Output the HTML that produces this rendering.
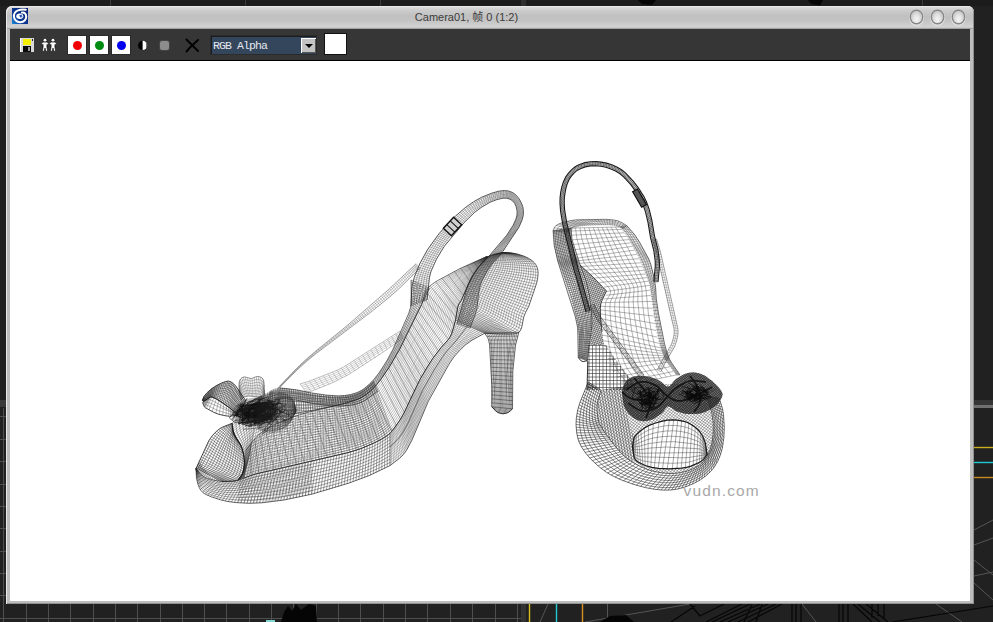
<!DOCTYPE html>
<html><head><meta charset="utf-8"><title>Camera01</title>
<style>
html,body{margin:0;padding:0;background:#212121;}
body{width:993px;height:622px;overflow:hidden;position:relative;font-family:"Liberation Sans","Noto Sans CJK SC",sans-serif;}
#desk{position:absolute;left:0;top:0;width:993px;height:622px;}
#win{position:absolute;left:6px;top:6px;width:968px;height:598px;background:#bdbdbd;border-radius:6px 6px 0 0;overflow:hidden;}
#win:before{content:"";position:absolute;left:0;top:0;right:0;bottom:0;border-radius:6px 6px 0 0;box-shadow:inset 1px 1px 0 #e8e8e8, inset -1px -1px 0 #8f8f8f;z-index:5;pointer-events:none;}
#tbar{position:absolute;left:0;top:0;width:968px;height:23px;background:linear-gradient(to bottom,#f2f2f2 0,#dcdcdc 1px,#cdcdcd 4px,#c0c0c0 10px,#c2c2c2 14px,#cecece 19px,#d4d4d4 21px,#bcbcbc 22px,#8e8e8e 23px);}
#title{position:absolute;left:0;top:0;width:921px;text-align:center;font-size:11px;line-height:23px;color:#3c3c3c;white-space:nowrap;letter-spacing:0px;}
.wb{position:absolute;top:5px;width:11px;height:12px;border-radius:50%;background:radial-gradient(ellipse at 50% 70%,#f4f4f4 0,#e2e2e2 40%,#c4c4c4 75%,#a4a4a4 100%);box-shadow:0 0 0 1.400px #868686, 0 1px 0 2px #dedede;}
#tool{position:absolute;left:4px;top:23px;width:960px;height:31px;background:#363636;border-bottom:1px solid #000;}
#view{position:absolute;left:4px;top:55px;width:960px;height:540px;background:#fff;overflow:hidden;}
.cb{position:absolute;top:7px;width:18px;height:18px;background:#fff;box-shadow:0 0 0 1px #2a2a2a;}
.cb i{position:absolute;left:5px;top:5px;width:9px;height:9px;border-radius:50%;}
#dd{position:absolute;left:201px;top:7px;width:105px;height:18px;background:#34465b;box-shadow:inset 1px 1px 0 #1c1c1c, 0 0 0 1px #2b2b2b;}
#dd span{position:absolute;left:2px;top:0;font-family:"Liberation Mono",monospace;font-size:11.5px;line-height:19px;color:#e4e8ee;letter-spacing:-0.9px;white-space:pre;}
#ddb{position:absolute;left:90px;top:2px;width:15px;height:15px;background:#c3c3c3;box-shadow:inset 1px 1px 0 #fff, inset -1px -1px 0 #555;}
#ddb:after{content:"";position:absolute;left:4px;top:6px;border:4px solid transparent;border-top:4px solid #000;border-bottom:0;}
#sw{position:absolute;left:315px;top:5px;width:21px;height:20px;background:#fff;box-shadow:0 0 0 1px #111;}
</style></head><body>
<svg id="desk" width="993" height="622" viewBox="0 0 993 622">
<rect width="993" height="622" fill="#212121"/>
<rect x="0" y="0" width="993" height="6" fill="#1c1c1c"/><rect x="521" y="0" width="5" height="6" fill="#2e2e2e"/>
<g stroke="#3a3a3a" stroke-width="1">
<path d="M110.500 0V6M245.500 0V6M380.500 0V6M922.500 0V6"/>
</g>
<!-- left viewport grid -->
<g stroke="#4e4e4e" stroke-width="1" shape-rendering="crispEdges">
<path d="M3.5 408V622M26.500 604V622M48.500 604V622M70.500 604V622M93.500 604V622M115.500 604V622M137.500 604V622M160.500 604V622M182.500 604V622M204.500 604V622M226.500 604V622M249.500 604V622M271.500 604V622M293.500 604V622M316.500 604V622M338.500 604V622M360.500 604V622M383.500 604V622M405.500 604V622M427.500 604V622M450.500 604V622M472.500 604V622M495.500 604V622M517.500 604V622"/>
<path d="M0 618.500H521M0 595.500H6M0 573.500H6M0 551.500H6M0 528.500H6M0 506.500H6M0 484.500H6M0 461.500H6M0 439.500H6M0 416.500H6"/>
</g>
<rect x="0" y="400" width="6" height="7" fill="#3a3a3a"/>
<rect x="521" y="604" width="5" height="18" fill="#333"/>
<rect x="974" y="400" width="19" height="5" fill="#353535"/><rect x="974" y="405" width="19" height="3" fill="#707070"/>
<path d="M529.500 604V622" stroke="#d8c020" stroke-width="1.400"/>
<path d="M556.500 604V622" stroke="#20c8d0" stroke-width="1.400"/>
<path d="M582.500 604V622" stroke="#d89020" stroke-width="1.400"/>
<path d="M974 447.500H993" stroke="#c8b020" stroke-width="1.400"/>
<path d="M974 462.500H993" stroke="#20c8d0" stroke-width="1.400"/>
<path d="M974 477.500H993" stroke="#c88a20" stroke-width="1.400"/>
<g stroke="#555" stroke-width="1" fill="none">
<path d="M607.500 604V622M540 622L548 604M585 622L690 604M802 604L816 622M936 604L962 622M974 530L993 520M974 545L993 538M974 560L993 575M974 583L993 600M974 576L993 572"/>
</g>
<g fill="#050505">
<path d="M281 622L284 612L288 606L292 611L296 604L301 610L309 604L316 606L317 622Z"/>
<path d="M638 0L656 0L652 5L642 4Z"/>
<path d="M808 0L823 0L820 5.500L811 4Z"/>
<path d="M600 622L610 616L626 615L634 622Z"/>
</g>
<g stroke="#060606" stroke-width="1.200" fill="none">
<path d="M695 606L671 622M690 604L700 616M700 616L724 604M706 622L742 604M712 622L750 604M720 622L760 604M728 622L768 604M738 622L776 604M748 622L782 604M752 604L744 622M762 604L756 622"/>
<path d="M792 604V622M796 604V622M801 604V622M839 604V622M843 604V622M848 604V622M853 604L872 622M858 604L880 622M866 604L888 622M872 604V618M878 604V616M884 604V620M892 622L993 606"/>
</g>
<rect x="266" y="620" width="9" height="2" fill="#7fd6d0"/>
</svg>
<div id="win">
 <div id="tbar"></div>
 <div id="title">Camera01, 帧 0 (1:2)</div>
 <svg style="position:absolute;left:6px;top:2px" width="16" height="16" viewBox="0 0 16 16">
  <defs><linearGradient id="lg" x1="0" y1="1" x2="1" y2="0"><stop offset="0" stop-color="#1f8fe0"/><stop offset="0.350" stop-color="#0c3a96"/><stop offset="1" stop-color="#0a2070"/></linearGradient></defs>
  <rect width="16" height="16" fill="url(#lg)"/>
  <path d="M13.800 1.700C9 0.900 2.200 2.200 1.900 7.600C1.700 12 5 14.300 8.300 14.200C12 14.100 14.400 11.600 14.200 8.400C14 5.800 12 4.500 10 4.600" fill="none" stroke="#fff" stroke-width="2" stroke-linecap="round"/>
  <ellipse cx="7.800" cy="8.300" rx="3.500" ry="2.700" fill="#fff"/><path d="M7.200 7.200L10.600 6.600L9.400 8.200L11.400 9L8.200 9.600Z" fill="#1a4fb0"/>
 </svg>
 <div class="wb" style="left:905px"></div><div class="wb" style="left:926px"></div><div class="wb" style="left:947px"></div>
 <div id="tool">
  <svg style="position:absolute;left:10px;top:9px" width="14" height="14" viewBox="0 0 14 14" shape-rendering="crispEdges">
   <rect x="0" y="0" width="14" height="14" fill="#d8d8d8"/><rect x="0" y="0" width="1" height="14" fill="#fff"/>
   <rect x="3" y="1" width="8" height="6" fill="#f4f000"/><rect x="3" y="8" width="8" height="6" fill="#0a0a0a"/><rect x="8" y="9" width="2" height="4" fill="#9a9a9a"/>
   <rect x="12" y="1" width="1" height="2" fill="#222"/>
  </svg>
  <svg style="position:absolute;left:31px;top:9px" width="16" height="14" viewBox="0 0 16 14">
   <g fill="#fff" stroke="#000" stroke-width="0.600">
    <circle cx="4" cy="2.200" r="1.900"/><path d="M0.300 5.600L2.300 4.100H5.700L7.700 5.600L6.900 7L5.900 6.400V9L6.700 13.200H4.700L4 10L3.300 13.200H1.300L2.100 9V6.400L1.100 7Z"/>
    <circle cx="12" cy="2.200" r="1.900"/><path d="M8.300 5.600L10.300 4.100H13.700L15.700 5.600L14.900 7L13.900 6.400V9L14.700 13.200H12.700L12 10L11.300 13.200H9.300L10.100 9V6.400L9.100 7Z"/>
   </g>
  </svg>
  <div class="cb" style="left:58px"><i style="background:#f00000"></i></div>
  <div class="cb" style="left:80px"><i style="background:#008a10"></i></div>
  <div class="cb" style="left:102px"><i style="background:#0000f0"></i></div>
  <svg style="position:absolute;left:127px;top:11px" width="12" height="11" viewBox="0 0 12 11">
   <circle cx="5.600" cy="5.400" r="4.600" fill="#000"/><path d="M5.600 0.800A4.600 4.600 0 0 1 5.600 10Z" fill="#fff"/><path d="M9 2.200A4.600 4.600 0 0 1 9 8.600Z" fill="#000" opacity="0.550"/>
  </svg>
  <rect/>
  <div style="position:absolute;left:150px;top:12px;width:9px;height:9px;background:#8c8c8c;border-radius:2px;box-shadow:0 0 0 1px #444"></div>
  <svg style="position:absolute;left:175px;top:9px" width="15" height="15" viewBox="0 0 15 15"><path d="M1.500 1.500L13 13M13 2L5 9.500L1.500 13.500" stroke="#000" stroke-width="1.900" fill="none" stroke-linecap="round"/></svg>
  <div id="dd"><span>RGB Alpha</span><div id="ddb"></div></div>
  <div id="sw"></div>
 </div>
 <div id="view"></div>
</div>
<svg id="shoes" style="position:absolute;left:0;top:0" width="993" height="622" viewBox="0 0 993 622">
<defs><clipPath id="vc"><rect x="10" y="61" width="960" height="540"/></clipPath></defs>
<g clip-path="url(#vc)">
<path d="M279.4 386.9 296.4 369.3 305.9 360.3 316.6 351.3 353.4 322.1 385.8 294.8 417.4 265.2M279.6 387.1 296.7 369.6 306.3 360.8 317.1 351.9 365.7 314.1 387.1 296.4 401.1 283.8 418.6 266.8M279.2 386.6 279.8 387.4M280 385.8 280.6 386.6M280.8 385 281.4 385.8M281.6 384.2 282.2 385M282.6 383.1 283.2 383.9M283.6 382 284.3 382.9M284.6 380.9 285.3 381.8M285.8 379.6 286.5 380.5M287 378.3 287.8 379.3M288.3 377 289 378M289.6 375.6 290.4 376.6M291 374.2 291.8 375.2M292.4 372.7 293.2 373.7M293.9 371.2 294.8 372.2M295.4 369.6 296.3 370.7M297 368.1 297.9 369.2M298.5 366.5 299.5 367.7M300.1 365 301.1 366.2M301.8 363.4 302.8 364.7M303.4 361.9 304.5 363.2M305.1 360.3 306.1 361.7M306.8 358.8 307.9 360.2M308.5 357.2 309.7 358.7M310.3 355.7 311.5 357.2M312.2 354.1 313.4 355.7M314.1 352.5 315.4 354.1M316 350.9 317.4 352.6M318.1 349.2 319.5 351M320.1 347.5 321.7 349.4M322.2 345.8 323.8 347.8M324.4 344.1 326 346.1M326.5 342.3 328.2 344.5M328.7 340.6 330.4 342.8M330.8 338.9 332.7 341.2M333 337.1 334.9 339.5M335.2 335.4 337.2 337.9M337.3 333.6 339.4 336.2M339.5 331.9 341.6 334.6M341.6 330.2 343.8 332.9M343.7 328.5 346 331.3M345.8 326.8 348.1 329.7M347.8 325.1 350.2 328.1M349.7 323.4 352.2 326.6M351.7 321.8 354.2 325M353.6 320.1 356.3 323.5M355.6 318.5 358.3 321.9M357.5 316.8 360.3 320.3M359.4 315.2 362.3 318.8M361.3 313.5 364.3 317.3M363.2 311.9 366.3 315.7M365.1 310.2 368.2 314.2M367 308.6 370.2 312.6M368.9 307 372.2 311.1M370.7 305.4 374.1 309.6M372.6 303.7 376 308.1M374.4 302.1 377.9 306.6M376.2 300.6 379.8 305.1M377.9 299 381.6 303.6M379.7 297.4 383.4 302.1M381.4 295.9 385.2 300.7M383.1 294.4 386.9 299.2M384.8 292.9 388.7 297.8M386.4 291.5 390.3 296.4M388 290 392 295M389.6 288.6 393.6 293.6M391.2 287.1 395.2 292.1M392.8 285.6 396.8 290.7M394.4 284.2 398.4 289.2M396 282.7 400 287.7M397.6 281.2 401.6 286.2M399.2 279.7 403.2 284.8M400.7 278.3 404.7 283.3M402.2 276.8 406.2 281.8M403.7 275.5 407.7 280.4M405.1 274.1 409.1 279M406.6 272.8 410.5 277.7M407.9 271.5 411.8 276.4M409.2 270.3 413 275.1M410.4 269.1 414.3 273.9M411.5 268 415.3 272.8M412.6 267 416.4 271.8M413.7 266 417.4 270.7M414.5 265.2 418.3 269.9M415.3 264.4 419.1 269.1M416.1 263.7 419.9 268.3" fill="none" stroke="#3a3a3a" stroke-width="0.27"/>
<path d="M279.2 386.6 296.1 368.9 305.5 359.9 316.2 350.7 346.9 325.8 389.2 289 416.1 263.7M279.8 387.4 297 370 306.6 361.3 317.5 352.5 372.4 310.9 388.4 298 397.8 289.8 419.9 268.3" fill="none" stroke="#444" stroke-width="0.48"/>
<path d="M301.2 385.6 306.8 384.1 333.9 373.7 344.4 368.6 400.6 332.4M302.4 387.2 308 385.9 335 375.3 345.4 370.2 401.2 333.8M303.6 388.8 309.2 387.6 336 376.9 346.3 371.7 401.8 335.2M304.8 390.4 310.4 389.4 334.4 379.7 347.3 373.2 402.4 336.6M300 384 306 392M304.8 382.7 310.8 391.3M309.4 381.1 315.5 389.9M314.1 379.3 320 388.1M318.7 377.6 324.5 386.2M323.4 375.9 328.9 384.3M328 374.1 333.3 382.3M332.6 372.2 337.7 380.2M337.1 370.3 342.1 378M341.5 368.1 346.4 375.8M345.9 365.8 350.6 373.4M350.1 363.2 354.8 370.9M354.3 360.6 358.9 368.3M358.5 357.9 363 365.7M362.6 355.2 367.1 363M366.8 352.5 371.2 360.4M371 349.9 375.2 357.7M375.2 347.2 379.2 354.9M379.3 344.6 383.2 352.1M383.5 341.9 387.1 349.2M387.7 339.3 391.1 346.4M391.8 336.6 395.1 343.6M395.9 333.8 399 340.8M400 331 403 338" fill="none" stroke="#444" stroke-width="0.25"/>
<path d="M300 384 308.4 381.5 335.6 370.9 343.5 367.1 400 331M306 392 311.7 391.1 332.9 382.5 348.3 374.7 382 352.9 403 338" fill="none" stroke="#555" stroke-width="0.40"/>
<path d="M486.8 256.5 463.6 267.5 441.4 280.2 435.3 284.2 432.4 286.4 429.8 289 427.7 292 426.2 295.3 423.2 306 398.1 355.3 388.7 371.2 382.5 380.3 378 386.2 373 391.6 370.3 394.1 367.4 396.4 364.4 398.4 361.1 400.2 357.7 401.7 347.2 405.1 307.8 414.7 293.7 419 276.6 426 270 429.3 263.6 433 260.7 435.1 257.9 437.5 252.9 442.8 245.9 451.3M486.9 256.5 470.4 264.6 454.6 273.6 439.2 283.4 433.6 287.9 431.1 290.5 429 293.5 427.6 296.9 424.5 307.6 397.2 360.2 387.6 376 381.3 385.2 376.5 390.9 371.3 396.1 368.4 398.4 365.3 400.4 362 402.2 355.2 405 344.5 408.2 304.9 417.9 294.3 421.2 277.1 428.1 267.2 433 264 434.9 261 436.9 258.2 439.3 253 444.4 245.8 452.7M487 256.5 473.8 263.1 458.2 272.4 440.2 284.7 434.8 289.3 432.4 292 430.4 295.1 429 298.5 427 305.7 425.8 309.2 396.2 365.1 386.5 381 379.9 390 375 395.5 372.3 398.1 369.4 400.4 366.2 402.4 363 404.2 356.1 407 345.4 410.3 305.6 420.1 295 423.4 277.6 430.1 267.6 434.9 261.3 438.8 258.4 441 253.1 445.9 245.7 454M487.1 256.5 474 263.4 458.7 273.2 441.2 285.9 436 290.8 433.7 293.6 431.7 296.7 430.3 300.1 428.3 307.3 427.1 310.9 393.4 373.3 385.4 385.9 380.9 391.9 375.9 397.5 373.2 400.1 370.3 402.4 367.2 404.4 363.9 406.2 357 409.1 346.3 412.4 306.3 422.3 292.1 426.8 274.7 433.7 268 436.9 261.6 440.6 255.9 445 245.6 455.3M487.2 256.5 474.3 263.7 459.2 273.9 447.9 282.8 444.9 284.9 442.1 287.2 437.2 292.2 435 295.1 433.1 298.3 431.7 301.7 429.7 309 428.4 312.5 392.4 378.3 386.3 387.7 381.8 393.8 376.9 399.4 374.2 402 371.3 404.4 368.1 406.4 364.8 408.2 357.9 411.1 347.2 414.5 303.4 425.5 285.7 431.5 271.8 437.2 265.1 440.5 262 442.4 256.1 446.7 245.5 456.7M487.3 256.5 474.5 264 459.7 274.6 448.7 283.9 445.8 286.1 443.1 288.5 438.4 293.7 436.3 296.6 434.4 299.8 433.1 303.3 431 310.6 429.7 314.1 414.7 340.1 393.3 380 387.3 389.6 382.8 395.7 377.9 401.4 375.2 404 372.2 406.4 369.1 408.4 362.3 411.8 351.6 415.6 304.1 427.7 282.7 435 268.9 440.7 262.3 444.2 256.3 448.3 250.8 453 245.4 458M487.4 256.5 474.7 264.3 463.1 273.1 449.6 285 446.6 287.3 444.1 289.7 439.6 295.2 437.6 298.1 435.8 301.4 434.5 304.9 432.3 312.2 431 315.7 415.7 341.7 394.2 381.8 388.2 391.5 383.8 397.6 378.8 403.3 376.1 406 373.2 408.4 370 410.4 363.2 413.8 352.5 417.7 301.2 431 279.7 438.4 269.3 442.7 262.6 446 256.5 450 250.8 454.5 245.3 459.3M487.5 256.5 474.9 264.6 463.5 273.7 450.4 286.1 447.5 288.4 445 291 440.8 296.6 438.9 299.7 437.1 303 435.8 306.5 433.7 313.8 432.3 317.3 418.5 340 395.1 383.6 389.2 393.3 384.7 399.5 379.8 405.3 377.1 408 374.1 410.4 370.9 412.4 364.1 415.8 353.4 419.8 301.8 433.2 280.2 440.4 266.3 446.1 259.8 449.6 253.8 453.7 245.2 460.7M487.6 256.5 475.1 264.8 466.6 271.9 458.7 279.4 451.2 287.2 448.4 289.6 446 292.3 442 298.1 440.1 301.2 438.5 304.5 435 315.5 433.6 319 419.5 341.5 394.2 388.7 390.1 395.2 385.7 401.4 380.8 407.3 378.1 410 375.1 412.4 371.9 414.4 365 417.8 354.3 421.9 298.8 436.5 277.2 443.8 266.7 448 260 451.4 253.9 455.3 245.1 462M487.7 256.5 475.3 265.1 467 272.4 459.3 280.2 452.1 288.3 449.3 290.8 447 293.6 443.2 299.5 441.4 302.7 439.8 306.1 436.3 317.1 434.9 320.6 420.5 343.1 395.1 390.5 391.1 397 386.6 403.3 381.7 409.2 379 411.9 376.1 414.4 372.8 416.4 365.9 419.9 355.2 424 299.5 438.6 274.1 447.1 263.6 451.4 257.1 454.9 251 458.9 245 463.3M487.7 256.5 475.5 265.4 467.4 273 459.9 281 452.9 289.4 450.2 292 447.9 294.8 442.7 304.2 441.2 307.7 437.7 318.7 436.2 322.2 423.5 341.4 394.1 395.6 389.9 402.1 385.2 408.2 382.7 411.2 380 413.9 377 416.4 373.8 418.4 366.9 421.9 356.1 426.1 300.1 440.8 274.5 449.1 263.9 453.2 257.3 456.6 251 460.4 245 464.7M487.8 256.5 478.7 263.3 473 268.2 462.9 279 453.7 290.5 451 293.2 448.9 296.1 444 305.8 442.5 309.3 439 320.3 437.4 323.8 435.4 327.1 424.5 343 395 397.5 390.8 404 386.2 410.2 383.7 413.1 381 415.9 378 418.3 374.7 420.4 367.8 423.9 357 428.2 345.8 431.5 300.8 443 271.4 452.4 264.3 455.1 257.5 458.2 251.1 461.9 244.9 466M487.9 256.5 478.9 263.5 473.2 268.6 463.4 279.8 454.6 291.6 451.9 294.3 449.9 297.4 445.3 307.3 443.9 310.8 440.4 321.9 438.7 325.5 436.6 328.7 427.6 341.3 419.5 354.5 396 399.3 391.8 405.8 387.1 412.1 384.7 415.1 381.9 417.9 378.9 420.3 375.6 422.4 368.7 425.9 357.9 430.3 346.7 433.7 297.7 446.2 268.2 455.5 261.1 458.3 254.4 461.5 244.8 467.3M488 256.5 479 263.7 473.5 268.9 463.9 280.5 455.4 292.7 452.8 295.5 450.8 298.7 445.2 312.4 441.7 323.6 440 327.1 437.9 330.3 433.1 336.4 424.4 349.4 405.8 383.8 398.8 397.7 394.9 404.5 388.1 414 385.6 417 382.9 419.9 379.9 422.3 376.6 424.4 369.6 427.9 358.7 432.4 347.6 435.9 290.8 450.6 268.5 457.4 257.9 461.5 251.2 464.8 244.7 468.7M488.1 256.5 479.2 263.9 476.4 266.5 471.3 272.2 464.4 281.2 456.3 293.8 453.7 296.7 451.8 299.9 446.6 314 443 325.2 441.3 328.7 439.1 331.9 434.3 338 425.4 351 412 374.9 399.7 399.5 395.9 406.3 389.1 416 386.6 419 383.9 421.8 380.8 424.3 377.5 426.4 370.5 430 359.6 434.5 348.4 438 280.1 455.9 265.2 460.5 258.1 463.1 251.2 466.3 244.6 470M488.2 256.5 479.4 264.1 476.6 266.8 471.6 272.7 464.9 282 457.1 295 454.6 297.9 452.8 301.2 447.9 315.5 445.7 323.1 444.4 326.8 442.6 330.3 440.3 333.5 435.4 339.6 426.4 352.5 414.7 373.1 398.8 404.8 394.6 411.5 390 417.9 387.6 421 384.8 423.8 381.8 426.3 378.4 428.4 371.4 432 360.5 436.6 349.3 440.2 269.3 461.2 258.3 464.8 251.3 467.8 244.5 471.3M488.3 256.5 479.6 264.3 476.8 267.1 471.9 273.1 465.5 282.7 457.9 296.1 455.4 299.1 453.7 302.5 447.1 324.7 445.7 328.4 443.9 331.9 441.6 335.1 436.5 341.2 427.4 354.1 415.6 374.7 399.8 406.6 395.6 413.4 391 419.8 388.5 422.9 385.8 425.8 382.8 428.3 379.4 430.4 368.7 435.6 357.7 440 265.9 464.1 254.9 467.8 244.4 472.7M488.4 256.5 479.7 264.5 477 267.4 474.5 270.4 470.1 276.8 464.1 286.8 458.8 297.2 456.3 300.2 454.7 303.7 448.4 326.3 447.1 330.1 445.2 333.6 442.8 336.7 437.7 342.7 428.4 355.7 418.3 372.8 407.6 394.1 402.5 404.9 398.7 411.9 392 421.8 389.5 424.9 386.8 427.8 383.7 430.3 380.3 432.4 369.6 437.7 358.6 442.1 331.7 449.6 262.5 467 255 469.3 244.3 474M488.5 256.5 479.9 264.8 477.2 267.7 474.8 270.8 470.4 277.4 464.7 287.6 459.6 298.3 457.2 301.4 455.7 305 453 316.4 449.8 327.9 448.4 331.7 446.5 335.2 444.1 338.3 438.8 344.3 429.4 357.2 419.2 374.4 410.2 392.2 403.5 406.7 399.7 413.8 392.9 423.7 390.5 426.8 387.7 429.8 384.7 432.3 381.3 434.4 370.5 439.7 359.4 444.3 336.4 450.8 258.9 469.7 251.4 472.2 244.2 475.3M488.6 256.5 480.1 265 477.4 268 475 271.1 470.8 277.9 465.3 288.5 460.4 299.4 458.1 302.6 456.6 306.3 454.3 318 451.2 329.6 449.7 333.3 447.8 336.8 445.3 340 439.9 345.9 432.7 355.5 426.1 365.6 418.2 379.5 409.4 397.6 404.4 408.6 400.6 415.6 393.9 425.6 391.4 428.8 388.7 431.7 385.6 434.3 382.2 436.4 371.4 441.8 360.3 446.4 348.8 450 259.1 471.4 251.5 473.7 244.1 476.7M486.7 256.5 488.7 256.5M480.2 259.3 483.2 262M473.6 262.1 478 267.8M467.2 265.1 473.6 274.3M460.8 268.2 469.8 281.1M454.4 271.4 466.4 288.1M448.2 274.8 463.4 295.3M442 278.2 460 302.3M435.8 281.8 457.3 309.5M430.1 286 456.1 317.2M425.8 291.6 454.3 324.8M423.6 298.3 452.1 332.2M421.6 305.1 448.5 339.1M418.7 311.6 443.4 344.9M415.4 317.9 438.4 350.9M412.2 324.2 433.7 357.1M409 330.6 429.3 363.6M405.9 337 425.2 370.2M402.7 343.3 421.3 377M399.5 349.6 417.6 383.9M396 355.9 414.2 390.9M392.4 362 410.9 397.9M388.7 368 407.8 405.1M384.7 373.9 404.4 412.2M380.6 379.7 400.6 419M376.1 385.3 396.3 425.5M371.2 390.4 391.6 431.6M365.8 394.9 385.8 436.8M359.6 398.4 378.9 440.6M353 401 371.9 444M346.2 403 364.8 447.1M339.3 404.7 357.5 449.8M332.3 406.2 350 452.1M325.4 407.7 342.5 454.1M318.5 409.4 334.9 456M311.6 411.2 327.3 457.8M304.7 413.1 319.7 459.5M297.9 415.2 312.1 461.3M291.2 417.5 304.5 463.1M284.6 420.2 296.9 464.9M278.1 423 289.3 466.6M271.7 426.1 281.7 468.3M265.6 429.6 274.1 470M259.8 433.8 266.4 471.5M254.8 438.8 258.8 473.1M250.3 444.4 251.3 475.3M246 450 244 478" fill="none" stroke="#2b2b2b" stroke-width="0.32"/>
<path d="M486.7 256.5 459.9 268.6 437.3 280.8 434.2 282.8 431.2 285 428.5 287.5 426.4 290.4 424.8 293.7 421.9 304.4 399 350.4 389.8 366.3 381.6 378.5 377 384.3 372.1 389.6 369.4 392.1 366.5 394.4 363.4 396.4 360.2 398.2 356.8 399.7 346.3 403 307 412.5 293 416.9 279.4 422.4 269.5 427.3 263.3 431.1 260.3 433.3 257.6 435.8 252.7 441.3 246 450M488.7 256.5 480.3 265.2 477.6 268.2 475.3 271.5 471.2 278.4 465.9 289.3 461.3 300.5 459 303.8 457.6 307.6 455.6 319.5 453.7 327.3 452.5 331.2 451.1 334.9 449.1 338.4 446.5 341.6 441.1 347.5 433.7 357.1 427 367.2 419 381.2 410.3 399.3 405.3 410.4 401.6 417.5 394.9 427.5 392.4 430.7 389.7 433.7 386.6 436.3 383.1 438.4 372.3 443.8 361.2 448.5 349.7 452.2 271.2 470.6 255.4 474 247.8 476.5 244 478" fill="none" stroke="#1a1a1a" stroke-width="0.64"/>
<path d="M414.1 281.3 412.9 299.4 412.2 305.4 411.7 308.4 408.7 317 393.5 350.4 386.1 363.7 379.4 373.9 373.7 381.1 369.5 385.5 364.8 389.5 362.3 391.1 359.6 392.6 356.8 393.8 351 395.6 345 396.7 338.9 397.3 317.7 396.4 293.7 393.3 278.5 392.5M417.2 282.7 413.6 306.4 412.9 309.4 396.9 345.8 388.2 362 379.8 374.8 374.1 382.1 369.9 386.5 365.2 390.4 362.7 392.1 357.2 394.8 351.4 396.7 345.4 397.9 336.3 398.9 315.1 398.9 294 397.3 278.8 397.2M420.2 284 415 307.5 413 313.2 396.2 349.5 388.7 362.9 380.3 375.7 374.6 383 370.3 387.4 365.6 391.4 363 393.1 357.6 395.8 351.7 397.8 342.8 399.7 318.5 401.5 291.3 401.3 279.1 401.9M423.2 285.3 416.3 308.5 398.2 347.6 389.2 363.8 380.7 376.6 375 383.9 370.7 388.3 366 392.3 360.7 395.5 355.1 398 346.2 400.4 331.1 402.8 309.8 404.6 279.4 406.6M426.3 286.7 417.7 309.6 397.4 351.3 388.1 367.3 379.3 380 375.4 384.8 371.1 389.3 366.4 393.3 361.1 396.5 355.5 399 343.6 402.3 316.3 406.9 279.7 411.3M411.1 280 429.3 288M411.1 282.2 428.4 290M411.2 284.4 427.5 292.1M411.2 286.6 426.6 294.1M411.2 288.8 425.7 296.2M411.2 290.9 424.8 298.2M411.2 293.1 423.9 300.3M411.2 295.3 423 302.3M411.2 297.5 422.1 304.3M411.1 299.7 421.1 306.3M411 301.9 420.2 308.3M410.9 304.1 419.2 310.4M410.6 306.2 418.2 312.3M410.2 308.4 417.2 314.3M409.6 310.5 416.2 316.3M409 312.6 415.2 318.3M408.2 314.6 414.1 320.3M407.5 316.7 413.1 322.3M406.7 318.7 412.1 324.3M405.8 320.8 411.1 326.3M405 322.8 410.1 328.3M404.1 324.8 409.1 330.3M403.3 326.8 408.2 332.3M402.4 328.8 407.2 334.3M401.5 330.8 406.2 336.3M400.6 332.8 405.2 338.3M399.7 334.8 404.2 340.3M398.8 336.8 403.2 342.3M397.9 338.8 402.2 344.3M397 340.8 401.2 346.3M396.1 342.8 400.2 348.2M395.2 344.7 399.1 350.2M394.2 346.7 398.1 352.2M393.3 348.7 397 354.1M392.3 350.7 395.9 356.1M391.3 352.6 394.8 358M390.3 354.6 393.7 359.9M389.3 356.5 392.5 361.8M388.2 358.4 391.4 363.7M387.2 360.3 390.2 365.6M386 362.2 389 367.5M384.9 364.1 387.8 369.4M383.7 365.9 386.6 371.3M382.6 367.8 385.3 373.1M381.4 369.6 384 375M380.1 371.4 382.8 376.8M378.9 373.2 381.5 378.6M377.6 375 380.1 380.4M376.2 376.7 378.8 382.1M374.9 378.4 377.4 383.9M373.4 380.1 375.9 385.6M372 381.7 374.4 387.2M370.5 383.3 372.9 388.8M368.9 384.8 371.3 390.4M367.3 386.3 369.6 391.9M365.6 387.6 367.9 393.3M363.8 388.9 366.1 394.7M362 390.1 364.3 395.9M360 391.2 362.4 397M358.1 392.1 360.4 398.1M356 392.9 358.4 399M354 393.6 356.3 399.9M351.9 394.2 354.2 400.6M349.7 394.7 352.1 401.3M347.6 395.1 349.9 402M345.4 395.4 347.8 402.6M343.2 395.6 345.7 403.2M341.1 395.8 343.5 403.8M338.9 395.8 341.3 404.3M336.7 395.8 339.2 404.8M334.5 395.7 337 405.4M332.3 395.6 334.8 405.9M330.1 395.4 332.7 406.3M327.9 395.2 330.5 406.8M325.8 395 328.3 407.3M323.6 394.7 326.1 407.8M321.4 394.5 323.9 408.2M319.3 394.2 321.7 408.6M317.1 393.9 319.6 409.1M314.9 393.6 317.4 409.5M312.8 393.2 315.2 409.9M310.6 392.8 313 410.3M308.5 392.3 310.8 410.6M306.3 391.9 308.6 411M304.2 391.4 306.4 411.3M302.1 390.9 304.2 411.7M299.9 390.5 301.9 412M297.8 390.1 299.7 412.4M295.6 389.7 297.5 412.7M293.4 389.4 295.3 413.1M291.3 389.1 293.2 413.5M289.1 388.9 291 413.9M286.9 388.6 288.8 414.3M284.7 388.4 286.6 414.7M282.6 388.2 284.4 415.2M280.4 388 282.2 415.6M278.2 387.8 280 416" fill="none" stroke="#2b2b2b" stroke-width="0.37"/>
<path d="M411.1 280 411.2 298.3 410.9 304.4 410.5 307.4 408.8 313.2 392.9 349.5 387.2 360.2 379 373 373.3 380.2 369.1 384.6 364.4 388.5 361.9 390.2 359.2 391.6 356.4 392.8 350.6 394.6 344.6 395.5 338.5 395.9 326.3 395.1 311.3 392.9 296.4 389.8 278.2 387.8M429.3 288 399.6 349.4 388.6 368.2 379.7 380.9 375.8 385.7 371.5 390.2 366.8 394.2 361.5 397.5 355.8 400 341 404.4 313.6 410.2 280 416" fill="none" stroke="#1a1a1a" stroke-width="0.64"/>
<path d="M196 468.6 199.5 473.3 201.5 475.5 203.7 477.4 206.2 478.9 211.7 481 217.4 482.5 223.4 483.2 229.4 483.4 232.3 483.2 238.2 482.1 252.4 477.5 343.4 457 357.8 452.7 371.8 447.1 379.9 443.1 390 436.6M196 468.6 199.2 473.5 200.9 475.8 203 477.8 205.3 479.5 207.8 480.9 210.4 482.1 213.2 483 219.1 484.3 225 485 231 485.1 236.9 484.2 254.2 479.7 337.1 461.8 357.5 455.9 371.6 450.3 379.7 446.3 390 439.8M196 468.6 198.8 473.7 200.4 476.1 202.3 478.3 204.4 480.1 206.7 481.7 209.2 483.1 211.9 484.2 214.8 485.1 220.7 486.2 226.7 486.8 229.7 486.9 235.6 486.4 256.1 482.1 324.8 468.1 354.3 460 368.5 454.6 379.6 449.4 390 443.1M196 468.6 198.4 473.9 199.8 476.4 201.5 478.7 203.5 480.7 205.7 482.5 208 484.1 210.6 485.4 213.5 486.4 219.4 487.7 225.4 488.6 231.4 488.7 237.3 488.2 291.4 479.1 342.2 466.7 359.7 461.1 373.9 455.2 382.1 451.1 390 446.3M196 468.6 198.1 474.1 199.3 476.7 200.8 479.1 202.6 481.3 204.6 483.3 206.8 485.1 209.3 486.6 212.1 487.7 218.1 489.2 224.1 490.3 230.1 490.7 236.1 490.4 278.5 484.8 329.8 473.3 356.5 465.3 370.9 459.7 382 454.2 390 449.5M196 468.6 197.7 474.2 198.7 477 200.1 479.6 201.7 481.9 203.5 484.1 205.6 486.1 208 487.8 210.8 489 216.7 490.7 222.7 492 228.8 492.7 234.9 492.7 268.5 489.5 305.2 482.6 347.3 471.4 364.9 465.2 379.2 458.8 390 452.7M196 468.6 197.3 474.4 198.2 477.3 199.4 480 200.8 482.5 202.4 484.9 204.4 487.1 206.8 489 209.5 490.3 215.4 492.3 221.4 493.7 227.5 494.7 233.6 495 258.3 493.8 283.1 490.4 322.9 481.5 352.9 472.6 370.5 465.9 381.8 460.5 390 455.9M196 468.6 197.6 477.6 198.6 480.4 199.9 483.2 201.3 485.7 203.2 488.1 205.5 490.1 208.2 491.7 214.1 493.8 223.1 496.1 229.3 497 241.6 497.4 260.5 496.6 282.3 493.8 316.3 486.5 349.6 476.7 370.3 469 390 459.2M196 468.6 197.1 477.9 197.9 480.9 199 483.8 200.3 486.6 201.9 489.1 204.2 491.3 206.9 493 212.7 495.3 221.8 498 228 499.1 237.4 500 253.2 500.2 275.3 498.1 303.4 492.9 340.2 482.9 367.1 473.4 381.6 466.8 390 462.4M196 468.6 196 468.6M197.9 470.8 196.1 471.7M199.8 473 196.2 474.8M201.9 475.1 196.5 477.9M204.2 476.8 197.1 481M206.8 478.1 197.9 483.9M209.5 479.1 199 486.9M212.3 479.9 200.4 489.6M215.1 480.5 202.4 492M218 481 204.9 493.8M220.9 481.4 207.6 495.3M223.8 481.6 210.5 496.4M226.7 481.7 213.4 497.5M229.6 481.7 216.3 498.5M232.5 481.5 219.3 499.4M235.4 481 222.3 500.3M238.2 480.3 225.3 501M241 479.5 228.4 501.6M243.7 478.5 231.4 502.1M246.4 477.4 234.5 502.4M249.1 476.3 237.6 502.7M251.8 475.3 240.7 503M254.5 474.3 243.8 503.1M257.3 473.5 246.9 503.2M260.1 472.8 250 503.3M263 472.2 253.1 503.3M265.8 471.6 256.2 503.1M268.7 471 259.3 503M271.5 470.5 262.4 502.7M274.4 469.9 265.5 502.4M277.2 469.3 268.6 502.1M280.1 468.7 271.7 501.8M282.9 468.1 274.8 501.4M285.7 467.4 277.9 501M288.6 466.8 280.9 500.5M291.4 466.1 284 500M294.2 465.5 287.1 499.5M297.1 464.8 290.1 498.9M299.9 464.2 293.2 498.3M302.7 463.5 296.2 497.7M305.6 462.8 299.3 497.1M308.4 462.2 302.3 496.4M311.2 461.5 305.3 495.7M314.1 460.8 308.3 495M316.9 460.2 311.4 494.3M319.7 459.5 314.4 493.5M322.6 458.9 317.4 492.7M325.4 458.2 320.4 491.9M328.2 457.6 323.4 491M331.1 456.9 326.4 490.2M333.9 456.3 329.3 489.3M336.7 455.6 332.3 488.4M339.5 454.9 335.3 487.5M342.3 454.1 338.2 486.6M345.2 453.4 341.2 485.6M348 452.7 344.2 484.7M350.8 451.9 347.1 483.7M353.6 451.1 350 482.7M356.3 450.2 353 481.6M359.1 449.3 355.9 480.6M361.8 448.3 358.8 479.6M364.5 447.2 361.8 478.5M367.2 446.1 364.7 477.4M369.9 444.9 367.6 476.2M372.5 443.7 370.4 475.1M375.1 442.5 373.3 473.8M377.8 441.2 376.1 472.5M380.3 439.8 378.9 471.2M382.8 438.4 381.7 469.8M385.3 436.8 384.5 468.4M387.6 435.1 387.2 467M390 433.4 390 465.6" fill="none" stroke="#2b2b2b" stroke-width="0.43"/>
<path d="M196 468.6 199.9 473.1 202 475.2 204.5 477 207.2 478.3 212.9 480 218.7 481.1 224.7 481.7 230.7 481.7 233.7 481.4 239.5 480 253.4 474.6 262.1 472.3 346.7 453 360.9 448.6 374.7 442.7 380 440 390 433.4M196 468.6 196.5 478.2 197.2 481.3 198 484.4 199.2 487.4 200.7 490.2 202.9 492.5 205.5 494.3 211.4 496.8 220.5 499.8 226.7 501.3 236.2 502.6 249 503.3 261.8 502.8 284 500 312.1 494.1 348.9 483.1 369.8 475.3 390 465.6" fill="none" stroke="#1a1a1a" stroke-width="0.68"/>
<path d="M390 435.9 399.8 423.3 404.5 415.5 419.9 382.4 432.7 360.8 442.3 348 449.9 339.5 452.3 335.6 457.7 321M390 438.4 398.9 427.7 402.7 421.8 421.7 381.9 433.6 361.9 443.2 348.7 451 340.1 453.6 336.3 460 322M390 440.8 399.3 430.1 403.2 424.2 422.4 383.4 435.8 361 444.2 349.5 452.1 340.7 454.9 336.9 462.2 323M390 443.3 399.7 432.6 403.7 426.6 422 387.1 436.7 362.1 445.1 350.3 454.7 339.4 464.5 324.1M390 445.8 398.5 437 401.5 433.1 406.5 424.6 422.7 388.7 439 361.1 446.1 351 455.9 340 466.7 325.1M390 448.3 398.8 439.5 401.9 435.5 408.1 424.6 423.4 390.3 441.2 360 447 351.8 469 326.1M390 450.7 399.1 441.9 402.4 438 408.7 426.9 424.1 391.8 442.1 360.9 448 352.6 471.2 327.1M390 453.2 399.5 444.4 402.8 440.4 406.8 433.8 424.8 393.4 444.4 359.7 449 353.4 473.5 328.1M390 455.7 399.8 446.9 403.2 442.9 407.3 436.1 425.5 395 445.3 360.6 449.9 354.1 462.5 340.7 475.7 329.1M390 458.2 400.1 449.4 403.6 445.3 407.8 438.4 426.2 396.6 446.3 361.5 450.9 354.9 459.9 345 467.7 337.9 478 330.2M390 460.6 398.5 453.8 402.3 449.9 405.6 445.5 410.8 435.9 426.9 398.1 447.2 362.4 451.8 355.7 459.1 347.5 465.1 341.9 480.2 331.2M390 463.1 398.7 456.2 402.7 452.4 406 447.9 411.3 438.1 427.6 399.7 448.1 363.3 452.8 356.4 458.2 350.1 464.2 344.3 470.8 339.3 482.5 332.2M390 433.4 390 465.6M391.1 432 391.8 464.3M392.1 430.6 393.6 462.9M393.2 429.2 395.3 461.6M394.3 427.8 397.1 460.2M395.4 426.4 398.8 458.9M396.4 425 400.5 457.4M397.5 423.6 402.1 455.9M398.5 422.2 403.6 454.2M399.5 420.7 405 452.5M400.5 419.3 406.2 450.6M401.4 417.8 407.4 448.7M402.3 416.2 408.5 446.8M403.1 414.7 409.5 444.8M404 413.1 410.6 442.8M404.7 411.6 411.6 440.9M405.5 410 412.5 438.9M406.3 408.4 413.5 436.8M407 406.8 414.3 434.8M407.7 405.2 415.2 432.7M408.4 403.6 416.1 430.7M409.1 402 416.9 428.6M409.8 400.3 417.8 426.6M410.5 398.7 418.7 424.6M411.2 397.1 419.6 422.5M412 395.5 420.5 420.5M412.7 393.9 421.3 418.4M413.5 392.3 422.2 416.4M414.2 390.7 423 414.3M415 389.2 423.8 412.2M415.8 387.6 424.6 410.1M416.6 386 425.4 408.1M417.3 384.4 426.2 406M418.1 382.9 427.1 404M419 381.3 428 401.9M419.8 379.7 429 399.9M420.6 378.2 430.1 398M421.5 376.7 431.1 396M422.4 375.1 432.2 394.1M423.2 373.6 433.3 392.2M424.1 372.1 434.4 390.2M425 370.6 435.5 388.3M425.9 369 436.6 386.3M426.8 367.5 437.6 384.4M427.7 366 438.7 382.4M428.7 364.5 439.8 380.5M429.6 363.1 440.8 378.5M430.6 361.6 441.9 376.6M431.6 360.1 443 374.6M432.6 358.7 444.1 372.7M433.6 357.2 445.2 370.8M434.6 355.8 446.3 368.8M435.7 354.4 447.4 366.9M436.7 353 448.5 365M437.8 351.6 449.7 363.1M438.9 350.2 450.9 361.2M440 348.8 452.1 359.4M441.1 347.5 453.5 357.6M442.2 346.1 454.8 355.8M443.4 344.8 456.3 354.1M444.7 343.6 457.7 352.4M445.9 342.3 459.2 350.8M447 341 460.8 349.2M448.2 339.6 462.4 347.7M449.2 338.2 464 346.1M450.1 336.7 465.7 344.7M450.9 335.2 467.4 343.3M451.6 333.5 469.3 342M452.2 331.9 471.1 340.8M452.8 330.2 473 339.6M453.3 328.5 474.9 338.5M453.7 326.8 476.8 337.4M454.2 325.1 478.8 336.3M454.6 323.4 480.8 335.3M455 321.7 482.7 334.2M455.5 320 484.7 333.2" fill="none" stroke="#2b2b2b" stroke-width="0.27"/>
<path d="M390 433.4 399.4 420.9 403.9 413.2 420.3 378.8 431.9 359.7 441.3 347.2 447.4 340.6 450 337 451.9 332.9 455.5 320M390 465.6 399 458.7 403.1 454.9 406.5 450.3 411.8 440.4 428.3 401.3 449 364.2 453.7 357.2 459.3 350.8 465.4 344.9 472.3 340 484.7 333.2" fill="none" stroke="#1a1a1a" stroke-width="0.68"/>
<path d="M390 446.9 397.1 439.8 400.4 436 403.3 431.9 408.1 423 422.4 390.6 434.9 368.6 443.2 355.9 446.2 351.9 456.3 340.6 467.8 325.5" fill="none" stroke="#333" stroke-width="0.60"/>
<path d="M456.7 320.5 459.7 307.9 460.9 305.2 462.8 302.9 475.7 275.3 486.1 260.5 489 257.5 491.2 255.9 495 254.3 502.8 252.5M457.8 321.1 461.7 309 463 306.4 465 304.2 466.6 301.5 477.4 277.3 488.9 259.5 491.6 256.6 494.8 254.7 502.8 252.5M459 321.6 463.6 310.1 465.1 307.6 467.3 305.4 468.9 302.8 474.2 289.4 490.8 259.6 493.1 256.7 495.8 254.7 502.8 252.5M460.2 322.1 465.6 311.2 467.2 308.8 469.5 306.7 471.3 304.1 475.9 291.9 493.9 257.6 495.3 255.9 498.6 253.8 502.8 252.5M461.3 322.6 468.3 311.1 471.7 308 472.7 306.8 474.3 303.9 478.3 292.9 496.1 256.7 498 254.7 502.8 252.5M462.5 323.2 470.4 312.3 473.9 309.3 475 308.1 476.6 305.1 479.9 295.4 495.2 263.6 497.6 256.7 499.6 254.2 502.8 252.5M463.7 323.7 472.4 313.4 476.1 310.5 477.3 309.4 478.2 307.9 482.3 296.4 496.3 266.7 499.4 255.9 501.3 253.5 502.8 252.5M464.8 324.2 474.4 314.6 478.3 311.8 479.6 310.7 480.6 309.2 484.6 297.5 498.1 268.6 499.9 262.5 501.2 254.7 502.8 252.5M466 324.8 476.4 315.7 480.6 313.1 481.8 311.9 482.9 310.5 484.3 307.1 486.3 300.2 500.4 268.9 501.8 264.1 502.8 252.5M467.2 325.3 479.8 316.1 482.8 314.4 484.1 313.2 485.2 311.8 486.6 308.4 488.6 301.2 502.2 270.8 503.7 265.9 504.1 261.3 502.8 252.5M468.3 325.8 481.9 317.3 485 315.6 486.4 314.5 487.5 313.1 489 309.6 491 302.3 504.6 271.2 505.9 266.1 506.2 262.8 504 253.7 502.8 252.5M469.5 326.3 484 318.5 487.2 316.9 488.7 315.8 489.8 314.3 491.3 310.8 493.3 303.3 506.3 273.3 507.9 268 508.3 264.6 508.1 261.5 505.9 255.3 504.4 253.4 502.8 252.5M470.7 326.9 489.4 318.2 490.9 317.1 492.2 315.6 493 313.9 495.6 304.4 508.7 273.7 510.2 268.3 510.5 264.7 510.1 261.6 508.2 256.9 505.5 253.7 502.8 252.5M471.9 327.4 491.7 319.5 493.2 318.4 494.5 316.9 495.4 315.1 498 305.5 510.5 276 512.2 270.4 512.7 266.7 512.5 263.2 511.6 260.3 509.7 256.9 507 254.1 502.8 252.5M473 327.9 493.9 320.7 495.5 319.7 496.8 318.2 497.7 316.4 500.3 306.5 512.9 276.4 514.5 270.7 515 266.9 514.6 263.3 513.5 260.3 511.2 256.9 507.9 254.1 502.8 252.5M474.2 328.4 494.2 322.7 496.1 322 497.8 321 499.1 319.5 500.1 317.6 502.6 307.6 508.6 294.3 516 274.9 516.9 271 517.2 267.1 517.1 265.2 516.7 263.4 515.4 260.4 512.7 257 509.8 254.7 506.9 253.3 502.8 252.5M475.4 329 496.4 324 498.3 323.3 500.1 322.3 501.5 320.8 502.4 318.9 505 308.6 510.3 297.1 517.8 277.3 519.3 271.3 519.5 267.3 519.3 265.4 518.9 263.6 518.2 261.9 516.4 259.2 513.1 256.1 509.8 254.1 506.3 253 502.8 252.5M476.5 329.5 498.6 325.2 500.5 324.6 502.3 323.6 503.8 322 504.8 320.1 507.3 309.7 509 305.7 511.9 299.9 520.2 277.8 521.6 271.6 521.7 267.5 521.5 265.5 521 263.7 520.2 262 518.1 259.2 515.7 257 512 254.7 508.1 253.2 502.8 252.5M477.7 330 500.7 326.5 502.7 325.8 504.6 324.9 506.1 323.3 507.1 321.4 509.6 310.7 511.3 306.7 514.3 300.8 522.6 278.2 523.6 274 524.1 269.8 523.7 265.7 523.1 263.8 522.2 262.1 519.9 259.3 517.3 257 513.1 254.7 510.2 253.6 502.8 252.5M478.9 330.6 500.8 328.1 505 327.1 506.9 326.2 508.4 324.6 509.5 322.6 512 311.8 513.7 307.7 516.8 301.7 524.4 280.8 526 274.4 526.4 270.1 526.3 267.9 525.9 265.9 525.2 263.9 524.2 262.2 521.7 259.3 518.8 257.1 514.1 254.7 511 253.6 502.8 252.5M480 331.1 502.9 329.3 507.2 328.4 509.2 327.4 510.8 325.9 511.8 323.9 513 319.5 514.3 312.8 516.1 308.7 519.2 302.6 526.8 281.3 528.4 274.8 528.7 270.3 528.5 268.1 528.1 266 527.3 264 526.2 262.3 524.9 260.7 521.9 258.1 518.6 256.2 513.5 254.1 510 253.2 502.8 252.5M481.2 331.6 494.1 331.3 505 330.5 509.4 329.7 511.4 328.7 513.1 327.2 514.2 325.1 515.3 320.7 516.7 313.9 518.4 309.6 521.6 303.5 529.3 281.8 530.8 275.1 531 270.6 530.8 268.3 530.2 266.2 529.4 264.2 528.2 262.4 526.8 260.8 523.5 258.2 520 256.2 514.4 254.1 510.6 253.2 502.8 252.5M482.4 332.1 495.8 332.2 507.1 331.7 511.6 330.9 513.7 330 515.4 328.4 516.5 326.4 517.7 321.9 519 315 520.8 310.6 524 304.4 531.7 282.3 533.2 275.5 533.4 273.1 533.3 270.8 533 268.6 532.4 266.3 531.5 264.3 530.2 262.4 528.7 260.8 525.2 258.2 521.4 256.2 515.3 254 511.2 253.2 502.8 252.5M483.5 332.7 497.5 333.1 509.2 332.9 511.5 332.7 513.8 332.2 516 331.3 517.7 329.7 518.9 327.6 520 323 521.3 316 523.1 311.6 526.4 305.3 534.2 282.8 535.6 275.8 535.7 273.5 535.7 271.1 535.3 268.8 534.6 266.5 533.6 264.4 532.2 262.5 530.6 260.9 526.8 258.2 522.7 256.2 516.3 254 511.8 253.1 502.8 252.5M455.5 320 484.7 333.2M455.8 318.2 487.7 333.4M456.1 316.4 490.6 333.7M456.3 314.6 493.6 333.9M456.6 312.8 496.6 334M456.9 311 499.5 334M457.3 309.2 502.5 334M457.7 307.4 505.5 334.1M458.1 305.6 508.4 334.2M458.9 303.9 511.4 334.1M460 302.5 514.4 333.8M461 300.9 517.2 333M461.8 299.3 519.6 331.4M462.5 297.6 521.2 328.9M463.2 295.9 522 326.1M463.9 294.2 522.6 323.2M464.5 292.5 523 320.2M465.2 290.8 523.6 317.3M465.9 289.1 524.6 314.5M466.7 287.4 525.9 311.9M467.5 285.8 527.3 309.2M468.3 284.2 528.7 306.6M469.1 282.5 529.8 303.8M469.9 280.9 530.7 301M470.8 279.3 531.6 298.2M471.6 277.6 532.5 295.3M472.5 276 533.4 292.5M473.4 274.5 534.4 289.7M474.4 272.9 535.4 286.9M475.4 271.4 536.3 284.1M476.4 269.8 537.1 281.2M477.5 268.4 537.7 278.3M478.6 266.9 538 275.4M479.7 265.4 538 272.4M480.9 264 537.6 269.5M482.1 262.6 536.8 266.6M483.3 261.3 535.3 264M484.6 259.9 533.4 261.8M485.9 258.7 531.1 259.9M487.3 257.5 528.6 258.3M488.8 256.5 525.9 257M490.4 255.6 523.2 255.9M492.1 254.9 520.4 254.9M493.8 254.3 517.5 254.1M495.6 253.9 514.6 253.5M497.4 253.5 511.7 253M499.2 253.2 508.7 252.8M501 252.9 505.8 252.6M502.8 252.5 502.8 252.5" fill="none" stroke="#2b2b2b" stroke-width="0.35"/>
<path d="M455.5 320 457.8 306.8 458.8 304 460.6 301.6 472.6 276 481.1 263.8 486.2 258.4 488.6 256.6 491.2 255.2 502.8 252.5M484.7 333.2 499.2 334 511.3 334.1 513.7 333.9 516 333.5 518.3 332.6 520.1 331 521.2 328.9 521.9 326.6 523.7 317.1 525.5 312.6 528.8 306.2 536.6 283.3 537.6 278.6 538.1 273.8 538 271.3 537.6 269 536.8 266.7 535.7 264.5 534.2 262.6 532.5 261 528.5 258.3 524.1 256.2 517.2 254 512.4 253.1 502.8 252.5" fill="none" stroke="#1a1a1a" stroke-width="0.68"/>
<path d="M490.3 256.1 479.4 267.5 473.9 275.7 469.4 284.5 458.4 324.4M491.8 255.6 482.1 265.7 476.3 273.8 471.6 282.6 468.9 290.1 459.9 324.9M493.4 255.2 483.6 265.4 477.8 273.6 473 282.5 470.9 288.2 461.3 325.3M495 254.7 485.1 265.1 479.2 273.4 474.4 282.5 472.3 288.2 467 312.1 462.8 325.8M496.5 254.3 486.5 264.7 481.7 271.5 476.7 280.5 474.3 286.3 469.3 310.5 464.2 326.2M498.1 253.8 488 264.4 483.1 271.2 478.1 280.4 475.8 286.2 473.5 296.4 472 306.7 465.7 326.7M499.7 253.4 489.4 264.1 484.6 271 479.5 280.3 477.2 286.2 475.1 296.6 473.7 307 467.1 327.1M501.2 252.9 490.9 263.8 486 270.8 480.9 280.2 479.3 284.2 476.9 294.6 475.4 307.3 468.6 327.6M488.7 256.5 502.8 252.5M487.5 257.7 501.5 253.8M486.3 258.9 500.2 255.2M485.1 260.1 498.8 256.5M483.9 261.3 497.5 257.8M482.8 262.5 496.2 259.2M481.6 263.7 494.9 260.6M480.4 265 493.7 261.9M479.3 266.2 492.5 263.4M478.2 267.5 491.3 264.8M477.2 268.9 490.2 266.3M476.2 270.2 489.1 267.9M475.2 271.6 488.1 269.5M474.2 273 487.1 271.1M473.3 274.4 486.2 272.7M472.5 275.9 485.2 274.3M471.6 277.3 484.4 276M470.8 278.8 483.5 277.6M470 280.3 482.7 279.3M469.2 281.8 481.9 281M468.5 283.4 481.2 282.8M467.8 284.9 480.5 284.5M467.2 286.5 480 286.3M466.6 288.1 479.6 288.1M466 289.6 479.2 290M465.5 291.3 478.9 291.8M465 292.9 478.6 293.7M464.5 294.5 478.4 295.5M464.1 296.1 478.2 297.4M463.6 297.8 478 299.3M463.2 299.4 477.9 301.1M462.8 301 477.7 303M462.3 302.7 477.5 304.9M461.9 304.3 477.2 306.7M461.5 305.9 476.9 308.6M461 307.6 476.5 310.4M460.6 309.2 476 312.2M460.2 310.8 475.4 314M459.8 312.5 474.8 315.8M459.4 314.1 474.1 317.5M459 315.8 473.5 319.3M458.6 317.4 472.8 321M458.2 319.1 472.1 322.8M457.8 320.7 471.4 324.5M457.4 322.4 470.7 326.3M457 324 470 328" fill="none" stroke="#2b2b2b" stroke-width="0.35"/>
<path d="M488.7 256.5 478 267.8 472.5 275.9 468 284.6 457 324M502.8 252.5 492.4 263.5 487.4 270.6 482.3 280.1 480.7 284.1 479.5 288.3 478.2 296.8 477.1 307.6 475.4 313.9 470 328" fill="none" stroke="#1a1a1a" stroke-width="0.64"/>
<path d="M486.5 333.1 489.2 337.4 490.1 339.8 491.2 347.5 492.8 406.8M488.3 333.1 490.7 337.4 491.5 339.8 493.9 386.2 493.9 406.9M490.1 333 492.3 337.4 493 339.8 495 407M491.9 333 493.9 337.4 494.5 339.8 496.1 407.1M493.7 332.9 495.5 337.4 496 339.9 497.2 407.3M495.5 332.9 497 337.4 497.5 339.9 498.3 407.4M497.3 332.8 498.6 337.4 499.1 342.4 499.4 407.5M499.1 332.8 500.2 337.4 500.5 407.6M500.9 332.7 501.7 337.4 501.6 407.7M502.7 332.7 503.3 337.4 502.6 407.8M504.5 332.6 504.9 337.4 503.7 407.9M506.3 332.6 506.4 339.9 504.8 408M508.1 332.5 507.8 339.9 505.9 408.1M509.9 332.5 507.1 373.9 507 408.2M511.7 332.4 509.1 355.5 508.1 408.4M513.5 332.4 510.7 350.3 509.2 408.5M515.3 332.3 512.4 347.7 510.4 376.7 510.3 408.6M517.1 332.3 514.1 345.1 511.7 371.5 511.4 408.7M484.7 333.2 518.9 332.2M487 336.4 517.8 336.1M488.6 340 516.7 340M489.4 343.8 515.7 344M489.9 347.7 515 348M490.3 351.6 514.4 352M490.6 355.6 514 356M490.9 359.5 513.6 360.1M491.1 363.4 513.3 364.1M491.3 367.3 513 368.2M491.4 371.3 512.8 372.2M491.6 375.2 512.7 376.3M491.7 379.1 512.6 380.4M491.7 383.1 512.5 384.4M491.8 387 512.5 388.5M491.8 391 512.5 392.5M491.8 394.9 512.5 396.6M491.7 398.8 512.5 400.7M491.7 402.8 512.5 404.7M491.7 406.7 512.5 408.8" fill="none" stroke="#2b2b2b" stroke-width="0.49"/>
<path d="M484.7 333.2 487.6 337.5 488.6 339.8 489.6 344.9 491.8 386.1 491.7 406.7M518.9 332.2 515.5 345.1 512.8 371.5 512.5 408.8" fill="none" stroke="#1a1a1a" stroke-width="0.68"/>
<clipPath id="c1"><path d="M491.7 406.7 495.5 410.8 497.7 412.4 500.3 413.4 503 413.8 505.7 413.4 508.3 412.4 510.5 410.7 512.5 408.8Z" clip-rule="evenodd"/></clipPath><path clip-path="url(#c1)" d="M513.9 396.2 516.2 422.1M512.7 396.3 515 422.2M511.5 396.4 513.8 422.3M510.3 396.5 512.6 422.4M509.1 396.6 511.4 422.5M507.9 396.7 510.2 422.6M506.7 396.8 509 422.7M505.5 396.9 507.8 422.8M504.3 397 506.6 422.9M503.1 397.1 505.4 423M502 397.2 504.2 423.1M500.8 397.3 503 423.2M499.6 397.4 501.8 423.3M498.4 397.5 500.6 423.4M497.2 397.6 499.4 423.5M496 397.7 498.2 423.6M494.8 397.9 497 423.7M493.6 398 495.9 423.8M492.4 398.1 494.7 423.9M491.2 398.2 493.5 424M490 398.3 492.3 424.2M488.8 398.4 491.1 424.3" fill="none" stroke="#2b2b2b" stroke-width="0.60"/>
<path d="M491.7 406.7 495.5 410.8 497.7 412.4 500.3 413.4 503 413.8 505.7 413.4 508.3 412.4 510.5 410.7 512.5 408.8" fill="none" stroke="#1a1a1a" stroke-width="0.90"/>
<path d="M261.3 399.2 271.9 393.1 275.6 391.6 277.6 391.1 281.6 390.7 327.5 397.5 339.6 398 347.7 397.3 353.6 396 359.3 393.8 362.8 391.8 373.6 382.6M260.6 402.3 271.3 396.3 275.1 394.8 279.2 394 283.2 394 327.7 399.9 339.9 400.2 348.1 399.4 354.1 398 359.8 395.8 363.4 393.8 374.4 384.6M259.9 405.5 270.8 399.5 274.7 398 278.8 397.2 282.9 397.1 327.8 402.3 340.2 402.4 348.4 401.5 354.5 400 360.3 397.8 363.9 395.8 375.1 386.5M259.2 408.6 270.3 402.7 274.2 401.2 278.4 400.4 284.6 400.4 328 404.6 340.5 404.6 348.8 403.6 354.9 402.1 360.8 399.8 364.5 397.8 375.8 388.4M258.5 411.8 269.8 405.9 273.8 404.4 278 403.6 284.3 403.5 330.3 407.1 340.8 406.8 349.2 405.7 355.4 404.1 361.3 401.9 365 399.8 376.6 390.4M257.8 414.9 267.3 410 273.3 407.7 277.6 406.8 284 406.7 330.5 409.4 341.1 409 349.6 407.8 355.8 406.2 361.9 403.9 367.4 400.6 377.3 392.3M257.2 418.1 266.8 413.2 272.9 410.9 277.2 410 285.8 409.9 330.6 411.7 343.6 411 352.1 409.4 358.3 407.5 362.4 405.9 368 402.6 378 394.2M256.5 421.2 266.3 416.3 272.4 414.1 276.7 413.2 333 414 343.9 413.1 352.5 411.5 358.8 409.6 364.8 406.9 370.4 403.3 378.8 396.2M255.8 424.4 265.7 419.5 272 417.3 276.3 416.4 333.2 416.3 346.4 415 355.1 413 361.4 410.8 365.4 408.9 371 405.2 379.5 398.1M255.1 427.5 265.2 422.7 271.5 420.5 275.9 419.6 335.7 418.5 348.9 416.7 357.6 414.4 363.9 411.9 369.8 408.5 380.2 400M254.4 430.7 264.6 425.9 271.1 423.7 275.5 422.8 335.9 420.7 349.3 418.8 358.1 416.4 364.4 413.9 370.3 410.5 381 402M253.7 433.8 264.1 429.1 270.6 426.9 275.1 426 336.1 423 349.7 420.9 358.5 418.5 364.9 415.9 370.9 412.5 381.7 403.9M253 437 263.6 432.3 270.2 430.2 277 429 336.4 425.3 350 423.1 359 420.5 365.4 417.9 371.5 414.5 382.4 405.9M252.3 440.2 263 435.5 269.7 433.4 276.7 432.1 336.6 427.6 350.4 425.2 359.4 422.6 366 419.9 372.1 416.5 383.2 407.8M251.6 443.3 262.5 438.6 269.3 436.6 276.3 435.3 336.8 429.9 350.8 427.3 359.9 424.6 366.5 421.9 372.7 418.5 383.9 409.7M250.9 446.5 261.9 441.8 271.2 439.3 339.4 431.8 353.4 428.8 362.6 425.8 369.1 422.9 375.3 419.2 384.7 411.7M250.2 449.6 259.1 445.8 268.4 443 342 433.6 353.8 430.9 363 427.9 369.7 424.9 375.9 421.2 385.4 413.6M249.5 452.8 258.6 449 267.9 446.2 342.3 435.8 354.2 433 363.5 429.9 370.2 426.9 376.5 423.2 386.1 415.5M248.8 455.9 258 452.2 267.5 449.4 342.6 438 354.6 435.1 366.2 431 372.9 427.7 377.1 425.1 386.9 417.5M248.2 459.1 257.4 455.3 267 452.7 342.9 440.3 355 437.2 366.7 433 373.5 429.7 377.8 427.1 387.6 419.4M247.5 462.2 256.8 458.5 269 455.4 343.1 442.5 357.8 438.6 369.5 434 376.2 430.5 382.4 426.1 388.3 421.3M246.8 465.4 256.3 461.7 268.6 458.6 345.9 444.1 358.2 440.7 370 436 376.8 432.5 383.1 428.1 389.1 423.3M246.1 468.5 255.7 464.9 348.7 445.7 361 441.9 372.9 436.9 379.6 433.1 389.8 425.2M245.4 471.7 255.1 468 349 447.8 361.4 444 373.4 438.9 380.2 435.1 390.5 427.1M244.7 474.8 254.6 471.2 349.3 450 361.9 446 374 440.9 380.8 437.1 391.3 429.1M262 396 244 478M263.9 394.9 246.8 476.9M265.8 393.7 249.5 475.9M267.7 392.5 252.3 474.9M269.6 391.4 255.1 474.1M271.6 390.3 258 473.3M273.6 389.4 260.9 472.7M275.7 388.5 263.8 472.1M277.8 387.9 266.7 471.5M280 387.6 269.6 470.9M282.2 387.5 272.5 470.3M284.4 387.7 275.4 469.7M286.7 388 278.3 469.1M288.9 388.4 281.1 468.5M291 388.8 284 467.8M293.2 389.2 286.9 467.2M295.4 389.6 289.8 466.5M297.6 390 292.7 465.8M299.8 390.4 295.5 465.2M302 390.9 298.4 464.5M304.2 391.4 301.3 463.8M306.3 391.9 304.2 463.2M308.5 392.3 307.1 462.5M310.7 392.8 309.9 461.8M312.9 393.2 312.8 461.1M315.1 393.6 315.7 460.5M317.3 393.9 318.6 459.8M319.5 394.2 321.5 459.2M321.7 394.5 324.3 458.5M323.9 394.8 327.2 457.8M326.1 395 330.1 457.2M328.3 395.3 333 456.5M330.6 395.5 335.8 455.8M332.8 395.6 338.7 455.1M335 395.8 341.6 454.3M337.2 395.8 344.4 453.6M339.5 395.8 347.3 452.8M341.7 395.7 350.1 452.1M343.9 395.6 353 451.2M346.1 395.3 355.8 450.4M348.3 395 358.6 449.4M350.5 394.6 361.4 448.4M352.7 394 364.2 447.4M354.8 393.4 366.9 446.3M356.9 392.6 369.6 445.1M359 391.7 372.3 443.9M360.9 390.6 375 442.7M362.7 389.4 377.6 441.3M364.5 388 380.2 439.9M366.2 386.6 382.7 438.2M367.9 385.2 385.1 436.5M369.6 383.7 387.4 434.7M371.2 382.2 389.7 432.8M372.9 380.7 392 431" fill="none" stroke="#2b2b2b" stroke-width="0.31"/>
<path d="M197.6 469.4 211.9 440.7 216.7 434.2 221.3 429.6 225.6 427 232.1 424M199.2 470.2 210.7 449.5 214.8 440.8 219.5 434.2 222.6 430.8 226.5 427.9 232.2 424.7M200.9 471 205.7 465.1 218.5 439.5 223 433 226.1 429.9 232.4 425.4M202.5 471.8 207.2 467.4 209.7 464 222.1 438.2 225.3 433.1 232.5 426.1M204.1 472.6 209.5 468.5 211.3 466.4 217.7 454.1 225.3 436.7 229.1 430.8 232.6 426.8M205.8 473.4 211.8 469.6 213.8 467.7 216.8 462.7 228.6 434.2 232.7 427.5M207.4 474.2 214.1 470.7 216.2 468.9 218.6 465.4 232.9 428.2M209 475.1 216.4 471.8 218.7 470.1 221.1 466.8 225.7 455.7 233 428.9M210.6 475.9 217.2 473.6 220 472.2 222 470.4 224.2 466.9 228 457.2 232.5 436.1 233.1 429.5M212.2 476.7 219.4 474.7 222.4 473.4 224.5 471.6 226.7 468.3 230.3 458.7 233 444.5 233.2 430.2M213.9 477.5 221.5 475.7 224.8 474.5 227 472.9 228.5 470.9 232.1 461.8 234.3 450.8 234.7 439.6 233.4 430.9M215.5 478.3 223.7 476.8 227.2 475.7 228.5 475 230.3 473.2 232.1 469.9 234.8 461.8 236.3 452.2 236.1 442.2 233.5 431.6M217.1 479.1 225.9 477.9 229.6 476.9 230.9 476.2 232.8 474.6 234.5 471.4 237.1 463.3 238.2 455.3 237.9 446.7 237.1 441.8 233.6 432.3M218.8 479.9 228.1 478.9 232 478.1 233.4 477.4 235.3 475.9 236.5 473.9 239.1 466.3 240.1 460 240.1 453.2 239.2 446.2 237.7 441.3 233.8 433M220.4 480.7 230.2 480 234.4 479.2 235.8 478.7 237.8 477.2 239 475.3 241.4 467.9 242.3 461.5 242 454.6 240.7 447.4 239.6 444 233.9 433.7M196 468.6 222 481.5M196.4 467.6 224.3 481.4M196.8 466.3 227.5 481.3M197.4 464.7 231.2 481.1M198 462.9 234.7 480.8M198.8 461 237.5 480.1M199.8 459 239.4 479.2M200.9 456.7 240.6 478.1M202.1 454.3 241.4 476.7M203.3 451.8 242 475.2M204.5 449.4 242.6 473.4M205.7 447.2 243.2 471.5M206.7 444.9 243.7 469.4M207.8 442.8 244.1 467.1M208.9 440.6 244.4 464.6M210.2 438.6 244.4 462.1M211.6 436.6 244.3 459.6M213.2 434.7 244 456.9M214.9 432.8 243.6 454.1M216.7 431.1 242.9 451.3M218.6 429.5 242.1 448.6M220.6 428 241.2 446M223 426.8 239.8 443.3M225.6 425.6 238.2 440.6M228.2 424.7 236.5 438.1M230.4 423.9 235.1 436M232 423.3 234 434.4" fill="none" stroke="#2b2b2b" stroke-width="0.45"/>
<path d="M196 468.6 208.9 440.6 212.6 435.3 217.3 430.5 221.4 427.6 232 423.3M222 481.5 232.4 481 236.7 480.4 238.3 479.9 240.3 478.5 241.4 476.7 243.7 469.4 244.4 463 243.9 456 242.1 448.6 240.8 445.1 234 434.4" fill="none" stroke="#1a1a1a" stroke-width="0.80"/>
<clipPath id="c2"><path d="M196 468.6 204 476.7 216 480.7 230 481.7 238 480 222 481.5 210 476 199 462Z" clip-rule="evenodd"/></clipPath><path clip-path="url(#c2)" d="M207.8 437.4 251.4 462.6M206.8 439.2 250.4 464.4M205.8 440.9 249.4 466.1M204.8 442.6 248.4 467.8M203.8 444.4 247.4 469.6M202.8 446.1 246.4 471.3M201.8 447.8 245.4 473M200.8 449.6 244.4 474.8M199.8 451.3 243.4 476.5M198.8 453 242.4 478.2M197.8 454.8 241.4 479.9M196.8 456.5 240.4 481.7M195.8 458.2 239.4 483.4M194.8 459.9 238.4 485.1M193.8 461.7 237.4 486.9M192.8 463.4 236.4 488.6M191.8 465.1 235.4 490.3M190.8 466.9 234.4 492.1M189.8 468.6 233.4 493.8M188.8 470.3 232.4 495.5M187.8 472.1 231.4 497.3M186.8 473.8 230.4 499M185.8 475.5 229.4 500.7M184.8 477.3 228.4 502.5M183.8 479 227.4 504.2M182.8 480.7 226.4 505.9M181.5 475 213.9 436.4M183 476.2 215.4 437.6M184.6 477.5 217 438.9M186.1 478.8 218.5 440.2M187.6 480.1 220 441.5M189.2 481.4 221.6 442.8M190.7 482.7 223.1 444.1M192.2 484 224.6 445.4M193.8 485.2 226.2 446.6M195.3 486.5 227.7 447.9M196.8 487.8 229.2 449.2M198.4 489.1 230.7 450.5M199.9 490.4 232.3 451.8M201.4 491.7 233.8 453.1M203 493 235.3 454.4M204.5 494.2 236.9 455.6M206 495.5 238.4 456.9M207.5 496.8 239.9 458.2M209.1 498.1 241.5 459.5M210.6 499.4 243 460.8M212.1 500.7 244.5 462.1M213.7 502 246.1 463.4M215.2 503.2 247.6 464.6M216.7 504.5 249.1 465.9M218.3 505.8 250.7 467.2M219.8 507.1 252.2 468.5" fill="none" stroke="#2b2b2b" stroke-width="0.38"/>
<path d="M269.6 393.2 274.1 391 277.6 390 282 390 299.2 392.4 314.7 395.6 329.6 397.4 337.2 397.9 343.9 397.6 349.9 396.9 355.3 395.5 360.5 393.3 363.2 391.6 373.9 382.8M269.2 395.4 274.2 393.1 277.9 392.2 282.3 392.1 299.1 394.4 314.6 397.6 329.6 399.5 337.3 399.9 344 399.7 350.1 398.9 355.7 397.6 358.4 396.6 361 395.4 363.8 393.8 374.9 384.8M268.8 397.6 274.3 395.3 278.2 394.3 282.7 394.2 299 396.4 314.5 399.7 329.6 401.5 337.3 401.9 344.1 401.7 350.3 401 356 399.7 358.8 398.8 361.5 397.6 364.3 395.9 376 386.9M268.4 399.8 274.4 397.5 278.6 396.5 283 396.3 296.1 398 314.4 401.7 329.5 403.5 337.3 404 344.3 403.8 350.5 403.1 356.4 401.8 359.2 400.9 362 399.7 364.9 398 377 388.9M270 391 268 402M270.5 390.7 268.9 401.7M271.2 390.3 270 401.3M271.9 389.9 271.2 400.8M272.7 389.4 272.6 400.3M273.7 388.9 274.2 399.8M274.8 388.5 275.8 399.3M276.1 388.1 277.5 398.9M277.5 387.9 279.2 398.6M279 387.8 280.8 398.5M280.8 387.8 282.5 398.5M282.8 388 284.3 398.5M284.9 388.2 286.1 398.6M287.1 388.4 288 398.8M289.4 388.7 289.9 399.1M291.7 389.1 291.9 399.4M294 389.4 293.9 399.7M296.3 389.8 296 400M298.6 390.2 298.1 400.4M300.8 390.7 300.3 400.8M303.1 391.1 302.6 401.3M305.4 391.7 304.9 401.8M307.8 392.2 307.2 402.4M310.2 392.7 309.6 402.9M312.7 393.2 312.1 403.4M315.2 393.6 314.7 403.8M317.8 394 317.4 404.2M320.6 394.3 320.2 404.5M323.5 394.7 323.2 404.9M326.4 395.1 326.2 405.2M329.4 395.4 329.3 405.5M332.4 395.6 332.3 405.8M335.2 395.8 335.3 405.9M338 395.8 338.2 406M340.6 395.8 341 406M343 395.6 343.6 405.9M345.4 395.4 346.1 405.7M347.6 395.1 348.5 405.5M349.8 394.7 350.9 405.2M351.9 394.2 353.2 404.8M353.9 393.7 355.5 404.3M355.9 393 357.7 403.6M357.8 392.2 359.9 402.9M359.8 391.3 362.1 402M361.7 390.1 364.4 400.8M363.7 388.7 366.7 399.3M365.6 387.2 369 397.8M367.4 385.6 371.3 396.1M369.1 384.1 373.3 394.6M370.6 382.7 375.2 393.1M371.9 381.6 376.7 391.9M372.9 380.7 378 391" fill="none" stroke="#2b2b2b" stroke-width="0.33"/>
<path d="M268 402 274.5 399.6 278.9 398.6 283.3 398.5 296 400 314.3 403.8 329.5 405.6 337.4 406 347.6 405.6 353.8 404.7 359.6 403 362.5 401.8 365.5 400.2 378 391" fill="none" stroke="#1a1a1a" stroke-width="0.64"/>
<path d="M235.8 419.6 236.2 427.7 237.1 432.4 239.1 436.8 241.5 441.3 242.5 443.6 243.8 448.6 245 456.4 245.1 461.3 244.7 465.9 243.3 472 241.9 475.3 238.8 479.7M239.5 416.2 239.5 424.9 240.1 430 244.2 442.1 245.2 447.3 245.8 455.6 245.7 460.7 244.7 467.7 243.1 473.4 239.5 479.5M243.2 412.9 242.9 425 243.5 430.2 245.9 440.6 246.6 449 246.6 457.5 245.6 464.9 244.1 471.3 242.8 474.7 240.3 479.2M247 409.5 246 422.4 246.2 427.9 247.6 439 247.7 450.9 247 459.4 244.5 471 241 479M250.8 406.1 249.2 419.9 249 428.6 249.3 437.5 248.4 453.1 247.2 461.4 244.4 472.5 241.8 478.8M254.5 402.8 251.9 420.5 250.1 445.7 248.3 458.1 244.2 473.8 242.5 478.5M258.2 399.4 249.5 454.5 243.2 478.2M232 423 262 396M232.1 424.1 261.6 397.9M232.3 425.6 261.1 400.4M232.5 427.4 260.4 403.3M232.7 429.3 259.8 406.6M233.1 431.3 259.1 409.9M233.6 433.3 258.4 413.1M234.3 435.1 257.8 416.2M235.3 436.9 257.2 419.2M236.5 438.7 256.5 422.2M237.8 440.5 255.9 425.2M239 442.3 255.3 428.3M240.2 444.2 254.7 431.3M241.2 446.1 254.1 434.4M242 448.1 253.5 437.5M242.7 450.3 252.9 440.6M243.2 452.4 252.3 443.7M243.7 454.7 251.7 446.9M244 456.8 251.1 449.9M244.3 459 250.5 452.8M244.4 461 249.9 455.5M244.4 463 249.2 458.1M244.3 465 248.6 460.6M244.1 466.9 247.9 463M243.8 468.7 247.3 465.3M243.4 470.5 246.7 467.4M243 472.1 246.2 469.3M242.4 473.6 245.7 471M241.7 475 245.3 472.6M240.9 476.2 245 474M240 477.4 244.7 475.3M239.2 478.5 244.4 476.4M238.5 479.3 244.2 477.3M238 480 244 478" fill="none" stroke="#2b2b2b" stroke-width="0.36"/>
<path d="M232 423 232.9 430.4 233.4 432.7 234.2 434.8 236.6 438.8 239.5 443 240.8 445.2 242.5 449.8 243.7 454.8 244.3 459.7 244.4 464.2 243.8 468.6 242.9 472.4 242.3 474 238 480" fill="none" stroke="#1a1a1a" stroke-width="1.12"/>
<path d="M240.1 482.2 254.4 477.5 310.9 465.2M239.9 484.8 256.7 480.2 311.1 468.8M239.6 487.3 311.2 472.4M239.3 489.8 311.3 476M239.1 492.4 286.6 485 311.5 479.6M238.8 494.9 276.5 490.4 311.6 483.2M238.5 497.4 256.2 496.6 311.7 486.8M238.3 500 253.6 500.1 284.1 496.1 311.9 490.4M240.4 479.7 238 502.5M243.3 478.5 241.2 502.7M246.3 477.3 244.5 503M249.2 476.1 247.7 503.2M252.2 475.1 251 503.3M255.2 474.1 254.2 503.3M258.2 473.2 257.5 503.1M261.3 472.5 260.7 502.8M264.4 471.9 264 502.5M267.5 471.2 267.2 502.1M270.6 470.6 270.4 501.7M273.7 470 273.7 501.3M276.9 469.4 276.9 500.8M279.9 468.7 280.1 500.3M283 468.1 283.3 499.8M286.1 467.3 286.5 499.2M289.2 466.6 289.7 498.6M292.3 465.9 292.9 498M295.4 465.2 296.1 497.3M298.5 464.5 299.3 496.7M301.6 463.8 302.4 496M304.6 463 305.6 495.3M307.7 462.3 308.8 494.7M310.8 461.6 312 494" fill="none" stroke="#2b2b2b" stroke-width="0.23"/>
<path d="M413.8 304.8 414.6 288.2 416.2 279.7 420.3 268 427.4 253.8 438.7 237.1 455.4 218.5 466.2 209 474.2 203.1 482.2 198.5 492 194.4 499.3 192.4 504.2 191.8 508.4 192.3 512.1 193.6 515.2 195.9 518.1 199.3 520.4 203.3 521.8 207.2 522.4 211.3 522.1 215.6 520.9 220.1 517.3 227.9 500.5 252.3M416.4 303.9 417.3 288.4 419.2 278.4 422.5 268.7 429.5 254.4 440.6 238 456.9 219.6 469.2 208.7 476.8 203.2 486.7 198 495.9 194.5 501.1 193.4 505.7 193.1 509.5 193.8 512.9 195.4 514.9 197 517.5 200.3 519.6 204.2 520.8 208 521.3 212 520.9 216.2 519.5 220.8 514.7 230.3 498.1 253.2M419.1 302.9 420.3 286.6 422.6 275.2 425.4 267.3 431.5 255.1 442.4 238.8 460 219.1 471.9 208.5 479.4 203.4 489 198.4 496.2 195.8 501.2 194.6 505.6 194.4 509.4 195.1 512.6 196.6 514.5 198.2 517 201.3 518.9 205.1 519.9 208.8 520.2 212.7 519.7 216.9 518.1 221.5 513 231.2 495.8 254M421.7 301.9 423.8 281.4 425.4 273.9 429.4 263.8 435.7 252 445.5 238.1 461.4 220.2 472.8 209.9 479.9 204.8 489.4 199.7 496.4 197 501.3 195.9 505.6 195.6 509.3 196.3 512.4 197.8 515 200.2 517.1 203.5 518.5 207.2 519.1 210.9 519 214.8 518 219.1 514.2 227.1 507.8 236.9 493.4 254.8M424.4 301 426.8 278.3 428.2 272.7 432.4 262.4 438.8 250.8 448.6 237.4 464.3 219.9 475.3 209.8 482.4 205 491.6 200.2 498.3 197.8 502.9 196.9 506.8 197 510.2 198 513 199.7 515.2 202.3 516.9 205.7 518.1 210.4 518.1 214.1 517.2 218.2 514.5 224.5 508.4 234.5 491.1 255.7M411.1 305.8 427 300M411.2 304.2 427.1 299M411.2 302 427.2 297.8M411.3 299.4 427.4 296.3M411.3 296.6 427.5 294.6M411.5 293.6 427.7 292.8M411.6 290.6 427.9 291M411.9 287.9 428.1 289.2M412.3 285.4 428.3 287.5M412.7 283.2 428.5 285.8M413.2 281 428.7 284.1M413.8 279 428.8 282.3M414.4 277 429 280.5M415.1 275 429.2 278.7M415.8 273.1 429.5 276.9M416.6 271.1 429.9 275M417.4 269.1 430.5 273.1M418.3 267 431.1 271.1M419.2 264.9 431.9 269M420.2 262.9 432.8 267M421.2 260.8 433.7 264.8M422.3 258.7 434.7 262.7M423.4 256.7 435.7 260.7M424.5 254.7 436.7 258.7M425.7 252.7 437.7 256.7M426.9 250.7 438.8 254.8M428.1 248.7 439.9 253M429.4 246.7 441 251.2M430.7 244.8 442.2 249.4M432.1 242.9 443.4 247.6M433.4 241 444.6 245.9M434.7 239.2 445.8 244.2M436 237.5 447.1 242.5M437.2 235.9 448.3 240.9M438.4 234.3 449.6 239.3M439.7 232.8 450.9 237.8M440.9 231.3 452.2 236.3M442.2 229.9 453.5 234.8M443.5 228.4 454.8 233.3M444.9 226.8 456.1 231.8M446.4 225.2 457.3 230.3M447.9 223.6 458.6 228.9M449.5 221.9 459.8 227.5M451.1 220.2 461 226.1M452.8 218.5 462.3 224.7M454.5 216.8 463.6 223.3M456.3 215.2 464.9 221.9M458.1 213.5 466.2 220.5M460 211.9 467.6 219.1M462 210.3 469.1 217.6M464 208.6 470.6 216.2M466.1 207 472.1 214.7M468.2 205.5 473.6 213.3M470.3 203.9 475.2 211.9M472.4 202.5 476.8 210.6M474.5 201.2 478.5 209.3M476.5 200 480.2 208.1M478.6 198.8 482 206.9M480.7 197.7 483.8 205.8M482.8 196.7 485.7 204.7M484.8 195.8 487.5 203.6M486.9 194.9 489.3 202.7M488.9 194.2 491.1 201.8M490.8 193.5 492.8 201.1M492.7 192.8 494.5 200.4M494.6 192.2 496.1 199.8M496.5 191.7 497.7 199.3M498.4 191.3 499.3 198.9M500.2 191 500.9 198.5M501.9 190.7 502.3 198.3M503.5 190.6 503.7 198.1M505.1 190.6 505 198.1M506.6 190.7 506.3 198.2M508 190.9 507.5 198.4M509.3 191.3 508.6 198.7M510.6 191.7 509.6 199M511.9 192.2 510.6 199.5M513 192.8 511.5 200M514.2 193.6 512.4 200.7M515.3 194.4 513.1 201.4M516.3 195.4 513.9 202.2M517.4 196.6 514.5 203.1M518.4 197.8 515.1 204.1M519.3 199.2 515.7 205.2M520.2 200.6 516.1 206.3M520.9 202 516.5 207.4M521.6 203.4 516.8 208.6M522.1 204.7 517 209.7M522.6 206.1 517.1 210.9M522.9 207.5 517.2 212.1M523.2 208.9 517.1 213.3M523.4 210.3 517 214.6M523.5 211.7 516.8 215.9M523.5 213.2 516.5 217.2M523.4 214.6 516.1 218.6M523.2 216.1 515.6 220.1M522.8 217.6 514.9 221.7M522.4 219.1 514.1 223.3M521.9 220.7 513.2 225M521.3 222.2 512.3 226.7M520.6 223.8 511.2 228.4M519.9 225.3 510.2 230.2M519.1 226.9 509.1 231.9M518.3 228.4 508 233.5M517.4 230 506.8 235.2M516.4 231.5 505.5 236.9M515.3 233 504.2 238.6M514.2 234.6 502.9 240.3M513.1 236.1 501.6 242M512 237.7 500.3 243.6M510.9 239.2 499 245.2M509.9 240.8 497.6 246.8M508.7 242.5 496.2 248.4M507.5 244.3 494.7 250.1M506.4 246.1 493.2 251.7M505.3 247.8 491.8 253.2M504.3 249.3 490.6 254.5M503.4 250.5 489.5 255.6M502.8 251.5 488.7 256.5" fill="none" stroke="#2b2b2b" stroke-width="0.32"/>
<path d="M411.1 305.8 411.6 290.8 412.2 285.5 414.3 277.2 420 263.2 427.8 249.2 439.3 233.3 453.9 217.5 465.2 207.7 473.5 201.8 481.7 197.2 491.7 193.2 499.1 191.1 504.2 190.6 508.5 191 512.3 192.4 515.6 194.7 518.7 198.2 521.1 202.4 522.7 206.4 523.4 210.6 523.3 214.9 522.3 219.4 519 227.1 502.8 251.5M427 300 429.5 277.1 431 271.4 436.5 259.1 444.3 246.3 464.3 222.4 474.5 212.5 481.1 207.5 490.2 202.2 496.9 199.6 502.9 198.2 506.8 198.2 510 199.2 512.6 200.9 514.7 203.4 516.2 206.6 517.1 211.2 517 214.9 516 218.9 513.1 225.3 506.6 235.4 488.7 256.5" fill="none" stroke="#1a1a1a" stroke-width="0.72"/>
<g transform="translate(452.5,226.500) rotate(-47)"><rect x="-7.500" y="-5.500" width="15" height="11" fill="#d0d0d0" stroke="#111" stroke-width="1.400"/><path d="M-2.500 -5.500V5.500M2.500 -5.500V5.500" stroke="#111" stroke-width="1"/></g>
<path d="M202.4 400.5 204.2 396.6 208.1 392.3 212.3 388.8 217.5 385.9 223.4 383.6 226.6 383 229 383.3 230.9 384.2 233.9 386.6 245.3 402.3M202.5 400.6 204.5 396.9 209.5 391.7 212.2 389.6 217.2 387.1 222.9 385.2 226 384.9 228.4 385.3 231.5 387 233.5 388.7 244.5 403.5M202.6 400.7 204.8 397.1 209.5 392.4 212.1 390.4 216.8 388.3 222.3 386.9 225.4 386.7 227.9 387.3 232.1 390 243.8 404.8M202.7 400.8 205.8 396.5 210.7 392.1 213.3 390.6 218.2 389 221.8 388.5 224.8 388.5 227.3 389.3 231.7 392.1 243.1 406.1M202.8 400.9 206 396.9 210.7 392.8 213.1 391.5 217.8 390.4 221.2 390.1 224.2 390.4 226.8 391.3 231.3 394.3 242.4 407.4M203 401 209.6 394.2 211.7 392.9 214.3 392.1 219.1 391.7 222.2 391.9 225 392.7 229.8 395.6 232.8 398.3 241.6 408.6M203.1 401.1 209.7 394.8 211.6 393.7 214 393.1 218.6 393.1 221.7 393.6 224.4 394.6 230.4 398.6 240.9 409.9M203.2 401.2 209.7 395.4 211.5 394.5 213.7 394.2 218.1 394.6 222.4 395.9 227.7 399 232 402.5 240.2 411.2M203.3 401.3 209.8 396 211.3 395.3 213.4 395.2 217.6 396.1 221.9 397.7 229.6 402.9 239.5 412.5M203.4 401.4 210.5 396.3 212.1 396.1 215.7 397 221.3 399.6 230.2 405.9 238.7 413.7M202.3 400.4 203.5 401.5M202.5 399.8 204 401.1M202.8 398.9 204.8 400.6M203.2 397.9 205.7 400M203.8 396.8 206.6 399.4M204.5 395.6 207.5 398.8M205.5 394.4 208.2 398.4M206.7 393 208.9 397.9M208.2 391.6 209.4 397.5M209.9 390.1 210 397.2M211.6 388.7 210.7 397M213.5 387.3 211.6 397M215.5 386.1 212.7 397.2M217.7 384.8 214 397.7M220 383.7 215.4 398.4M222.4 382.6 216.9 399.2M224.6 381.8 218.5 400.1M226.5 381.3 220 401M228 381.2 221.6 402M229.3 381.3 223.2 403.1M230.4 381.6 224.9 404.2M231.5 382.2 226.4 405.4M232.5 382.9 227.9 406.5M233.7 383.9 229.2 407.5M234.9 385.1 230.3 408.5M236.1 386.5 231.2 409.4M237.3 388.2 232.1 410.2M238.5 389.8 232.9 411M239.6 391.5 233.7 411.8M240.8 393.1 234.6 412.5M242 394.9 235.4 413.1M243.2 396.7 236.2 413.7M244.3 398.4 236.9 414.2M245.3 399.9 237.5 414.7M246 401 238 415" fill="none" stroke="#2b2b2b" stroke-width="0.50"/>
<path d="M202.3 400.4 204 396.4 206.7 393.1 210.9 389.2 215.9 385.8 222 382.8 225.7 381.5 228.5 381.1 230.5 381.6 233.3 383.5 235.4 385.6 246 401M203.5 401.5 210.4 397 211.9 397 216.6 399.1 229.8 408 238 415" fill="none" stroke="#1a1a1a" stroke-width="0.80"/>
<path d="M203.2 401.8 208.9 399.6 209.7 399.6 212.5 400.7 238 415M203 402 207.5 402.2 209.6 402.9 238 415M202.8 402.2 206.2 404.7 217 410.2 229.8 414.2 238 415M203.5 401.5 202.5 402.5M204.5 400.8 202.8 403.3M205.9 399.8 203.2 404.4M207.3 398.9 203.7 405.5M208.5 398.2 204.2 406.3M209.5 397.5 204.5 406.9M210.5 397 205 407.5M211.9 397 206.4 408.3M213.9 397.7 208.9 409.8M216.3 398.9 212.2 411.5M218.8 400.3 215.8 413.2M221.3 401.8 219.2 414.4M223.9 403.6 222.6 415.3M226.5 405.5 226 415.9M228.8 407.2 228.7 416.2M230.6 408.7 230.7 416.2M232 410.1 232.2 415.9M233.4 411.4 233.4 415.6M234.7 412.5 234.7 415.4M236 413.6 236 415.2M237.2 414.4 237.2 415.1M238 415 238 415" fill="none" stroke="#2b2b2b" stroke-width="0.34"/>
<path d="M203.5 401.5 210.3 397.1 211.2 396.9 212.3 397.1 215.5 398.4 222.8 402.8 229.7 407.9 238 415M202.5 402.5 204.5 406.9 205.5 407.8 213.7 412.3 218.7 414.3 226.1 415.9 229.8 416.3 238 415" fill="none" stroke="#1a1a1a" stroke-width="0.80"/>
<path d="M239.3 393.1 239.7 385.2 240.3 383 241.2 381.6 242.3 380.6 243.6 380 245.1 379.7 246.7 379.9 250.3 380.9 252 380.9 255.5 379.7 257.2 379.3 260.3 379.9 261.7 380.7 262.8 382.1 263.6 384.7 264.4 394.6M239.6 394.3 240.3 387.3 240.9 385.3 241.8 384.1 243 383.2 244.2 382.7 245.6 382.4 250.5 383.4 252.1 383.4 255.4 382.5 256.9 382.2 259.9 382.7 261.2 383.4 262.3 384.6 263.2 386.8 264.4 395.1M239.9 395.4 240.9 389.3 241.6 387.6 242.5 386.6 243.6 385.8 246.2 385.1 250.7 385.9 252.2 385.9 256.7 385 259.5 385.5 260.7 386.1 261.8 387.1 262.7 388.9 264.3 395.7M240.1 396.6 241.5 391.4 242.2 390 243.2 389 244.3 388.4 246.7 387.8 250.9 388.5 256.4 387.9 259 388.3 260.2 388.7 261.3 389.5 262.3 390.9 264.2 396.3M240.4 397.7 242.1 393.4 242.9 392.3 243.8 391.5 246.1 390.7 248.5 390.6 252.4 391 256.2 390.7 258.6 391.1 259.8 391.4 260.8 392 261.8 393 264.1 396.9M240.7 398.9 242.6 395.5 243.5 394.6 245.6 393.6 247.8 393.2 258.2 393.9 260.3 394.5 264.1 397.4M239 392 241 400M239 389 241.7 399.2M239 385.1 242.7 398.1M239.4 381.6 243.8 397.2M240.4 379.3 245 396.6M241.7 377.9 246.3 396.2M243.4 377.2 247.6 396.1M245.3 377.1 248.8 395.9M247.5 377.7 250.1 395.9M249.9 378.4 251.4 396M252.1 378.3 252.6 396.1M254.4 377.5 253.9 396.2M256.6 376.7 255.2 396.4M258.7 376.6 256.4 396.5M260.6 377.1 257.7 396.7M262.4 378.2 258.9 396.8M263.6 380.7 260.2 397.1M264.2 385.1 261.6 397.4M264.4 390.2 263 397.7M264.5 394 264 398" fill="none" stroke="#2b2b2b" stroke-width="0.30"/>
<path d="M239 392 239.1 383.1 239.6 380.7 240.5 379.1 241.7 378 243 377.3 244.5 376.9 246.2 377.3 250.1 378.4 251.9 378.4 255.7 376.9 257.4 376.5 259.1 376.7 260.7 377.1 262.2 378 263.4 379.6 264 382.6 264.5 394M241 400 243.2 397.6 244.2 396.9 248.3 396 259.8 397 264 398" fill="none" stroke="#1a1a1a" stroke-width="0.48"/>
<path d="M258 398.6 267.4 394.7 270.7 393.9 277.6 393.6 282.7 394.1 285.9 395 288.9 396.5 291.5 398.5 293.5 401 295 405.5 296 410.1M258 400.3 267.4 396.7 272.4 395.8 279.3 395.6 284.3 396.3 287.4 397.3 290.1 398.9 292.4 400.9 293.4 402.1 294.9 406.1 296 410.2M258 401.9 267.4 398.7 274.2 397.7 280.9 397.7 284.2 398.1 287.3 399 290 400.3 292.3 402.1 293.2 403.1 294.9 406.7 296 410.3M258 403.6 267.4 400.7 275.9 399.7 282.6 399.7 287.2 400.7 290 401.8 292.2 403.3 293.8 405.2 296 410.4M258 405.2 269.1 402.4 280.9 401.6 285.7 402 289.9 403.2 292.1 404.5 293.7 406 296 410.5M258 406.9 269.1 404.4 280.9 403.5 287.1 404 291 405.1 292.9 406.2 296 410.6M258 408.6 277.5 405.6 285.6 405.5 289.7 406.1 292.8 407.3 296 410.7M258 410.2 282.4 407.3 289.6 407.5 292.7 408.3 296 410.8M258 411.9 286.9 409 292.6 409.4 296 410.9M258 413.5 292.5 410.4 296 411M258 415.1 296 411.1M258 416.8 272.5 416.4 296 411.2M258 418.4 269.1 418.7 282.3 416.8 292.9 413.2 296 411.3M258 420.1 269.2 420.7 279.1 419.4 286.6 417.3 292.1 414.6 296 411.4M258 421.8 269.2 422.8 277.4 421.7 283.7 420 290 417 296 411.5M258 423.4 267.5 424.7 272.5 424.6 280.6 422.9 285.1 421.2 289.9 418.3 296 411.6M258 425.1 267.5 426.8 272.5 426.7 279 425.3 283.6 423.7 287.6 421.4 290.9 418.7 296 411.7M258 426.7 267.5 428.8 270.9 428.9 277.4 427.8 282.1 426.2 286.3 423.9 290.8 419.9 296 411.8M258 428.4 267.6 430.8 270.9 430.9 275.8 430.2 280.5 428.7 283.5 427.4 286.2 425.5 289.6 422.3 296 411.9M258 397 258 430M259.6 396.3 259.6 430.5M261.1 395.5 261.2 431M262.6 394.7 262.7 431.5M264.2 394 264.3 432M265.8 393.3 265.9 432.4M267.4 392.7 267.6 432.8M269 392.2 269.2 433M270.7 391.9 270.9 433M272.4 391.7 272.5 432.8M274.2 391.6 274.2 432.6M275.9 391.5 275.8 432.2M277.6 391.5 277.4 431.8M279.3 391.7 279 431.3M281 391.9 280.5 430.7M282.7 392.2 282 430M284.4 392.6 283.5 429.2M286 393.2 284.8 428.3M287.5 394 286.1 427.2M289 394.9 287.3 426.1M290.3 396 288.5 424.9M291.6 397.2 289.5 423.6M292.7 398.5 290.5 422.3M293.6 400 291.4 420.9M294.2 401.6 292.3 419.4M294.7 403.2 293 417.9M295.1 404.9 293.8 416.5M295.4 406.6 294.5 415M295.7 408.3 295.3 413.5M296 410 296 412" fill="none" stroke="#2b2b2b" stroke-width="0.40"/>
<ellipse cx="253" cy="411" rx="21" ry="13" fill="#2a2a2a" opacity="0.330" transform="rotate(-12 253 411)"/>
<path d="M256.8 413.4 252 412.8M250.8 411.9 247 413.3 246.7 413.3 248.1 412.3M254 414.7 255.7 415.9 256.7 416 257.3 415.1 258.9 407.8M263.7 417.5 261.6 416.1 259.2 415.3 256.7 415.3 244.6 418.8 242.2 419.7 242.7 420.3 245.3 420.2M239.5 410.3 236.8 414.7 236.1 417.2 239.8 413.5 243.2 409.6 240.5 409.9 239.5 407.9 242.2 403.5 232.7 419.4M262.3 408.6 263.2 406.6 262.4 407.4 257.8 414.7 256.5 416.5 254.6 417.1 253.6 415.7 257.9 416.2M251.8 405.1 250.2 408.2 249.6 408.9 248.8 409.1 245.4 406.4M273.5 413.1 273.1 404.3 272.6 401.4 270.2 401.9 265.9 405.9 264 408.1 264.8 406.4 268.1 401.5M256.1 420.3 241.9 422.2 234.7 422.4 229.4 418 232.2 414.3 239.1 416.4 245.8 419 247.7 423.7 242.1 424.5 242.4 417.3 243.1 410.1M262.2 408.8 258.2 411.1 259.4 410.8 259.9 410.9 254.8 414.1M271.9 416 251.9 422.5 250.3 422.4 262.8 416.2M254.5 414.2 253.2 414.9 251.8 415.1 250.9 414.4 255.3 414.3 255.2 415.2 254.6 416.4 258.1 419M253.7 407 251.6 409.4 250.2 410.3 248.7 410.2 245.7 409 247.3 409.2 248.8 409.7 248.4 411 246 413M252 406.7 257.2 407.1 258.9 407 260.1 406.1 259.5 404.5 257.5 401.7 256.7 402.5 256.5 405.9M248.2 408.4 249.9 410.5 249.8 409.2 250.1 408.6 252.4 407.2M252.5 414.1 254.5 414.3 255.9 413.2 256.2 411.2 257.4 411.1 256.9 412.9 254.1 415.9 253.1 417.6 255 417.1 258.8 415.6M256.5 404.8 260.8 406 265.2 406.8 269.6 406.5 278.1 404 266.7 407.8 262.6 409.4 260.4 412.6 263.2 416.1M256.8 398.1 232.6 413.5M247.2 423 253.9 419.2 257.1 417 257.3 414.2 253.7 412.8 249.9 412 246 411.8 244.5 414.8 244.8 418.7 241.8 420.2 244.4 419.5M252.3 406.3 256.4 410.7 256.6 410.7 256.1 412.1M253.5 409.2 254.5 409.5 254.1 409.5 256.4 410.7M237.5 408.9 246.1 412.8 250.2 415.1 247.2 416.8 242.5 417.1 237.8 416.8 237.9 412.9 241.3 409.8 245.8 410.6 247.6 414.9 248.7 419.5M253.7 412.5 255 412.3 258.6 410.7 256 413.2 255.2 414.3 257.4 411.9M241.9 413.8 238.9 414.5 236.8 413.4 237.5 410.5 239.9 408.7 242.9 407.9 245.9 407.4 248.1 407.7 236.8 412.5M253.8 408.2 256.3 408.4 251.9 408.5M273.4 405.7 251.1 417.5 251.1 419.3 263.6 418 269.8 417.1 266.8 416.6 254.2 416.6M246.1 415.8 251.9 416.7 251.6 417.2 249.6 417.4 247.7 417.3 246 416.5 244.8 415 243.8 413.4 244.1 413.2 245.5 414.6M255.2 412 254.5 409.5 256.5 411.1 256.5 410.8 254.5 408M262.9 401.9 264.5 402.8 264.8 403.8 259.4 403.4 258.5 404.5 263.1 410 264.1 411.5M256.5 407 256.4 407.4 256.6 409.5 257.3 410.4 259.4 410.7 259.7 410.5 255.5 409.7M251 408.3 246 415.4 245 416 246.2 410.3M263.8 414.4 251 414 251.8 412.6 260.1 410.4 262 410.3 246.1 416.5M250.6 417.7 244.9 418.8 245.2 417.9 256.3 414.3 256.6 413.7 245.4 417.1 248.7 417.2 266 414.4M258.9 398.6 259.7 405.4 260.1 397.6M265.2 403.1 249.1 406.6 251.5 407.3 254.3 406.2 256.4 404.2 258.9 406.4 263.4 411.2M260.3 408.9 268.1 407.2 267.9 408 265.2 409.7 263.7 410.4 262.2 410.6 260.6 410.5M252.2 413.7 254.4 413.8 256.5 413.5 258.5 413 258.3 412.5 251.9 412.5 249.8 412.8 248 413.8 249.7 414.6 251.8 415M255.8 403.2 239.9 410.5 242.9 410.1 254 406.4 259.5 404.3 258.4 401.6 253 403.7 242.9 409.6M239.9 405.9 240.2 404.3 240.6 403.8 242.7 409.8M254.8 413.5 255.7 411.1 255.7 407.6 256.1 408.2 256.5 409 256.4 409.8 256 410.6M261.7 409 264.8 409.9 264.6 409.3 253 403.3M251.5 407.8 250.9 406.6 254.9 406.3 255.4 407.3 253.8 408.5 252 409.3 250.1 409.9 249.2 410 254.7 407.7M247.5 410.7 250.8 412.2 248.6 410.8M242.6 414.2 254.3 414 255.3 414.6 252.7 416M253.3 416.9 255.2 420 256.8 418.2 257.7 408.6 257.2 412.2 258.8 414.2 261.8 412.2 264.7 409.9 259.5 413.4M253.3 416.4 255.8 410.1 257.5 409.5 259.9 412.7 258.5 410.9 260 411 253.7 413.4M261.5 406.1 243.8 408.4 247.6 407.8M246.9 420.2 249.6 416.8 250.9 416.2 252.1 416.9 257.3 423.8M238 416.2 257.1 421.9 257.3 422.8 250.8 421.8 244.3 420.5 245.4 418.5 271.7 415.7M244.9 413.2 237.5 414.8 234.9 414.9 235.3 415.1 250.5 416.3M255.9 408.8 255.7 407.7 255.8 406.9 257.2 408.8 257.7 409.8 254.9 407.7 255.9 409.7 255.9 410.2M240.8 414.3 240.6 409.4 241 408.8 242.1 413.6 242.9 420.2M242.3 414.6 252.3 416.2 250.8 416.1 250.8 415.4 253.4 413.9M244.4 422 238.7 423.3 238 423.8 272.6 417.9 268.8 419.5 257.6 422.7M252.1 415.7 244 412.8 242.7 412.1 242.4 411 246.3 409.1M254.2 418.5 256.9 413 259.9 407.7 265.4 406.8 270.4 410.3 270.1 415.3 265 418.7 259.6 421.7 259.2 422.7 264.8 420.3 270.1 417.3 270.4 411.4M260.1 411.4 270.2 416.8 269.8 416.2 267.9 414.8 267 412.9 268.5 411.2 272.1 408.3M258.4 411.1 256.1 412 259.2 410.5 260.5 410.2 252.7 416.7M256.8 408.4 258.2 406.1 258.9 403.7 256.3 404.2 253.7 405.1 251.3 406.2 251.8 407.7 265.1 410M253.8 413.9 256.4 408.8 258.8 408.8 260.7 410.8 261.9 408.7 260.3 409.5 257 414 262.8 407.7M250.9 418.3 246.1 414.5 244.4 414.4 244.2 416.4 244.2 420.5 242.8 420.7 238.8 416.1M255.2 411.2 252.5 409.2 251.8 408.4 252.7 407.9 256 407.9 253.5 408.4M261.8 404.9 249.3 409.1 259.5 405.2M265.6 419.1 262.3 412.6 260.4 409.5 257.4 407.5 259.6 406.7 266.9 406.8 270.5 407.1 271.4 409.5 269.3 410.3 269.6 406.7M263.9 415.8 255.2 423.8 254.5 423.8 259.1 417.3M253.9 408.1 254.6 408.9 255.7 408.6 256.6 408.1 252.5 409.4 251.7 408.9 252.4 408.5 254.5 409M255.7 411.8 257.6 410.8 258.7 411.3 254.1 407.7M237.3 405.5 246.9 418.9 251.6 424.6 247.6 423.5 243.7 422.2 241.1 420 244.9 418.6 248.9 417.6M258.1 405.7 251.5 405.8 261.1 406.3M248.7 406.6 250 412 249.6 413.8 248.8 413.2 248.6 409.5 248.3 413.1 247.4 411.6 246.7 409.9M259.3 403.6 245.2 406.2 245.2 406.5M250.9 416.6 249.1 413.4 248.2 412.6 247.3 413.3 246.1 415.5 246.5 415.5 249.1 412.8M244.8 406.1 263.5 403.5 266.7 403.2 267.5 404.4 259.2 408.9M250.2 415.5 254.3 412.6 254.2 412.3 252.4 413.2 250.3 415.3M249.9 410.9 250.4 411.2 249.6 411 249.2 410.6 252.2 409.6 250.1 411.8M249.9 411.4 249.8 408.8 249 408 247.7 408 247.7 408.2 251.5 408.7 252 408.4 249.6 407.4M246.6 413.3 254.1 416 253.4 415 246.4 411.3 253.4 414.6 255.7 416.1 244.3 412.3M249.6 414.5 250.7 414.4 246.5 414.7M253.9 407 254.5 408M250.7 413.1 251.2 414.1 247.1 410.4 246.5 409.5 247.5 409.3 250.8 410.1M252.1 404.9 263 407.7 260.4 407.6 255.4 406.1 254.8 407.3 256.6 409.3M253.7 408.3 259.7 409.8 261 409.9 253.2 407.2 253.4 408.4 256.3 411.2M247 407.4 244.2 411.4 242.4 413 241.7 411.1 243.9 412.1 246.3 412.8 248.5 412 250.1 410.2 254.1 404M237.4 409.4 244.2 412.4 247.6 414.1 246.6 416.7 243.7 414.9 241.5 411.8 243 410.2 246.4 411.7 247.8 415.1 248.9 422.5M263 415.9 254.4 422.6 253.8 423.9 263.8 419.6M266.6 399 270.8 401.8 272.7 403.5 273.9 405.6 272.5 407.6 268.1 410.2 258.9 414.5M268.1 401.9 250.3 404.3 246.7 404.2 249.4 402.1 262.3 395.8M250.5 414.3 247.9 413.3 250 413.2 252.7 413.9 251.6 416.4 249.2 417.7 246.8 416.1 242.7 412.2 249.5 416.9M251.4 417.8 263 415 260.6 415 253.6 416.1 260.7 415.9 256.8 416.1M249.3 418.2 250 415.2 250.1 414.4 249.4 413 248.8 412.5 248.1 412.3 246.5 412.4M247.2 398.2 240.9 409.5 242.8 406.2 245.1 403.2 245.6 406.9 244 409.5 240.9 407.2 238.1 404.7M257.3 409.6 257.1 410.6 256.5 411 255.6 410.5 256.1 410 257.6 409.8 254.7 410M242 405.3 268.2 403.8 254.3 404.5 247.3 405.5 240.5 406.9 259.8 403.3M254.6 406.9 253.4 406.9 253.4 406.1 254.4 405.3 255.5 405.3 260.2 412.4M244.5 413.6 244.5 407.8 244.2 405.8 243.6 404.1 242.5 403.9 242.8 413.5" fill="none" stroke="#0c0c0c" stroke-width="0.60"/>
<path d="M260.3 415.3 256.1 416.7 257.2 417.4 260 418 261.5 417.9 261.5 416.5 262.7 415.8 265.6 415.1M267 406.4 262.5 404.6 268 404.1 270.6 404.2 254 405.9 250.1 407.1 272.2 408.9M268.7 413.5 262.1 412.2 262.8 412.9 264 413.5 265.3 413.7 264.4 411.2 264.7 410.1M280.4 403.1 265.4 405.8 260 409.2 266.6 413 273.7 415.6 281.1 417.1 288.7 416.8 287.8 410.8 282.9 405.1 276.9 401.2 275.2 408.5M265.9 412.8 263.7 412.1 268.5 415.4 269.1 415.6M283.1 405.7 280.9 412.1 279.3 415.1 277 417.6 271.6 421.9 268.7 423.7 270.2 420.7 271.5 417.6 272.1 410.8M278.1 422.9 274.3 413.9 273.7 411.6 273.6 409.2 274.4 406.9 275.7 404.8 280.4 399.2M269.3 415.8 263 416.1 259.9 416.5 258 418.5 258.3 421.6 261.1 419.7 263.9 418.3 264.5 418.5 259.3 422.1M278.6 408.9 266.6 417.1M264.2 410.5 265.2 411.7 265.3 412.2 261.8 411.5M255.1 398.5 248.3 406.7 237.7 411.8 245.9 411.6 268.8 406.5 236.3 412.6 243.1 409.4 265.6 402.5M274.5 413.3 274.8 410.8 274.7 409.5 273.7 409.7 268 416.5M263.3 411.2 267.3 414.2 267 414.4 264.9 414M248 415 242.3 420.2 240.2 421.8 240.3 419.9 247.9 406.4M265.2 417.5 271.7 419.9 273.3 418.9 271.1 416.2 271.4 414.3 274.8 415.1 274.2 416.6 260.4 418.7M265.4 417.5 274.5 414.2 276.1 414.2 260.2 417.1 260.7 417.4 264 417.1M263.2 417.7 269.6 414 270.1 412.9 268.2 412.8 266.4 413.2 265 414.3 266.4 415.2 270 416M257.5 410.5 259 407.8 263.5 403.5 262.7 403 254.5 407.3 254.5 408.4 263.6 406.6M258.2 426.1 265 422.5 267 421 264.9 419.9 262.3 419.7 262.6 420.5 272 424.7M269.6 404.9 246.2 414.1 239.9 415.2 246.5 410.1 253.7 405.7 261.4 402.7 269.6 401 271.3 403.3 256.7 411.5M247.5 406.3 247.2 402.5 250.3 400.9 254.1 401.5 283.7 409.6M269.7 420.5 274 421.2 275.7 420.5 275.5 418.4 274.1 416.8 272 416.8 261.7 420M262.3 406.3 257.5 412.2M272.6 416.3 277.2 412.3 280.8 410.8 274 420.9 266.9 430.7 262.4 434.5 264.8 429.1 275.2 414.3M267.1 411.2 265.3 409.1 269.7 413.9M252.9 413.3 255.4 413.4 251.7 414.4 250.4 414.6 250.5 413.6 254.1 410M242.9 423.6 245.6 423.6 247.6 421.8 251.5 414.4 252.5 411.6 248.9 422.1M266.1 418.1 267.5 422 268 419.3 267.9 415.1 267.6 411.1 265.8 413.6 263.5 421.5 264.2 422.6 270.5 412M267.1 414.6 261.1 419.5 261.3 420.1 274.5 412.2 272.5 414.7 266.9 420 263.2 420.8M259.8 423.5 254.8 424.7 253.9 424.4 272.5 416.3M276.7 419.4 267.3 419.6 265.2 418.9 266.9 417.4 277.2 411.5M259.7 409.9 261 409.3 259.3 410.3 259.4 411.5 263.3 412.1 265.3 412 264.4 410.4 263 408.9M268.2 416.8 278.9 413.4 282.2 411.6 279.1 410 271.7 408.6 269.4 409.9 271.7 411.4 273.5 404.1M262.9 422.9 263.2 420.2 263.4 420 263.5 421.3 263.2 422.6 262 423.2 255.3 423M276.5 423.1 277 419.1 276.7 415.1 275.4 411.2 274.6 407.3 278.1 406.8 281.9 408 285.4 409.9 283 412.1 271.3 415.4M255.9 408.9 240 413.8 235.9 414.7 235.9 412.8 252.9 400.8M275.5 416.8 274 418.1 272.1 418 270.3 417.1 270.1 416.6 272 417.1 270.9 417.4 268.9 417.4 267 416.9 266.9 415 268.1 411.3M254.2 399.2 271.6 400.8 275.9 401.5 274.8 403.1 253.3 406.9M251.7 418.2 252.1 415.4 252.1 413.5 250.2 418.9 250.8 418.3 252 415.7 262.9 421M243 411.8 239.6 419.6 238.7 422.3 239.2 424.2 245.9 418.9 248.4 417.6 251.1 417.8 253.7 419M258.2 413.7 259.7 410.8M275 398.9 280 399.7 240.8 411 245.9 409 261.4 403.9 269.3 401.9 274.4 406.6M266.5 399.2 281.3 411.8 280.8 412.1 273.7 407.8M249.3 408.6 258.1 401.4 262.6 398.1 250.5 410.3 252.1 411.6 262.4 406.7 260.4 405 255 403.2M271.5 406.9 259.7 410.5 262.4 410.6 275.4 408.9 271.3 409.2 268.8 406.5 268.1 402.5M275.5 400.9 260 406.5 260.8 404.6 264 402.2 260.4 404 259.3 406.6 263.4 407.2 271.5 407.9M264.2 416 253.7 418.7 254.3 419.1 270.5 417.1M260.5 409.6 265 406.1 267.1 402.5 261.4 403.3 255.8 404.5 254.1 407 259.6 408.6 265.3 409.8 270.9 410.6 271.9 406.5 267.5 404.6 263 408.1M263.8 419.5 254.8 423.2 248.6 426.7 258.2 424.9 267.6 422.7 273.5 421 244.8 425.8 248.6 426 258.2 424.9 260.4 421.2M268.1 416.5 267.1 415.3 265.4 414.2 258.3 417 258.8 417.2 271 413.5M260.1 410 258.2 412.6 259.3 413.3 272.1 411M254.2 410.3 256.5 418.6 255.8 422.3 252 420.3 248.4 417.9 245.3 416.6 250.8 423.2 251.1 426.1 246.9 425.2 242.7 424M256.7 417.5 257.4 418.3 257.8 418.1 259.3 414.2M258.4 411.3 246.6 420.7M256.7 415.9 257.3 414.5 257.3 412.9 256 410 255.6 409.7 258.4 418.9M281.4 421.6 287.9 420.2 291.5 416.9 285.7 413.5 279.7 410.6 273.6 407.9 270.3 408.1 285.7 420.9 282.6 419.9 276.9 416.5M247.2 412.5 246.1 414.5 244.8 414.7M267.3 395.8 273 407.7 273.4 409.1 272.2 409.3M257.4 405.2 259.8 405.9 262.2 406.9 262.5 409.1 259.5 413.2 257 416.1 263.8 408.5M266.1 414.7 269.8 414.2 263.1 416.2 259.4 416.7 263.8 416M251.8 421.6 273 419.1 267 419.9 261.5 421.9 260.8 427.3 254.9 428.4 242.9 429.3M249.1 418.2 239.5 419.9 234.7 420.6 231.8 418.7 235.3 415.4 258.8 397.9M272.5 408.8 276.8 411.8 276.3 410.8 273.8 408.4 272.2 408 270.9 409.2 268.1 413.6M274.2 404.3 270.9 417.9 272.5 416.4 274.4 412.2 277.6 403.4 278.3 401.9 274.4 415.3M264.1 415.7 268.2 411.6 266 414.3 264.8 414.8 265.1 413.7 265.9 415.2 266.1 416.9 265.2 418.4M251.6 409 254.8 412.9 256.5 414.7 256.7 412.6 256.2 410.2 257.1 410.4 251 421.3M254.4 419.2 256.5 420.2 258.7 420.7 258.9 418.6 258 414.1 259.8 415.5 260.3 417.3 251.1 416.5M257 408.5 271.2 404.4 271.7 403.6 238 409.8M268 413.4 268.5 412.7 268.6 412.2 262.3 416.5M285.8 409.6 276.4 417.5 273.9 419.3 274.3 417.3 277.6 412.1 277.2 410.5 271.8 413.4M267.2 417.9 267.1 415.1 266.1 416.6 265.9 419.3 267.4 419.9 271.1 415.8 272.1 413.5 269.5 414.3 261.8 417.5M279.9 402.2 274.5 404.5 269.2 407.2 271.2 411.2 270.5 410 265.7 406.6 263.2 402.6 269.1 402.6 280.8 403.8 286.7 404.6 283.8 406M266.4 415.2 276.9 410.6 274.9 412.2 268.2 416.1 268.7 414.5 271.4 411.8 272.8 409.5 269 409.1 265.2 408.3M257.7 415.3 259.2 412.6 259.9 412.2 259 418.1 260.8 412.9M279 404.3 258.3 409.8 257.6 410.4 260.6 410 260.6 408.6 257.8 407.3M268.3 412.9 260.3 416.7 262.2 417.4 265.1 417.2 265.2 417.4 262.2 417.7 260.2 417.4 268.6 414.7M263 407.8 263 409.2 263.6 409.9 264.7 409.1 264.6 408.2 262 407.7 260.8 408.2 260.4 409.5 259.4 410.4 257.1 411.9M258.5 419.7 257.4 413.3 255.4 411.1 252.7 412.8 250.3 415.1 248.5 417.8 247.1 420.8 257.9 417.3M273 404.8 266.9 404.4 274.5 403.8M247 410 252.6 405 258.6 400.5 267.3 397.3 252.8 401.2 250.8 401.4 245.3 403.1M255.2 409.1 252.1 406 248.3 405.7 245.1 408.6 242.7 412.3 246.1 413.4 271.7 407.4M264.1 408.6 266.4 407.2 262.2 409.1M253.4 422.1 259.3 411.4 259.6 408.8 250.6 417 252 414.4 254.5 411.2 255.3 411.7 253.7 415.4M269.2 412.5 266.9 407.6 265.4 405.4 263 405.7 261.1 407.6 259.4 409.7 258 412 260 411.8 267.1 407.9M278.2 405.8 278.3 410.1 275.6 406.3 274.1 402 276.9 398.4 279.8 401.7 281.6 406 280 409.4 275.4 408.6 261.9 404.7M239.9 414.8 249.5 419.2 251.6 421.3 248.2 421.9 241.2 422.4 255.1 422.9M261.9 411.6 261.6 411.2 264.5 411.2 265.8 410.7 262 408.4 261.3 407.4 265.7 407.1M254.9 411.4 246.5 416.4 247.4 415.1 252.5 411 255.2 409.3 261.1 406.6 267.2 404.4M276 409.5 270.6 408.2 268.7 408 267 408.5 266.7 410.3 269.5 419.3M262.2 408.9 264.1 407.6 264.2 407.9 260.6 411 258.6 412.3 254.1 413.7 253 414.8 259.7 412.4" fill="none" stroke="#1a1a1a" stroke-width="0.50"/>
<path d="M575.5 227.9 577 239.3 583.4 261 584.1 262.6 585.3 264.5 587 266.5 607.4 285.8 609.4 288.4 610.5 290.9 610.4 293.3 609.5 295.6 606.7 300.2 605.7 302.5 605.1 307.1 605.7 320.3 608.7 343.1 610 349.5 613.1 360.1 615.9 367.1 617.6 370.4 619.8 373.8 628.7 385M579.9 227.8 581.9 239 588.8 260.5 589.6 262.2 590.8 264.1 594.5 268.3 611.4 285.3 613.3 287.9 614.4 290.4 614.4 292.8 613.5 295.2 611.1 299.9 610.3 302.4 609.9 307.4 610.7 321.4 614 343.9 617.1 356.6 619.4 363.2 620.8 366.5 622.5 369.6 624.7 373 633.5 384M584.4 227.7 586.9 238.7 594.2 260 596.2 263.7 599.7 268 615.5 284.8 617.3 287.3 618.3 289.8 618.3 292.3 617.6 294.7 615.6 299.7 614.9 302.2 614.6 307.6 615.8 322.5 619.3 344.8 622.3 356.6 624.4 362.8 625.8 365.8 627.4 368.8 632 375.4 638.2 383M588.8 227.6 592.6 240.8 599.6 259.5 601.7 263.4 605 267.7 619.5 284.2 621.2 286.8 622.1 289.3 622.2 291.8 621.7 294.3 620 299.4 619.4 302.1 619.4 307.9 620.8 323.7 624.5 345.7 628.4 359.5 630.7 365.2 632.3 368 636.8 374.4 642.9 382M593.3 227.5 605 258.9 607.2 263 623.6 283.7 625.1 286.2 626 288.7 626.2 291.3 625.8 293.9 624.4 299.2 624 302 624.3 311.3 626.4 328.3 629.8 346.5 633.5 359.3 635.6 364.5 637.1 367.2 641.6 373.5 647.6 381M597.7 227.5 610.4 258.4 612.6 262.6 627.7 283.2 629 285.6 629.9 288.2 630.1 290.8 628.9 298.9 628.6 301.9 629.2 311.8 631.5 329.5 635.1 347.4 638.6 359.1 640.6 363.9 642 366.4 652.4 380M602.2 227.4 616.9 260.1 620.8 266.7 631.7 282.7 633 285.1 633.8 287.7 634.1 290.3 633.3 298.7 633.2 301.8 634.4 316 638 337.8 641 350.4 644.5 361 646.9 365.6 657.1 379M606.6 227.3 623.5 261.9 635.8 282.1 636.9 284.5 637.7 287.1 638 289.8 637.8 301.7 639.8 320.5 643.9 342.2 648.8 358.7 650.5 362.6 653.8 367.6 661.8 378M611.1 227.2 639.8 281.6 640.8 284 641.5 286.6 641.9 289.3 642.3 301.6 644.7 321.4 649.1 343.4 654.5 360.1 656.7 364 666.5 377M615.5 227.1 627.3 246.8 643.9 281.1 645.4 286 646.2 291.7 648.4 313.7 651.1 330.3 655 347.1 659.6 359.7 661.6 363.2 671.3 376M571 228 620 227M571.2 231 621.7 229.4M571.5 235.2 624.1 232.8M572.1 239.8 626.6 236.4M573.1 244.5 628.7 239.6M574.6 249.7 630.6 242.8M576 254.5 632.6 246.3M577.1 258.1 634.6 250.1M577.8 260.8 636.8 254.4M578.9 263.4 638.9 258.7M581.4 266.5 640.8 262.8M585.3 270.2 642.4 266.6M589.8 274.1 643.9 270.3M594.2 278.1 645.4 274M599.3 282.6 646.8 277.6M603.9 287.1 648.1 281.2M606.6 291.4 649.3 285.4M605.8 295.3 650.1 290.2M603.3 299 650.8 295.5M601.1 302.7 651.5 301.4M600.4 306.3 652.5 308.3M600.3 309.9 653.5 316M600.4 313.8 654.7 323.5M600.6 318.5 656 330.5M601.1 323.9 657.4 337.2M601.7 329.5 658.9 343.3M602.4 335 660.2 347.8M603.1 340.6 661.3 351M604.1 346.3 662.3 353.5M605.6 352.2 663.3 355.8M607.5 358.6 664 357.7M609.8 365.1 664.8 359.6M612.6 371 666.4 362.3M616.6 376.9 669.7 366.8M620.9 382.2 673.3 371.5M624 386 676 375" fill="none" stroke="#333" stroke-width="0.36"/>
<path d="M580 265 592.2 276.2 606.5 291M606.5 291 602.3 299.4 600.8 303.9 600.3 308.5 600.6 318 602 332" fill="none" stroke="#222" stroke-width="0.80"/>
<path d="M556.5 230.9 558.2 227.5 559.5 226.2 562.9 224.5 568.3 222.7 579.5 220.9 607.9 220.6 615.4 221.5 619 222.6 625.7 226.2M559.9 231.2 561.6 228.1 562.9 226.9 566 225.3 572.8 223.3 595.7 221.5 611.6 222.1 615.1 222.6 618.5 223.7 624.8 226.9M563.4 231.4 565 228.7 566.3 227.6 570.8 225.6 577.1 224 606.6 223 613.2 223.5 616.4 224.2 623.8 227.6M566.8 231.7 568.5 229.2 569.6 228.3 573.8 226.5 579.7 225.1 608.5 224.3 614.5 224.9 618.8 226.3 622.9 228.3M553.1 230.6 570.2 232M554.3 227.8 571.5 230.3M556.1 225.5 573 229M558.8 224 574.9 228.1M561.6 222.9 576.9 227.3M564.5 222 578.9 226.8M567.4 221.2 580.9 226.3M570.4 220.6 583 226M573.4 220.2 585 225.8M576.4 219.8 587.1 225.7M579.4 219.6 589.2 225.5M582.4 219.4 591.3 225.4M585.5 219.2 593.4 225.4M588.5 219.1 595.5 225.3M591.5 219.1 597.6 225.3M594.6 219 599.6 225.3M597.6 219 601.7 225.3M600.6 219.1 603.8 225.3M603.7 219.2 605.9 225.4M606.7 219.3 608 225.4M609.7 219.5 610.1 225.5M612.7 219.8 612.1 225.7M615.7 220.3 614.2 226M618.6 221.2 616.2 226.6M621.4 222.4 618.2 227.3M624 223.9 620.1 228.1M626.6 225.5 622 229" fill="none" stroke="#2b2b2b" stroke-width="0.35"/>
<path d="M553.1 230.6 554.7 226.9 556.1 225.5 559.7 223.6 565.5 221.7 575.4 219.9 605.7 219.3 613.7 220 617.7 220.8 621.4 222.4 626.6 225.5" fill="none" stroke="#1a1a1a" stroke-width="0.56"/>
<path d="M554.7 230.4 555.8 244.9 559.6 260.9 573.1 302.2 578.4 323.5 579.5 335.3 579.1 357.9M556.4 230.1 557.5 244.6 561.8 261.8 572.8 294.5 579.3 320.9 580.4 329.4 579.9 358.2M558 229.9 559.1 244.2 563.5 261.5 573.2 289.4 580.3 318.1 581.6 327.1 580.8 358.4M559.6 229.7 560.8 243.8 565.7 262.3 574.3 286.8 581.3 315.3 582.7 324.7 581.6 358.7M561.2 229.4 562.2 241.8 567 260.9 575.5 284.3 582.3 312.4 584 324.4 582.4 359M562.9 229.2 563.8 241.4 569.2 261.7 576.7 281.8 583.3 309.4 585.2 321.8 585.4 330.7 583.2 359.3M564.5 228.9 565.4 241.1 571.3 262.3 578.5 281.5 584.4 306.5 586.5 321.5 586.7 330.5 584 359.6M566.1 228.7 567.1 240.7 575.5 268.1 580.3 281.1 585.1 301.1 587.7 318.7 588 328.1 584.8 359.9M567.7 228.5 568.7 240.3 577.2 267.6 582.1 280.7 586.3 298.3 588.9 315.8 589.3 325.5 585.7 360.1M569.4 228.2 570.4 239.9 578.9 267.2 583.9 280.4 587.9 297.8 590.3 315.4 590.6 325.3 586.5 360.4M553.1 230.6 571 228M553.2 231.5 571.1 228.8M553.2 232.6 571.1 229.7M553.3 233.9 571.2 230.9M553.3 235.4 571.3 232.1M553.4 237 571.3 233.5M553.5 238.6 571.5 235M553.6 240.3 571.6 236.5M553.8 242 571.8 238M554 243.6 572 239.5M554.2 245.1 572.3 241M554.4 246.5 572.6 242.5M554.6 248 573 244.1M554.9 249.5 573.4 245.8M555.2 251 573.9 247.5M555.5 252.5 574.4 249.2M555.9 253.9 574.9 250.8M556.2 255.4 575.4 252.4M556.6 256.8 575.9 254M556.9 258.1 576.3 255.3M557.3 259.4 576.7 256.6M557.7 260.6 577.1 257.6M558 261.8 577.4 258.6M558.4 262.9 577.7 259.4M558.8 263.9 578 260.2M559.2 265 578.3 260.9M559.6 266.1 578.7 261.7M560.1 267.2 579 262.6M560.5 268.4 579.4 263.6M561 269.7 579.9 264.7M561.5 271 580.4 266M561.9 272.4 581 267.4M562.4 273.8 581.6 268.9M562.9 275.3 582.2 270.5M563.5 276.8 582.9 272.2M564 278.3 583.6 273.9M564.5 280 584.2 275.6M565.1 281.6 584.9 277.4M565.6 283.3 585.4 279.2M566.2 285.1 586 281M566.8 287 586.5 282.8M567.4 288.9 587 284.7M568 290.9 587.4 286.5M568.6 293 587.9 288.4M569.3 295.2 588.3 290.4M569.9 297.3 588.7 292.3M570.5 299.5 589.1 294.3M571.2 301.6 589.4 296.4M571.8 303.7 589.8 298.4M572.3 305.8 590.1 300.5M572.9 307.9 590.4 302.7M573.5 310 590.7 304.9M574.1 312.2 591 307.2M574.7 314.3 591.2 309.5M575.3 316.4 591.5 311.8M575.8 318.5 591.7 314.1M576.3 320.5 591.8 316.4M576.7 322.5 591.9 318.7M577.1 324.5 592 320.9M577.4 326.3 592 323.1M577.7 328.1 591.9 325.2M577.9 329.8 591.8 327.3M578.1 331.5 591.6 329.4M578.2 333.1 591.4 331.4M578.3 334.7 591.1 333.5M578.3 336.3 590.9 335.5M578.4 337.9 590.6 337.5M578.4 339.5 590.3 339.5M578.5 341.1 590.1 341.5M578.5 342.8 589.8 343.5M578.5 344.6 589.5 345.7M578.5 346.5 589.2 347.9M578.5 348.4 588.9 350.1M578.5 350.3 588.6 352.3M578.4 352.1 588.3 354.4M578.4 353.8 588 356.3M578.4 355.3 587.7 358.1M578.3 356.6 587.5 359.5M578.3 357.6 587.3 360.7" fill="none" stroke="#2b2b2b" stroke-width="0.50"/>
<path d="M553.1 230.6 554.2 245.3 557.8 261.2 575.4 316.9 577.7 327.9 578.3 357.6M571 228 572 239.6 580.7 266.7 585.7 280 589.2 295 591.7 315 591.9 325 587.3 360.7" fill="none" stroke="#1a1a1a" stroke-width="0.64"/>
<path d="M578.3 357.6 581.1 360.9 583.1 361.6 587.3 360.7" fill="none" stroke="#1a1a1a" stroke-width="0.90"/>
<clipPath id="c3"><path d="M580 265 593 277 606.5 291 601 303 600.4 315 602 332 604 345 590 345 592 322 590 300 586 281Z" clip-rule="evenodd"/></clipPath><path clip-path="url(#c3)" d="M619.6 248.4 649.8 331.4M618 249 648.2 332M616.4 249.6 646.6 332.5M614.8 250.2 645 333.1M613.2 250.8 643.4 333.7M611.6 251.3 641.8 334.3M610 251.9 640.2 334.9M608.4 252.5 638.6 335.4M606.8 253.1 637 336M605.3 253.7 635.4 336.6M603.7 254.2 633.8 337.2M602.1 254.8 632.2 337.8M600.5 255.4 630.7 338.4M598.9 256 629.1 338.9M597.3 256.6 627.5 339.5M595.7 257.2 625.9 340.1M594.1 257.7 624.3 340.7M592.5 258.3 622.7 341.3M590.9 258.9 621.1 341.8M589.3 259.5 619.5 342.4M587.7 260.1 617.9 343M586.1 260.6 616.3 343.6M584.5 261.2 614.7 344.2M582.9 261.8 613.1 344.8M581.3 262.4 611.5 345.3M579.7 263 609.9 345.9M578.1 263.5 608.3 346.5M576.5 264.1 606.7 347.1M574.9 264.7 605.1 347.7M573.3 265.3 603.5 348.2M571.7 265.9 601.9 348.8M570.1 266.5 600.3 349.4M568.5 267 598.7 350M566.9 267.6 597.1 350.6M565.3 268.2 595.5 351.1M563.7 268.8 593.9 351.7M562.1 269.4 592.3 352.3M560.5 269.9 590.7 352.9M558.9 270.5 589.1 353.5M557.3 271.1 587.5 354.1M555.7 271.7 585.9 354.6M554.1 272.3 584.3 355.2M552.5 272.8 582.7 355.8M550.9 273.4 581.1 356.4M549.3 274 579.5 357M547.7 274.6 577.9 357.5M546.1 275.2 576.3 358.1M544.5 275.8 574.7 358.7M543 276.3 573.1 359.3M541.4 276.9 571.5 359.9M539.8 277.5 569.9 360.5M538.2 278.1 568.4 361M536.7 278.6 619.6 248.4M537.3 280.4 620.3 250.2M538 282.2 620.9 252M538.6 284 621.6 253.8M539.3 285.8 622.2 255.6M539.9 287.5 622.9 257.4M540.6 289.3 623.5 259.1M541.2 291.1 624.2 260.9M541.9 292.9 624.8 262.7M542.5 294.7 625.5 264.5M543.2 296.5 626.1 266.3M543.8 298.3 626.8 268.1M544.5 300 627.4 269.9M545.1 301.8 628.1 271.6M545.8 303.6 628.7 273.4M546.4 305.4 629.4 275.2M547.1 307.2 630 277M547.7 309 630.7 278.8M548.4 310.8 631.3 280.6M549 312.5 632 282.4M549.7 314.3 632.6 284.1M550.3 316.1 633.3 285.9M551 317.9 633.9 287.7M551.6 319.7 634.6 289.5M552.3 321.5 635.2 291.3M552.9 323.3 635.9 293.1M553.6 325 636.5 294.8M554.2 326.8 637.2 296.6M554.9 328.6 637.8 298.4M555.5 330.4 638.5 300.2M556.2 332.2 639.1 302M556.8 334 639.8 303.8M557.5 335.8 640.4 305.6M558.1 337.5 641.1 307.3M558.8 339.3 641.7 309.1M559.4 341.1 642.4 310.9M560.1 342.9 643 312.7M560.7 344.7 643.7 314.5M561.4 346.5 644.3 316.3M562 348.3 645 318.1M562.7 350 645.6 319.8M563.3 351.8 646.3 321.6M564 353.6 646.9 323.4M564.6 355.4 647.6 325.2M565.3 357.2 648.2 327M565.9 359 648.9 328.8M566.6 360.7 649.5 330.6" fill="none" stroke="#2b2b2b" stroke-width="0.51"/>
<path d="M621.6 226.6 628.5 235.7 637.8 251.7 643.3 263 649.1 279.3 650.6 284.9 655.4 319.2 659.3 339.1 661.2 346.7 665.7 359 668 362.8 677 375M623.3 226.2 630.6 235.6 642.1 255.3 645.7 263.2 651 280 652.3 285.7 654.3 303.2 658.7 329.5 662.5 346.7 667 359 669.2 362.8 678 375M625 225.9 632.8 235.4 636.8 241.5 646 258.4 648.1 263.5 652.9 280.7 654.3 289.5 655 299.1 661.1 334.4 663.8 346.7 668.2 359 670.4 362.8 679 375M620 227 626.6 225.5M620.7 227.9 627.5 226.5M621.4 229 628.5 227.6M622.4 230.4 629.8 229.1M623.5 231.8 631.2 230.7M624.6 233.4 632.7 232.3M625.6 235 634.1 234.1M626.6 236.5 635.5 236M627.6 237.9 636.8 237.8M628.4 239.3 638.1 239.9M629.3 240.6 639.4 242M630.1 242 640.7 244.3M631 243.5 641.9 246.5M631.8 244.9 643.1 248.6M632.7 246.5 644.1 250.6M633.5 248.1 645.1 252.4M634.5 249.8 646 254M635.4 251.6 646.8 255.4M636.3 253.4 647.5 256.6M637.3 255.3 648.2 257.9M638.2 257.2 648.8 259.1M639.1 259 649.4 260.4M639.9 260.8 649.9 261.9M640.7 262.5 650.5 263.5M641.4 264.2 651 265.2M642.1 265.8 651.6 266.9M642.8 267.4 652 268.7M643.5 269.1 652.5 270.5M644.1 270.7 652.9 272.4M644.7 272.3 653.3 274.2M645.3 273.9 653.7 276M646 275.4 654.1 277.7M646.6 277 654.4 279.5M647.2 278.5 654.7 281.3M647.7 280.1 655 283M648.3 281.7 655.3 284.8M648.8 283.5 655.5 286.6M649.3 285.4 655.7 288.4M649.7 287.4 655.9 290.2M650 289.5 655.9 291.9M650.3 291.7 656 293.6M650.6 294 656.1 295.3M650.9 296.4 656.2 297.2M651.2 298.9 656.3 299.2M651.5 301.6 656.6 301.6M651.9 304.4 656.9 304.3M652.3 307.4 657.4 307.2M652.8 310.7 658 310.5M653.2 314 658.6 313.8M653.7 317.3 659.2 317.2M654.2 320.6 659.9 320.5M654.7 323.7 660.5 323.7M655.3 326.8 661.1 326.8M655.8 329.8 661.6 329.8M656.5 332.8 662.2 332.8M657.1 335.7 662.8 335.7M657.7 338.5 663.4 338.5M658.4 341.1 663.9 341.1M659 343.6 664.4 343.6M659.5 345.7 664.9 345.7M660.1 347.5 665.4 347.5M660.6 349.1 665.9 349.1M661.1 350.4 666.3 350.4M661.5 351.6 666.7 351.6M662 352.6 667.1 352.6M662.4 353.7 667.5 353.7M662.9 354.7 667.9 354.7M663.2 355.7 668.2 355.7M663.6 356.6 668.6 356.6M663.8 357.4 668.8 357.4M664.1 358.2 669.1 358.2M664.4 358.9 669.4 358.9M664.9 359.9 669.9 359.9M665.5 360.9 670.5 360.9M666.4 362.3 671.3 362.3M667.6 364 672.4 364M669 366 673.7 366M670.7 368.1 675.2 368.1M672.3 370.2 676.6 370.2M673.8 372.1 678 372.1M675 373.7 679.1 373.7M676 375 680 375" fill="none" stroke="#2b2b2b" stroke-width="0.36"/>
<path d="M626.6 225.5 632.6 232.3 635 235.2 639.3 241.8 648.7 258.9 650.6 263.7 654.2 278.4 655.6 287.3 656.3 299.2 658.5 313.6 664.4 343.3 666.6 351.4 669.4 359 671.6 362.8 680 375" fill="none" stroke="#1a1a1a" stroke-width="0.64"/>
<clipPath id="c4"><path d="M588 345 606 345 616 360 630 378 638 390 587 390 587.5 362Z" clip-rule="evenodd"/></clipPath><path clip-path="url(#c4)" d="M576.5 331.5 648.5 331.5M576.5 335 648.5 335M576.5 338.5 648.5 338.5M576.5 342 648.5 342M576.5 345.5 648.5 345.5M576.5 349 648.5 349M576.5 352.5 648.5 352.5M576.5 356 648.5 356M576.5 359.5 648.5 359.5M576.5 363 648.5 363M576.5 366.5 648.5 366.5M576.5 370 648.5 370M576.5 373.5 648.5 373.5M576.5 377 648.5 377M576.5 380.5 648.5 380.5M576.5 384 648.5 384M576.5 387.5 648.5 387.5M576.5 391 648.5 391M576.5 394.5 648.5 394.5M576.5 398 648.5 398M576.5 401.5 648.5 401.5M648.5 331.5 648.5 403.5M645 331.5 645 403.5M641.5 331.5 641.5 403.5M638 331.5 638 403.5M634.5 331.5 634.5 403.5M631 331.5 631 403.5M627.5 331.5 627.5 403.5M624 331.5 624 403.5M620.5 331.5 620.5 403.5M617 331.5 617 403.5M613.5 331.5 613.5 403.5M610 331.5 610 403.5M606.5 331.5 606.5 403.5M603 331.5 603 403.5M599.5 331.5 599.5 403.5M596 331.5 596 403.5M592.5 331.5 592.5 403.5M589 331.5 589 403.5M585.5 331.5 585.5 403.5M582 331.5 582 403.5M578.5 331.5 578.5 403.5" fill="none" stroke="#2b2b2b" stroke-width="0.58"/>
<path d="M587.8 361 587 390" fill="none" stroke="#1a1a1a" stroke-width="0.90"/>
<path d="M591.2 305.3 598.4 318.7 641.8 376.9M592.5 304.7 599.6 318 642.9 376.1M590 306 593.7 304M591.5 308.9 595.2 306.9M593 311.8 596.6 309.8M594.5 314.7 598.1 312.6M596.1 317.5 599.7 315.4M597.7 320.3 601.4 318.2M599.5 323.1 603.1 320.9M601.4 325.8 605 323.6M603.3 328.4 606.9 326.2M605.3 331 608.8 328.8M607.2 333.6 610.8 331.4M609.2 336.2 612.7 334M611.1 338.8 614.7 336.5M613.1 341.5 616.6 339.2M615 344.1 618.5 341.8M616.9 346.7 620.4 344.4M618.8 349.4 622.3 347M620.8 352 624.2 349.6M622.7 354.6 626.2 352.2M624.7 357.2 628.1 354.8M626.6 359.8 630 357.4M628.6 362.4 632 359.9M630.6 365 634 362.5M632.6 367.6 636 365M634.6 370.1 638 367.6M636.7 372.7 640 370.1M638.7 375.2 642 372.7M640.7 377.8 644 375.2" fill="none" stroke="#2b2b2b" stroke-width="0.30"/>
<path d="M590 306 597.1 319.4 640.7 377.8M593.7 304 600.8 317.3 644 375.2" fill="none" stroke="#1a1a1a" stroke-width="0.56"/>
<path d="M654.7 239.5 658.7 253 675.6 327.1 676 329.8 676.1 332.7 675.8 335.5 674.6 340.9 672.7 346.2 664.2 360.8 659.1 370.8M656.5 239 652.9 240.1M657.3 241.5 653.6 242.5M658.1 244 654.4 245M658.9 246.5 655.2 247.4M659.6 249 655.9 249.9M660.3 251.6 656.6 252.4M661 254.1 657.2 254.9M661.5 256.7 657.8 257.4M662 259.3 658.3 259.9M662.5 261.8 658.8 262.5M663 264.4 659.3 265M663.5 267 659.7 267.5M664 269.6 660.2 270M664.5 272.2 660.7 272.6M665 274.7 661.2 275.1M665.6 277.3 661.8 277.6M666.2 279.9 662.3 280.1M666.8 282.4 662.9 282.6M667.3 285 663.5 285.1M667.9 287.6 664.1 287.6M668.6 290.1 664.7 290.2M669.2 292.7 665.2 292.7M669.8 295.2 665.8 295.2M670.4 297.8 666.4 297.7M671 300.3 667 300.2M671.6 302.9 667.6 302.7M672.2 305.5 668.2 305.2M672.8 308 668.8 307.7M673.5 310.6 669.5 310.2M674.1 313.1 670.1 312.7M674.7 315.7 670.7 315.2M675.3 318.2 671.3 317.7M676 320.8 671.9 320.2M676.6 323.3 672.6 322.7M677.3 325.9 673.2 325.2M677.7 328.4 673.8 327.7M678 331.1 674.1 330.2M677.9 333.7 674.2 332.8M677.6 336.3 673.9 335.3M677.1 338.9 673.5 337.9M676.5 341.4 672.8 340.4M675.6 343.9 672 342.8M674.7 346.4 671 345.2M673.5 348.7 669.9 347.5M672.2 351 668.6 349.7M670.8 353.2 667.2 351.9M669.4 355.5 665.8 354.1M668.1 357.7 664.5 356.3M666.8 360 663.2 358.5M665.5 362.3 662 360.8M664.3 364.6 660.9 363.1M663.1 367 659.7 365.4M662 369.3 658.6 367.7M660.8 371.7 657.4 370" fill="none" stroke="#444" stroke-width="0.29"/>
<path d="M656.5 239 660.6 252.6 677.6 327.4 678 330.3 678 333.1 677.7 335.9 676.4 341.5 674.5 346.8 665.9 361.5 660.8 371.7M652.9 240.1 656.9 253.4 672.2 321.3 673.6 326.7 674.1 329.4 674.2 332.2 674 335 673.5 337.7 671.9 343 670.8 345.6 662.4 360 657.4 370" fill="none" stroke="#333" stroke-width="0.48"/>
<path d="M587.3 311.6 577.3 275.3 575.5 270.3 564 223.3 561.8 210 561.4 201.9 561.6 196.6 562.4 191.2 563.6 186 565.4 180.9 566.5 178.5 569.5 174 573.2 170.1 575.3 168.5 577.5 167 579.9 165.8 585 164.1 590.3 163.1 595.7 163 601 163.5 606.3 164.5 611.4 166.1 616.4 168.3 621 171 625.1 174.5 632.5 182.4 637.3 188.8 643 197.9 645.3 202.8 648 210.4 650.6 220.8 653.2 236.7 656.5 249.8 657.9 260.4 658.1 265.8 656.6 281.9M588.7 311.3 578.8 275.5 577 270.5 565.6 224.3 563.4 211.2 562.8 203.3 562.9 198 563.5 192.7 564.6 187.6 566.2 182.5 568.6 177.8 571.7 173.5 573.6 171.6 575.6 169.9 577.8 168.5 580.1 167.2 585.1 165.5 590.3 164.5 595.6 164.4 600.9 164.9 606.1 165.9 611.1 167.5 616 169.7 620.5 172.4 624.5 175.9 631.7 183.6 636.5 190 642 199 644.3 203.8 646.8 211.3 649.3 221.6 651.9 237.3 655.2 250.1 656.6 260.6 656.7 265.9 655.2 281.8M586 312 590 310.9M585.6 310.4 589.6 309.4M585.1 308.9 589.2 307.9M584.7 307.3 588.8 306.4M584.3 305.7 588.4 304.9M583.8 304.1 588 303.4M583.4 302.6 587.5 301.9M582.9 301 587.1 300.4M582.5 299.4 586.7 298.9M582.1 297.8 586.3 297.4M581.6 296.3 585.9 295.9M581.2 294.7 585.5 294.3M580.8 293.1 585 292.8M580.3 291.5 584.6 291.3M579.9 290 584.2 289.8M579.5 288.4 583.8 288.3M579 286.8 583.4 286.8M578.6 285.2 583 285.3M578.2 283.7 582.6 283.8M577.7 282.1 582.1 282.3M577.3 280.5 581.7 280.8M576.8 278.9 581.3 279.3M576.4 277.4 580.9 277.8M575.9 275.8 580.5 276.3M575.4 274.3 580 274.8M574.8 272.8 579.5 273.3M574.3 271.2 579 271.9M573.9 269.6 578.5 270.4M573.5 268 578.1 268.9M573.1 266.5 577.7 267.4M572.7 264.9 577.3 265.9M572.3 263.3 576.9 264.4M571.9 261.7 576.5 262.9M571.5 260.1 576.1 261.4M571.1 258.5 575.8 259.9M570.7 257 575.4 258.3M570.3 255.4 575 256.8M569.9 253.8 574.6 255.3M569.6 252.2 574.3 253.8M569.2 250.6 573.9 252.3M568.8 249 573.5 250.8M568.4 247.4 573.2 249.3M568 245.9 572.8 247.7M567.6 244.3 572.4 246.2M567.2 242.7 572 244.7M566.8 241.1 571.6 243.2M566.4 239.5 571.3 241.7M565.9 238 570.9 240.2M565.5 236.4 570.5 238.7M565.1 234.8 570.1 237.2M564.7 233.2 569.7 235.7M564.3 231.6 569.3 234.1M564 230 568.9 232.6M563.6 228.4 568.5 231.1M563.3 226.8 568.2 229.6M562.9 225.2 567.8 228.1M562.6 223.6 567.5 226.6M562.3 222 567.2 225M562 220.4 566.9 223.5M561.7 218.8 566.6 222M561.4 217.2 566.3 220.4M561.2 215.6 566 218.9M560.9 214 565.7 217.4M560.7 212.4 565.5 215.8M560.5 210.7 565.2 214.3M560.3 209.1 565 212.8M560.2 207.5 564.8 211.2M560.1 205.9 564.6 209.7M560 204.2 564.5 208.1M560 202.6 564.3 206.6M560 201 564.2 205M560 199.3 564.2 203.4M560.1 197.7 564.2 201.9M560.3 196.1 564.2 200.3M560.4 194.5 564.3 198.8M560.7 192.8 564.4 197.2M560.9 191.2 564.5 195.7M561.2 189.6 564.7 194.1M561.6 188 565 192.6M562 186.5 565.2 191M562.4 184.9 565.6 189.5M563 183.3 565.9 188M563.5 181.8 566.3 186.5M564.1 180.3 566.8 185M564.8 178.8 567.3 183.5M565.5 177.3 567.9 182.1M566.4 176 568.6 180.7M567.3 174.6 569.3 179.3M568.3 173.3 570.1 178M569.3 172 571 176.7M570.4 170.8 571.9 175.4M571.6 169.7 572.9 174.3M572.8 168.6 574 173.1M574.1 167.6 575.2 172.1M575.4 166.7 576.4 171.1M576.8 165.8 577.7 170.2M578.3 165.1 579 169.4M579.7 164.4 580.4 168.7M581.3 163.8 581.8 168.1M582.8 163.2 583.3 167.5M584.4 162.8 584.7 167M586 162.4 586.3 166.7M587.6 162.1 587.8 166.3M589.2 161.9 589.3 166.1M590.8 161.7 590.9 165.9M592.4 161.6 592.4 165.8M594.1 161.6 594 165.8M595.7 161.6 595.5 165.8M597.3 161.7 597.1 165.9M599 161.8 598.6 166M600.6 162 600.2 166.2M602.2 162.2 601.7 166.4M603.8 162.5 603.3 166.7M605.4 162.9 604.8 167M607 163.2 606.3 167.4M608.6 163.7 607.8 167.8M610.1 164.2 609.3 168.3M611.7 164.7 610.7 168.9M613.2 165.3 612.2 169.5M614.7 166 613.6 170.1M616.2 166.7 615 170.8M617.6 167.4 616.4 171.5M619 168.2 617.7 172.3M620.4 169 619 173.1M621.8 169.9 620.3 174M623.1 170.9 621.5 175M624.4 171.9 622.7 176.1M625.6 173 623.8 177.1M626.7 174.2 624.9 178.3M627.9 175.3 626 179.4M629 176.5 627 180.5M630.1 177.7 628.1 181.7M631.3 178.9 629.1 182.8M632.4 180.1 630.2 184M633.4 181.3 631.2 185.2M634.5 182.6 632.1 186.4M635.5 183.9 633.1 187.6M636.5 185.2 634 188.9M637.4 186.5 634.9 190.2M638.4 187.8 635.8 191.5M639.3 189.2 636.6 192.8M640.2 190.6 637.5 194.1M641.1 191.9 638.3 195.4M641.9 193.3 639.1 196.8M642.8 194.7 639.9 198.1M643.6 196.1 640.6 199.5M644.4 197.6 641.3 200.9M645.1 199 642 202.3M645.8 200.5 642.7 203.7M646.5 202 643.3 205.1M647.1 203.5 643.8 206.6M647.7 205 644.3 208.1M648.3 206.5 644.8 209.5M648.8 208.1 645.3 211M649.2 209.7 645.7 212.5M649.7 211.2 646.1 214M650.1 212.8 646.5 215.5M650.5 214.4 646.8 217.1M650.9 216 647.2 218.6M651.3 217.6 647.5 220.1M651.6 219.2 647.9 221.6M652 220.8 648.1 223.2M652.3 222.4 648.4 224.7M652.5 224 648.7 226.2M652.8 225.6 648.9 227.8M653.1 227.2 649.1 229.3M653.3 228.8 649.4 230.9M653.5 230.4 649.6 232.4M653.8 232 649.9 233.9M654.1 233.7 650.1 235.5M654.4 235.3 650.4 237M654.7 236.9 650.8 238.5M655.1 238.4 651.1 240M655.5 240 651.5 241.5M655.9 241.6 652 243M656.3 243.2 652.4 244.6M656.8 244.7 652.8 246.1M657.2 246.3 653.2 247.6M657.6 247.9 653.5 249.1M657.9 249.5 653.8 250.6M658.2 251.1 654.1 252.1M658.4 252.7 654.3 253.7M658.7 254.4 654.6 255.2M658.9 256 654.8 256.8M659.1 257.6 655 258.3M659.2 259.2 655.1 259.9M659.4 260.8 655.2 261.4M659.4 262.5 655.3 263M659.5 264.1 655.3 264.6M659.5 265.7 655.3 266.1M659.4 267.4 655.2 267.7M659.3 269 655.1 269.2M659.2 270.6 655 270.8M659.1 272.3 654.8 272.3M658.9 273.9 654.7 273.9M658.7 275.5 654.5 275.4M658.5 277.1 654.3 277M658.4 278.8 654.2 278.5M658.2 280.4 654 280.1M658 282 653.8 281.6" fill="none" stroke="#2b2b2b" stroke-width="0.51"/>
<path d="M586 312 575.7 275.2 574.7 272.6 562.9 224.9 560.6 211.5 560 203.3 560.1 197.9 560.7 192.4 561.8 187.1 563.4 181.9 565.8 176.9 568.9 172.5 572.8 168.6 574.9 167 577.3 165.5 579.7 164.4 584.9 162.6 590.3 161.7 595.7 161.6 601.2 162.1 606.5 163.1 611.8 164.7 616.8 166.9 621.5 169.7 625.7 173.1 633.2 181.1 638.2 187.6 644 196.8 646.4 201.7 649.2 209.4 651.8 220 654.5 236.2 657.9 249.4 659.3 260.2 659.5 265.7 658 282M590 310.9 579.5 273.2 578.6 270.8 566.7 222.7 564.6 209.8 564.2 202 564.4 196.8 565.7 189.1 567.1 184.1 569.2 179.3 570.6 177.1 572.2 175.1 574 173.2 575.9 171.4 578.1 169.9 580.4 168.7 585.2 166.9 590.4 165.9 595.6 165.8 600.8 166.3 605.9 167.3 610.8 168.9 615.6 171 620 173.8 623.9 177.2 631 184.9 637 193.4 641 200.1 643.2 204.9 645.6 212.3 648 222.4 650.6 237.9 653.8 250.5 655.2 260.8 655.3 266.1 653.8 281.6" fill="none" stroke="#1a1a1a" stroke-width="1.12"/>
<g transform="translate(641.5,197) rotate(60)"><rect x="-9" y="-0.500" width="18" height="5.500" fill="#555" stroke="#111" stroke-width="1.200"/></g>
<path d="M590.1 383.1 584.3 397.5 580.9 409.6 579.6 419.4 579.8 427 581.2 434.7 583 440.5 585.9 446.3 590 452.3 595.1 458.1 602.8 465.4 609.5 470.4 614.5 473.5 623.1 477.6 635.3 482.2 647.5 485.5 656.5 487 664.8 487.7 672.3 487.5 679.5 486.3 687 484.1 694.4 480.9 700.9 477.2 706.3 472.9 711 468.1 714.7 462.8 717.7 457 719.9 450.6 721.4 443.5 722.6 431 722.4 420.8 721.3 411.5 717.3 397.8M591.9 384.3 587 396.8 584 408.8 583 418.5 583.3 425.6 585.2 434.6 587.2 440 590.2 445.6 595.8 453.3 602.6 460.5 608.4 465.5 615.1 470.2 622.9 474.4 631.7 478.1 640.6 481.1 649.6 483.3 658.5 484.8 666.6 485.3 674 484.9 681.1 483.7 688.3 481.4 695.3 478.2 701.4 474.5 706.4 470.2 710.7 465.4 714.1 460.2 716.8 454.5 718.7 448.2 720.1 441.3 721 429.2 720.4 417.1 719 408.6 715.4 397.5M593.7 385.4 589.1 398.1 586.9 408.1 586.2 417.7 586.7 424.4 588.8 432.7 591.5 439.6 595.8 446.7 601.5 454 608.2 460.8 614 465.5 620.6 469.8 628.5 473.8 637.1 477.2 645.7 479.8 654.6 481.7 663.2 482.7 670.9 482.8 678.1 482 685 480.3 691.9 477.7 698.2 474.3 701.9 471.8 706.5 467.6 710.4 462.8 713.5 457.6 715.9 451.9 718 443.7 719.2 434.4 719.4 425.1 717.9 411.6 716.6 405.9 713.5 397.2M595.6 386.6 591.1 399.3 589.7 407.3 589.3 417.1 590 423.5 592.8 432.7 596.7 440.7 602.7 449.4 608.7 456.2 615.5 462.4 621.4 466.6 628.6 470.6 636.7 474.2 645.1 477 653.7 479 662.4 480.2 670.3 480.5 677.5 479.8 684.4 478.3 690.9 476 697.1 472.8 702.4 469.2 706.6 464.9 710.1 460.1 712.9 455 714.9 449.4 716.8 441.4 717.7 432.4 717.7 423.4 716.1 410.6 714.1 403.4 711.7 396.9M597.4 387.7 593.7 398.5 592.5 404.5 592.1 414.6 592.8 421.4 595.5 429.8 600 438.6 608.2 450.1 615.7 458 620.7 462.2 626.7 466.1 636.6 471.1 644.7 474.2 653 476.3 661.5 477.7 669.6 478.2 677 477.6 683.8 476.3 690.2 474.2 696.1 471.3 701.3 467.8 704.2 465.1 707.8 460.6 711.5 454.1 714 446.9 715.6 439.1 716.3 428.1 715.9 419.6 713.8 407.9 709.8 396.6M599.2 388.9 595.7 399.7 594.9 403.9 594.6 411.9 595.3 419.4 596.9 424.9 601.6 434 612.4 449.1 619.4 456.5 624.1 460.5 629.7 464.3 639.2 469.2 647 472.2 655.1 474.2 663.5 475.5 671.5 475.8 678.7 475.1 685.5 473.6 691.6 471.4 697.2 468.6 702 465.1 704.6 462.4 707.7 458 711 451.4 713.1 444.4 714.6 434.7 714.7 424.1 713.6 414.1 711.4 405.4 707.9 396.3M588.3 382 601 390M587.6 383.6 600.5 391.7M586.6 385.8 599.7 394.1M585.4 388.3 598.8 396.8M584.2 391.1 598 399.8M583 393.9 597.3 402.8M582 396.6 597 405.5M581 399.3 596.9 408.2M580 402.1 597 411M579.1 404.9 597.2 413.8M578.3 407.7 597.6 416.5M577.5 410.5 598 418.9M577 413.3 598.5 421.1M576.6 416.1 599.1 423M576.3 418.9 599.9 424.7M576.1 421.6 600.7 426.2M576 424.4 601.6 427.8M576.1 427.2 602.6 429.3M576.4 430 603.6 431M576.7 432.8 604.8 432.7M577.2 435.6 606 434.4M577.9 438.4 607.3 436.1M578.8 441.2 608.7 437.8M580 443.9 610.1 439.6M581.4 446.7 611.6 441.6M583.2 449.6 613.1 443.6M585.2 452.4 614.8 445.8M587.4 455.2 616.4 447.9M589.8 457.9 618.2 450M592.3 460.6 620 452M595 463.2 621.8 453.9M597.9 465.8 623.7 455.6M600.9 468.3 625.6 457.4M604.1 470.7 627.7 459.1M607.6 473 630 460.7M611.1 475.1 632.5 462.3M615 477.1 635.4 464M619.1 479 638.5 465.6M623.4 480.8 641.8 467.2M627.8 482.4 645.2 468.7M632.1 483.9 648.6 469.9M636.3 485.2 652.1 471M640.5 486.4 655.7 471.8M644.8 487.5 659.5 472.5M649.1 488.4 663.3 473M653.2 489.1 667 473.4M657.2 489.6 670.6 473.5M661 490 674 473.4M664.6 490.2 677.3 473.1M668.1 490.2 680.6 472.6M671.5 490 683.7 471.9M674.8 489.6 686.6 471.1M678.2 488.9 689.5 470.2M681.7 488.1 692.1 469.2M685.3 486.9 694.6 468M689 485.6 697 466.7M692.5 484.1 699.1 465.2M695.9 482.4 701.2 463.7M699 480.7 703 462M701.8 478.9 704.6 460.2M704.5 477 706 458.2M707 474.9 707.2 456.2M709.4 472.8 708.3 454M711.5 470.5 709.3 451.8M713.5 468.1 710.2 449.5M715.2 465.6 710.9 447.3M716.8 463 711.6 444.9M718.2 460.2 712.1 442.5M719.5 457.3 712.5 440.1M720.6 454.3 712.8 437.5M721.6 451.2 713.1 434.9M722.4 447.9 713.3 432.2M723 444.5 713.4 429.4M723.5 440.9 713.4 426.6M723.9 437.3 713.3 423.8M724.1 433.8 713.1 421.1M724.3 430.3 712.8 418.4M724.3 426.7 712.4 415.9M724.2 423 711.9 413.4M724 419.4 711.3 410.9M723.7 416 710.7 408.6M723.3 412.8 710.1 406.4M722.8 409.8 709.5 404.3M722 406.9 708.7 402.3M721.2 404.2 707.9 400.3M720.4 401.7 707.1 398.6M719.7 399.7 706.5 397.1M719.2 398.1 706 396" fill="none" stroke="#2b2b2b" stroke-width="0.55"/>
<path d="M588.3 382 580 402.2 577.6 410.4 576.3 418.6 576 424.6 576.7 432.8 578 438.9 579.5 443 581.6 447.1 585.8 453.3 591 459.3 599.2 466.9 606.3 472.2 611.5 475.3 620.3 479.5 633 484.2 645.4 487.6 654.6 489.3 662.9 490.1 670.5 490 677.9 489 685.7 486.8 693.5 483.6 700.4 479.8 706.3 475.6 711.3 470.8 714.1 467.3 717.6 461.5 720.3 455.2 722.3 448.2 723.8 437.9 724.3 427.5 723.5 414.6 722.3 408 719.2 398.1M601 390 597.7 401 597 405.1 597 411.1 598 418.9 599.2 423.3 604.8 432.7 617.8 449.6 626 457.7 630.9 461.3 639.4 466.1 646.8 469.3 651.9 470.9 660 472.6 668.2 473.4 673.3 473.5 680.5 472.6 687.2 471 693 468.7 698.2 465.9 702.6 462.4 704.9 459.8 707.7 455.3 710.4 448.8 712.2 441.9 713.3 432.5 713.2 422.2 711.8 412.8 709 403.1 706 396" fill="none" stroke="#1a1a1a" stroke-width="0.64"/>
<clipPath id="c5"><path d="M601 390 598.6 397.5 597.6 401.2 597 405.1 596.9 409 597.1 412.9 597.6 416.8 598.4 420.6 599.7 424.3 603.7 431 615.4 446.7 617.9 449.7 623.3 455.3 626.3 457.9 629.4 460.3 636.1 464.3 643.1 467.8 646.7 469.3 650.4 470.5 658 472.3 665.8 473.3 669.7 473.5 673.6 473.4 677.5 473.1 681.3 472.5 685.1 471.6 688.9 470.4 692.5 469 696 467.2 699.3 465.1 702.3 462.6 705 459.7 707.1 456.5 708.8 452.9 710.3 449.3 711.4 445.6 712.2 441.7 713.2 434 713.4 426.2 712.8 418.4 711.3 410.7 709.1 403.2 706 396 716 390 690 384 640 384 601 390ZM632.6 446.5 633.5 439.8 634.7 436.6 636.8 434 642 429.7 644.8 427.8 647.8 426.1 650.8 424.7 657.2 422.5 663.8 420.8 667.2 420.2 670.5 419.9 673.9 419.9 677.3 420.1 680.7 420.6 684 421.4 687.2 422.5 690.2 423.9 693.1 425.7 695.8 427.7 698.3 430 700.5 432.6 702.3 435.5 703.7 438.6 705.9 445 706.8 448.2 707.4 451.6 707 454.9 705.1 457.8 702.6 460.1 699.9 462 697 463.8 693.9 465.2 687.4 467.1 680.7 468.2 670.6 468.7 657 468.3 653.6 468 650.3 467.2 644.1 464.6 641 463.2 638.1 461.4 635.4 459.4 633.5 456.6 632.8 453.3 632.6 446.5Z" clip-rule="evenodd"/></clipPath><path clip-path="url(#c5)" d="M637.7 322.2 763 410M636.3 324.1 761.7 411.8M635 326 760.3 413.7M633.7 327.9 759 415.6M632.4 329.7 757.7 417.5M631.1 331.6 756.4 419.4M629.7 333.5 755.1 421.3M628.4 335.4 753.7 423.1M627.1 337.3 752.4 425M625.8 339.2 751.1 426.9M624.5 341 749.8 428.8M623.1 342.9 748.5 430.7M621.8 344.8 747.1 432.6M620.5 346.7 745.8 434.5M619.2 348.6 744.5 436.3M617.9 350.5 743.2 438.2M616.5 352.3 741.9 440.1M615.2 354.2 740.5 442M613.9 356.1 739.2 443.9M612.6 358 737.9 445.8M611.3 359.9 736.6 447.6M609.9 361.8 735.3 449.5M608.6 363.7 734 451.4M607.3 365.5 732.6 453.3M606 367.4 731.3 455.2M604.7 369.3 730 457.1M603.4 371.2 728.7 458.9M602 373.1 727.4 460.8M600.7 375 726 462.7M599.4 376.8 724.7 464.6M598.1 378.7 723.4 466.5M596.8 380.6 722.1 468.4M595.4 382.5 720.8 470.2M594.1 384.4 719.4 472.1M592.8 386.3 718.1 474M591.5 388.1 716.8 475.9M590.2 390 715.5 477.8M588.8 391.9 714.2 479.7M587.5 393.8 712.8 481.6M586.2 395.7 711.5 483.4M584.9 397.6 710.2 485.3M583.6 399.5 708.9 487.2M582.2 401.3 707.6 489.1M580.9 403.2 706.2 491M579.6 405.1 704.9 492.9M578.3 407 703.6 494.7M577 408.9 702.3 496.6M575.6 410.8 701 498.5M574.3 412.6 699.7 500.4M573 414.5 698.3 502.3M571.7 416.4 697 504.2M570.4 418.3 695.7 506M569.1 420.2 694.4 507.9M567.7 422.1 693.1 509.8M566.4 423.9 691.7 511.7M565.1 425.8 690.4 513.6M563.8 427.7 689.1 515.5M562.5 429.6 687.8 517.3M561.1 431.5 686.5 519.2M559.8 433.4 685.1 521.1M558.5 435.2 683.8 523M557.2 437.1 682.5 524.9M555.9 439 681.2 526.8M554.5 440.9 679.9 528.7M553.2 442.8 678.5 530.5M551.9 444.7 677.2 532.4M550.6 446.6 675.9 534.3M548.7 438.2 647 321M550.4 439.7 648.8 322.5M552.2 441.1 650.5 323.9M554 442.6 652.3 325.4M555.7 444.1 654.1 326.9M557.5 445.6 655.8 328.4M559.2 447 657.6 329.8M561 448.5 659.3 331.3M562.8 450 661.1 332.8M564.5 451.5 662.9 334.3M566.3 453 664.6 335.8M568 454.4 666.4 337.2M569.8 455.9 668.2 338.7M571.6 457.4 669.9 340.2M573.3 458.9 671.7 341.7M575.1 460.3 673.4 343.1M576.9 461.8 675.2 344.6M578.6 463.3 677 346.1M580.4 464.8 678.7 347.6M582.1 466.3 680.5 349.1M583.9 467.7 682.2 350.5M585.7 469.2 684 352M587.4 470.7 685.8 353.5M589.2 472.2 687.5 355M591 473.7 689.3 356.5M592.7 475.1 691.1 357.9M594.5 476.6 692.8 359.4M596.2 478.1 694.6 360.9M598 479.6 696.3 362.4M599.8 481 698.1 363.8M601.5 482.5 699.9 365.3M603.3 484 701.6 366.8M605 485.5 703.4 368.3M606.8 487 705.2 369.8M608.6 488.4 706.9 371.2M610.3 489.9 708.7 372.7M612.1 491.4 710.4 374.2M613.9 492.9 712.2 375.7M615.6 494.4 714 377.2M617.4 495.8 715.7 378.6M619.1 497.3 717.5 380.1M620.9 498.8 719.2 381.6M622.7 500.3 721 383.1M624.4 501.7 722.8 384.5M626.2 503.2 724.5 386M628 504.7 726.3 387.5M629.7 506.2 728.1 389M631.5 507.7 729.8 390.5M633.2 509.1 731.6 391.9M635 510.6 733.3 393.4M636.8 512.1 735.1 394.9M638.5 513.6 736.9 396.4M640.3 515 738.6 397.9M642 516.5 740.4 399.3M643.8 518 742.2 400.8M645.6 519.5 743.9 402.3M647.3 521 745.7 403.8M649.1 522.4 747.4 405.2M650.9 523.9 749.2 406.7M652.6 525.4 751 408.2M654.4 526.9 752.7 409.7M656.1 528.4 754.5 411.2M657.9 529.8 756.2 412.6M659.7 531.3 758 414.1M661.4 532.8 759.8 415.6M663.2 534.3 761.5 417.1M665 535.7 763.3 418.5" fill="none" stroke="#2b2b2b" stroke-width="0.38"/>
<clipPath id="c6"><path d="M601 390 597 405 598.3 420.3 603 430 610.4 440 620 452 632 462 634.6 458.5 632.6 446.5 634 438 628 420 624 404 626 388Z" clip-rule="evenodd"/></clipPath><path clip-path="url(#c6)" d="M651.1 374.6 666.2 460.3M648.5 375.1 663.6 460.7M646 375.5 661.1 461.2M643.4 376 658.5 461.6M640.8 376.4 656 462.1M638.3 376.9 653.4 462.5M635.7 377.3 650.8 463M633.2 377.8 648.3 463.4M630.6 378.2 645.7 463.9M628 378.7 643.2 464.4M625.5 379.1 640.6 464.8M622.9 379.6 638 465.3M620.4 380 635.5 465.7M617.8 380.5 632.9 466.2M615.2 380.9 630.3 466.6M612.7 381.4 627.8 467.1M610.1 381.8 625.2 467.5M607.6 382.3 622.7 468M605 382.7 620.1 468.4M602.4 383.2 617.5 468.9M599.9 383.6 615 469.3M597.3 384.1 612.4 469.8M594.8 384.5 609.9 470.2M592.2 385 607.3 470.7M589.6 385.4 604.7 471.1M587.1 385.9 602.2 471.6M584.5 386.3 599.6 472M582 386.8 597.1 472.5M579.4 387.2 594.5 472.9M576.8 387.7 591.9 473.4M574.3 388.1 589.4 473.8M571.7 388.6 586.8 474.3M569.2 389.1 584.3 474.7M566.6 389.5 581.7 475.2" fill="none" stroke="#2b2b2b" stroke-width="0.49"/>
<path d="M632.6 446.5 633.4 442 634.4 439.8 636.6 437.5 644.5 432.2 649 429.9 654.5 428.1 663.8 426 669.3 425.4 676.6 425.5 683.3 426.6 687.4 427.7 691.3 429.3 695 431.4 698.3 433.9 701 436.7 703 439.9 705.3 445.1 707.1 454.5M632.6 446.5 633.4 443.7 634.5 442.2 644.5 436.4 648.9 434.5 657.1 432.3 665.9 431 673.6 430.8 680.6 431.4 687 432.7 692.9 434.8 696.5 436.6 699.6 438.7 702 441.1 704.5 445.3 705.7 448.5 707.1 454.5M632.6 446.5 633.9 445 646.6 439.8 653.8 437.9 662.4 436.6 670.3 436.2 680.1 436.7 688.7 438.2 696.3 440.6 699.5 442.1 701.9 444 705 448.5 707.1 454.5M632.6 446.5 633.5 447 638.5 446.5 648.7 443.6 661.7 441.9 674.7 441.7 692.3 443.7 697.9 445 700.7 446.2 703.5 448.5 705.5 451.1 707.1 454.5M632.6 446.5 633.6 448.7 634.1 449.2 635.5 449.7 640.1 449.7 650.8 448 666.2 447 697.7 448.7 700.6 449.3 704.8 451.9 707.1 454.5M632.6 446.5 633.6 450.4 634.1 451.4 634.8 452 636.7 452.7 641.8 453.2 700.5 452.5 707.1 454.5M632.6 446.5 633.6 452.1 634.2 453.5 634.9 454.4 636.9 455.6 642 456.9 682.7 457.8 689.4 457.4 707.1 454.5M632.6 446.5 633.7 453.8 634.2 455.6 635 456.9 635.9 457.8 638.3 459.1 643.6 461 654.3 462.7 672.2 463.3 684.6 462.7 689.1 462.1 703 457.8 707.1 454.5M632.6 446.5 632.6 446.5M632.8 444.3 632.9 449.8M633.2 441.2 633.5 454.2M633.9 438.3 634.5 458.1M634.9 436.2 636.1 460.5M636.2 434.6 638.2 462M638.1 432.8 640.5 463.2M640.9 430.6 642.8 464.4M644.4 428.1 645.1 465.5M648.5 425.7 647.7 466.3M653.3 423.7 650.8 467.1M658.9 422 654.3 467.8M664.5 420.7 658.2 468.3M669.4 420 662.5 468.6M673.8 419.9 667.3 468.8M677.8 420.2 672.3 468.7M681.7 420.8 676.9 468.5M685.4 421.8 681.2 468.1M688.8 423.2 685.4 467.5M692.1 425 689.3 466.6M695.2 427.2 693.2 465.3M698.1 429.8 696.7 463.7M700.5 432.7 699.5 462.3M702.4 435.8 701.5 461.2M704 439.2 702.9 460.1M705.2 442.8 704.1 458.8M706.1 447.1 705.4 457.3M706.7 451.4 706.4 455.7M707.1 454.5 707.1 454.5" fill="none" stroke="#2b2b2b" stroke-width="0.41"/>
<path d="M632.6 446.5 633.4 440.3 634.3 437.3 635.6 435.3 640.4 431 644.4 428.1 649.1 425.4 654.9 423.2 661.4 421.4 667.4 420.2 672.6 419.9 677.3 420.1 683.8 421.3 687.9 422.7 691.6 424.7 695.2 427.2 698.4 430.2 701.1 433.5 703.1 437.2 705.4 443.4 707.1 454.5M632.6 446.5 633.7 455.5 634.3 457.7 635.1 459.3 636.1 460.5 638.5 462.2 645.1 465.5 651.8 467.3 658.2 468.3 668.8 468.8 681.8 468.1 686.5 467.3 691 466.1 700.2 462 703.6 459.4 707.1 454.5" fill="none" stroke="#1a1a1a" stroke-width="1.20"/>
<clipPath id="c7"><path d="M588.3 382 587 390 634 390 626 386 601 390Z" clip-rule="evenodd"/></clipPath><path clip-path="url(#c7)" d="M601 350.7 645.8 376.5M599.9 352.6 644.7 378.4M598.8 354.5 643.6 380.4M597.7 356.4 642.5 382.3M596.6 358.3 641.4 384.2M595.5 360.2 640.3 386.1M594.4 362.1 639.2 388M593.3 364 638.1 389.9M592.2 365.9 637 391.8M591.1 367.9 635.9 393.7M590 369.8 634.8 395.6M588.9 371.7 633.7 397.5M587.8 373.6 632.6 399.4M586.7 375.5 631.5 401.3M585.6 377.4 630.4 403.2M584.5 379.3 629.3 405.1M583.4 381.2 628.2 407M582.3 383.1 627.1 408.9M581.2 385 626 410.8M580.1 386.9 624.9 412.7M579 388.8 623.8 414.6M577.9 390.7 622.7 416.6M576.8 392.6 621.6 418.5M575.7 394.5 620.5 420.4M574.1 382.8 613.7 349.6M575.5 384.5 615.1 351.3M576.9 386.2 616.5 353M578.3 387.9 617.9 354.7M579.8 389.6 619.3 356.3M581.2 391.2 620.8 358M582.6 392.9 622.2 359.7M584 394.6 623.6 361.4M585.4 396.3 625 363.1M586.8 398 626.4 364.8M588.2 399.7 627.8 366.5M589.7 401.4 629.2 368.1M591.1 403 630.7 369.8M592.5 404.7 632.1 371.5M593.9 406.4 633.5 373.2M595.3 408.1 634.9 374.9M596.7 409.8 636.3 376.6M598.1 411.5 637.7 378.2M599.6 413.2 639.1 379.9M601 414.8 640.6 381.6M602.4 416.5 642 383.3M603.8 418.2 643.4 385M605.2 419.9 644.8 386.7M606.6 421.6 646.2 388.4" fill="none" stroke="#2b2b2b" stroke-width="0.39"/>
<path d="M622 392 623.7 385.6 625 382.5 627.1 379.9 629.8 378 632.9 376.8 636.1 376 639.4 375.8 646 376.3 652.6 377.7 655.7 378.8 658.7 380.3 661.5 382.1 666.3 386.6 669.4 386.4 671.6 383.9 673.7 381.3 676 379 681.7 375.5 684.7 374.1 687.9 373 691.2 372.5 694.5 372.4 697.8 372.9 701 373.9 704 375.3 706.8 377 712.1 381.1 716.9 385.6 719.2 388.1 721.2 390.7 722.6 393.7 722.1 396.9 720.5 399.8 718.6 402.6 716.4 405 713.8 407.1 711 409 708.1 410.6 705.1 412 701.9 413 698.7 413.7 695.4 414 688.7 414 685.4 413.7 682.2 413 675.8 410.9 673.1 409.1 670.5 407 667.5 406.2 665.3 408.6 663.5 411.4 661.1 413.7 655.7 417.6 652.8 419.2 649.7 420.3 646.4 421 643.1 421.2 639.8 420.8 636.7 419.7 633.7 418.1 631.1 416.1 628.7 413.7 626.7 411.1 625 408.2 623.7 405.2 623 401.9 622 392Z" fill="#444" opacity="0.55"/>
<clipPath id="c8"><path d="M622 392 623.7 385.6 625 382.5 627.1 379.9 629.8 378 632.9 376.8 636.1 376 639.4 375.8 646 376.3 652.6 377.7 655.7 378.8 658.7 380.3 661.5 382.1 666.3 386.6 669.4 386.4 671.6 383.9 673.7 381.3 676 379 681.7 375.5 684.7 374.1 687.9 373 691.2 372.5 694.5 372.4 697.8 372.9 701 373.9 704 375.3 706.8 377 712.1 381.1 716.9 385.6 719.2 388.1 721.2 390.7 722.6 393.7 722.1 396.9 720.5 399.8 718.6 402.6 716.4 405 713.8 407.1 711 409 708.1 410.6 705.1 412 701.9 413 698.7 413.7 695.4 414 688.7 414 685.4 413.7 682.2 413 675.8 410.9 673.1 409.1 670.5 407 667.5 406.2 665.3 408.6 663.5 411.4 661.1 413.7 655.7 417.6 652.8 419.2 649.7 420.3 646.4 421 643.1 421.2 639.8 420.8 636.7 419.7 633.7 418.1 631.1 416.1 628.7 413.7 626.7 411.1 625 408.2 623.7 405.2 623 401.9 622 392Z" clip-rule="evenodd"/></clipPath><path clip-path="url(#c8)" d="M644.3 319.9 749.3 368.8M643.7 321.2 748.6 370.2M643 322.6 748 371.5M642.4 323.9 747.3 372.9M641.8 325.3 746.7 374.2M641.1 326.7 746.1 375.6M640.5 328 745.4 377M639.9 329.4 744.8 378.3M639.2 330.7 744.2 379.7M638.6 332.1 743.5 381M638 333.5 742.9 382.4M637.3 334.8 742.3 383.8M636.7 336.2 741.6 385.1M636.1 337.5 741 386.5M635.4 338.9 740.4 387.8M634.8 340.3 739.7 389.2M634.2 341.6 739.1 390.6M633.5 343 738.5 391.9M632.9 344.3 737.8 393.3M632.3 345.7 737.2 394.6M631.6 347.1 736.6 396M631 348.4 735.9 397.4M630.4 349.8 735.3 398.7M629.7 351.1 734.7 400.1M629.1 352.5 734 401.4M628.4 353.9 733.4 402.8M627.8 355.2 732.8 404.2M627.2 356.6 732.1 405.5M626.5 357.9 731.5 406.9M625.9 359.3 730.9 408.2M625.3 360.6 730.2 409.6M624.6 362 729.6 410.9M624 363.4 729 412.3M623.4 364.7 728.3 413.7M622.7 366.1 727.7 415M622.1 367.4 727.1 416.4M621.5 368.8 726.4 417.7M620.8 370.2 725.8 419.1M620.2 371.5 725.2 420.5M619.6 372.9 724.5 421.8M618.9 374.2 723.9 423.2M618.3 375.6 723.3 424.5M617.7 377 722.6 425.9M617 378.3 722 427.3M616.4 379.7 721.4 428.6M615.8 381 720.7 430M615.1 382.4 720.1 431.3M614.5 383.8 719.5 432.7M613.9 385.1 718.8 434.1M613.2 386.5 718.2 435.4M612.6 387.8 717.6 436.8M612 389.2 716.9 438.1M611.3 390.6 716.3 439.5M610.7 391.9 715.7 440.9M610.1 393.3 715 442.2M609.4 394.6 714.4 443.6M608.8 396 713.8 444.9M608.2 397.4 713.1 446.3M607.5 398.7 712.5 447.7M606.9 400.1 711.8 449M606.3 401.4 711.2 450.4M605.6 402.8 710.6 451.7M605 404.2 709.9 453.1M604.4 405.5 709.3 454.5M603.7 406.9 708.7 455.8M603.1 408.2 708 457.2M602.5 409.6 707.4 458.5M601.8 410.9 706.8 459.9M601.2 412.3 706.1 461.2M600.6 413.7 705.5 462.6M599.9 415 704.9 464M599.3 416.4 704.2 465.3M598.7 417.7 703.6 466.7M598 419.1 703 468M597.4 420.5 702.3 469.4M596.8 421.8 701.7 470.8M596.1 423.2 701.1 472.1M595.5 424.5 700.4 473.5M591.7 411 658.1 316.2M592.9 411.9 659.3 317M594.1 412.8 660.5 317.9M595.3 413.6 661.8 318.8M596.6 414.5 663 319.6M597.8 415.3 664.2 320.5M599 416.2 665.5 321.3M600.3 417.1 666.7 322.2M601.5 417.9 667.9 323.1M602.7 418.8 669.1 323.9M604 419.6 670.4 324.8M605.2 420.5 671.6 325.6M606.4 421.4 672.8 326.5M607.6 422.2 674.1 327.4M608.9 423.1 675.3 328.2M610.1 423.9 676.5 329.1M611.3 424.8 677.7 329.9M612.6 425.7 679 330.8M613.8 426.5 680.2 331.7M615 427.4 681.4 332.5M616.2 428.2 682.7 333.4M617.5 429.1 683.9 334.2M618.7 430 685.1 335.1M619.9 430.8 686.3 336M621.2 431.7 687.6 336.8M622.4 432.5 688.8 337.7M623.6 433.4 690 338.5M624.8 434.3 691.3 339.4M626.1 435.1 692.5 340.3M627.3 436 693.7 341.1M628.5 436.8 694.9 342M629.8 437.7 696.2 342.8M631 438.6 697.4 343.7M632.2 439.4 698.6 344.6M633.4 440.3 699.9 345.4M634.7 441.1 701.1 346.3M635.9 442 702.3 347.1M637.1 442.9 703.5 348M638.4 443.7 704.8 348.9M639.6 444.6 706 349.7M640.8 445.4 707.2 350.6M642 446.3 708.5 351.4M643.3 447.2 709.7 352.3M644.5 448 710.9 353.2M645.7 448.9 712.1 354M647 449.7 713.4 354.9M648.2 450.6 714.6 355.7M649.4 451.5 715.8 356.6M650.6 452.3 717.1 357.5M651.9 453.2 718.3 358.3M653.1 454 719.5 359.2M654.3 454.9 720.8 360M655.6 455.8 722 360.9M656.8 456.6 723.2 361.8M658 457.5 724.4 362.6M659.2 458.4 725.7 363.5M660.5 459.2 726.9 364.4M661.7 460.1 728.1 365.2M662.9 460.9 729.4 366.1M664.2 461.8 730.6 366.9M665.4 462.7 731.8 367.8M666.6 463.5 733 368.7M667.8 464.4 734.3 369.5M669.1 465.2 735.5 370.4M670.3 466.1 736.7 371.2M671.5 467 738 372.1M672.8 467.8 739.2 373M674 468.7 740.4 373.8M675.2 469.5 741.6 374.7M676.4 470.4 742.9 375.5M677.7 471.3 744.1 376.4M678.9 472.1 745.3 377.3M680.1 473 746.6 378.1M681.4 473.8 747.8 379M682.6 474.7 749 379.8M683.8 475.6 750.2 380.7M685 476.4 751.5 381.6M686.3 477.3 752.7 382.4" fill="none" stroke="#111" stroke-width="0.53"/>
<path d="M626 390 633 385.2 636.7 383.1 640.7 381.9 645 381.9 649.1 382.7 653.1 384.1 656.8 386.1 659.9 389 662.8 392.1 666 395 669.4 397.4 673.1 399.6 677.1 400.9 681.3 400.9 685.5 400 689.5 398.8 693.4 397.2 697.3 395.5 712 387M628 403 634.5 407.5 637.9 409.5 641.6 410.9 645.6 411.2 649.5 410.6 653.2 409.3 656.7 407.6 659.8 405 673.1 390.4 676.2 387.9 679.4 385.7 682.9 383.7 686.5 382 690.3 381 694.2 380.7 706 382M634 378 639.5 384.2 642.2 387.4 644.5 390.8 646.6 394.4 648.4 398.1 649.7 402.1 649.9 406.2 648.9 410.2 646 418M690 376 694.4 381.9 696.5 385 698.1 388.3 699.2 391.8 699.9 395.4 700.2 399 699.8 402.7 698.3 406.1 694 412M622 392 626.8 396.1 629.5 397.8 632.5 398.9 635.6 399.6 638.8 400 642 400 645.1 399.4 654 396" fill="none" stroke="#0a0a0a" stroke-width="1.80" opacity="0.80"/>
<path d="M652.4 408.6 650.1 405.5 650.9 401.8 652.9 398.5 657.6 392.2 660.5 389.8 662.7 392.7 663.5 396.5 661.8 399.4 658 399.1 655.1 397.5M650.2 390.4 648.4 391.7 646.8 393.2 649 392.9 653.4 391.7 655.1 391.4 650 393.4M658.6 403.3 648.2 403.1 646.6 403.8 648 405.3 651.5 407.6 653.4 407.8 655.1 406.6M649.5 402.6 646.7 400.4 645.4 400 652.3 401.1M654.8 399.1 657.4 399.2 654.2 397.5 654.8 395 657.2 390.2 658.4 388.8 656.9 393.9 655.7 395.9 654.9 393.4M648.8 399.3 647.5 399.1 647.5 399.3 650.4 400.6M654.1 397.9 650.4 402.1 649.6 402.8 648.5 402.9 646.6 401.8 645.9 402.4 645.8 403.5M639.1 403.5 645.7 403.6 647.1 403.1 642.1 401.2 650.7 403.5M652.9 402.9 649.2 405.1 649.6 405.6 652.4 406.2M641.5 402.6 648.7 401.7 648.9 400.9 644.6 398.7M651.9 387.6 649.2 389.1 648.6 391.7 650.5 394.1 654.9 398.3 657.5 399.7 658.2 396.9 657.7 390.8 657.7 389.1 658.1 392.1M638.1 397.8 644 390.1 646.2 387.7 648.6 387.8 649.2 391 648.5 393.4 646.1 391.2 646 389.4 652.4 390.5M648.3 393.8 651.8 397.1 652.3 398 647.8 396.6 648.4 396.1 649.5 395.8M651.8 399.3 653 399 653.6 399.4 650.1 403.1 651.1 403 655.8 400.8M646.6 409.8 655.1 406.5 652.4 406.8 648 407.9 645 406.8 647.8 403.3 654.2 396.7 654.8 397.3 649.8 404.9M654.2 401.8 651.2 395.2 650.5 392.8 652.1 391.3 654.4 391.6 653.2 393.7 653.2 395 655.3 394.9 655.6 399.7M638.3 398.9 645.5 393.9 645.2 395.2 643.5 395.4 637 392.7M646.9 402.8 649.7 402.2 648.8 402.3 649.9 401.7M649 394.5 649.6 391.1 649.7 389.4 648.3 388.8 637.3 394.2M642.9 394.8 642.1 398.8 642.5 398.8 644.5 395.2M650.8 394.4 648.3 393.4 655.7 394.5M653.4 397.5 650.9 400.7 650.5 400.7 650 399.8M642.2 409.7 640.5 393.4 640.3 390.2 642.6 406.5 640.8 403.5 641.8 399.4 640.3 394.3 637.8 389.4M645.4 393 646.6 393.4 644.6 394.4 642.4 394.9 640.2 394.5 635.9 393.3 633.8 392.4 631.8 391.3 632.6 389.5 636.6 387.3M648.5 395.6 643.5 396.5 645.2 396.4 647 395.6 648.9 396M652.2 407.5 655 402.8 656.1 400.3 655.9 397.7 654.3 395.5 652.8 396.9 652.2 399.5 652.7 400.8 660.7 399.3M649.8 398.8 650.6 400.1 649.8 399.3 649.4 398.4 649.4 397.5 650.1 401M648.4 399.3 650.4 397.9 650.5 398.1 650 398.9 649.4 397.6M636.9 397.7 638 400.1 639.4 402.3 641.4 403.8 644 404.2 649.1 404.3 651.7 404.1 651.7 403.3 644.2 401.5M642.8 393.5 644.9 389.6 642.3 387.2 637.9 387.3 634.6 390 633.1 394.2 632.3 398.5 634.6 400.1 638.3 397.7 641.7 394.8 641.8 392 637.3 391.7M653.5 397.1 650 394.9 649.7 395.9 652 399.3 653.4 400.9 653.2 399.1 650.5 391.2M646.7 399.8 648.3 400.9 647.1 401.3 645.9 401.2 644.7 399.6 644.7 400.2M651.5 394.1 649.4 395 649.4 395.3 650.9 395.6M650.5 399 650.2 398.4 650.7 396.3 650.5 395.2 649.7 394.4 649.2 394.3 652 399M659.2 392.5 654 398.6 654.9 397.6 656.2 397.2 658.8 397.4M649.9 395.2 649.1 395 648.6 395.1 650.7 397 648.5 395.5 649.3 396.8M649.3 394.3 652.5 397.9 653.3 399.1 650.4 397.7 649.1 396.8 648 395.7 648 394.1 648.5 392.6 649.3 393.8M638.7 402.2 651.7 408.7 650.5 407.3 642.5 401.9 646.6 401.8 643.8 400.6 639.2 399.2 647 401.8M653 397.2 651.8 397 650.6 396.6 648 394.5 649.7 396.2 646.7 395.1M654.5 404.9 643.1 403.2 652.7 404.9 656 402.9 651.5 402.5 646.7 403.6 642.1 405 642.4 407.5 647 409M651 401.1 651.6 401.8 651.5 402.6 643.8 405.3M652.9 405.8 655.6 403.3 656.1 402.5 656.3 401.6 655.8 399.8 654.4 397.4M654.1 392.5 659.2 391.3 658.9 390.2 654 388.3 652.3 387.9 650.5 387.7 647.1 388.2M643.5 398.6 644.3 398.2 644.7 397.6 644 397 644.7 396.6 645.6 396.6 646.3 397.1 646.8 401.5M646.3 393.9 644.9 396.7 643.7 396.9 643.6 395.5 646 393.5 647.3 392.7 648.7 392.3 651.1 394.2 651.7 392.8" fill="none" stroke="#0a0a0a" stroke-width="0.60"/>
<path d="M693.6 395.6 694.8 395.7 695.7 395.5 694.6 394.9 695.2 394.7 700.1 395 699.7 394.2 697.6 392.9M696 392.3 696.6 390.7 695.7 394.8 696.1 394.6 696.7 393 696.2 392.3M694.1 396.1 695.9 393.6 697.5 393.1M694.8 387.8 704.5 391.4 705.5 391.1 700.5 386.5M692.1 393.4 691.1 394.6 690.8 394 690.7 392.6 689.1 392.6 690.1 393.2 694.8 394.3 694.9 394.5 691.8 394.1M692.9 396.3 691.7 398.9 689.5 399.1 685.2 391.6 687.9 396 686.8 397.3 678.8 394M709.1 396.1 694.1 401.3 694.5 399.8 703.7 394.5 708.4 392.1 707.8 393.7 699.7 400.5 695.7 402.5M694.8 395.6 689 398.2 687.4 398.2 686.7 396.8 686.6 393.6 687.4 392.2 688.5 392.4 689.2 393.8M696.9 393.5 696.1 394.4 699 394.5M703.2 389.5 705.6 391.5 705.4 392.7 702.5 394 703.5 395 711.1 397.3M694.4 397.2 695 397 695 396.8 689.6 396.8M695.7 398 701 398.9 703.4 398.5 702.1 396.2 698.6 392.2 697 391.8 697.4 394.4 698.8 396.2 701 393.9M702.6 387.2 705.7 390.1 707 391.8 705.1 391.9 694.9 389 692.8 388.7 693.3 390.5M699.9 391.6 698.5 390.2 697.7 390 697.8 392.8 698.2 393.6 701.9 392.3M693.7 403.8 708 398.4 711.4 396.7 709 394.9 705.2 394.6 701.7 395.9 699.1 398.7 695.6 400.1 691.8 400.7M682.9 391 693.6 395.7 692.9 395.6 685.6 392.9 687.6 394.1 694.7 397.4 693 397.7 694.1 395.3M697.6 389.6 697.5 389.9 699.3 389.4M702.3 401.3 694.4 397.3 692.8 396.8 691 396.5 689.5 397.3 688.4 398.7 686.7 401.8M696.7 391.5 696.3 391.9 695.6 389.7M690.8 397.3 694.9 398.5 693.1 397.7 691.1 397.3 689 397.7 685.2 399.4 684.1 398.5 687.1 392.9M687.7 390 688 396 688.9 398.9 690.6 401.4 693.5 401.4 695 399.2 693.5 396.6 689.6 392 687.2 391.2 686.4 394.1M699 394.8 699.5 394.7 695.5 396.3M689.8 388.2 690 388 690.5 388.8 691.1 389.3 697.8 386.8M697.4 389 700.2 389.9 696.5 388.2M686.9 394.4 692 390.5 690.7 390.5 689.2 391.1 690 391.3 693.2 391.2 692.7 390.9 691.1 390.7M696.5 394.2 692.9 395.1 692.1 396.1 693.7 397.1 691.8 397.1 690 396.7 691.1 395.8 698.1 393.5M698.4 384 696.7 385.2 696.1 386 696.7 386.7 703.9 388.1M692.7 403.2 687.1 397.5 689.1 400.5 690.2 400.9 689.3 397 688.5 395.3 687.8 397.1M686.7 392.1 688.2 394.3 689.3 395 690.6 395.4 691.9 395.4 691.6 394.2 690.9 393.1 690 392.2 688.8 391.7 686.1 391.8M699.5 395.5 691.8 394.5 691.9 395.8 694 397.2 694 397.4 692.7 395.9 695.2 395.2 697.7 394.8 698 395.8 696 397.4M694.5 397.2 689.6 398.7 690.7 399.5 695.8 399.7 698.4 399.7 697.3 398.6 690 396.1 690.1 396M704.3 394.2 698.1 399.3 694.8 401.4 695.4 397.8 699 396.9 706.8 398.7 705.4 398.9 693.5 397.8M703.1 395.7 701.4 397.1 700.4 397.4 699.7 396.6 697.8 393.8 699.2 396.7M681.8 386.4 693.1 389.5 695.1 389.7 696.6 388.6 696.6 386.7 695.8 382.9M691.7 397.8 702.9 394.8 701.9 396.4 699.3 397.7 696.5 398.2 685 396.8M694.2 388.6 694 389.3 694.1 390 695.3 391.6 695.9 391.9 696.5 390.6 696.4 390 695.1 390.5M699.6 384.2 707.6 391.4 707.2 392.9 693.8 387.6 692.3 386.1 699.4 387.4M689.5 388.9 684.4 393.1 681.8 393.7 682.3 390.6 685.2 391.9 690.7 395.6 692.1 394.6 687.2 386.1M700.3 391.8 698.1 394.8 697.8 396 702 393.6 699 391.5 697.4 390.6 696.6 392.1 696.3 393.9M693.7 389.6 697.1 390.8 696.8 391.6 696.3 392.1 694.2 389.9 693.2 389.6M695.9 393.8 691.5 395.7M690.3 391.2 691.4 395.5 691.5 396.9 690.3 396.9 683.5 391.2M692.7 387.9 695.8 388.3 704.9 391 705.7 390.8 688.3 383.1M694.9 396.1 695.8 395.9 696 395.5 690.4 394.4 690.8 394.2 691.7 394.1 691.4 393.5M700.6 386.7 706.9 392.2 707.9 393.5 707.4 394.8 704.2 395.4 700.8 395.7" fill="none" stroke="#0a0a0a" stroke-width="0.60"/>
<text x="683.500" y="495.700" font-family="Liberation Sans,sans-serif" font-size="15.500" letter-spacing="1.150" fill="#a8a8a8">vudn.com</text>
</g></svg>

</body></html>
